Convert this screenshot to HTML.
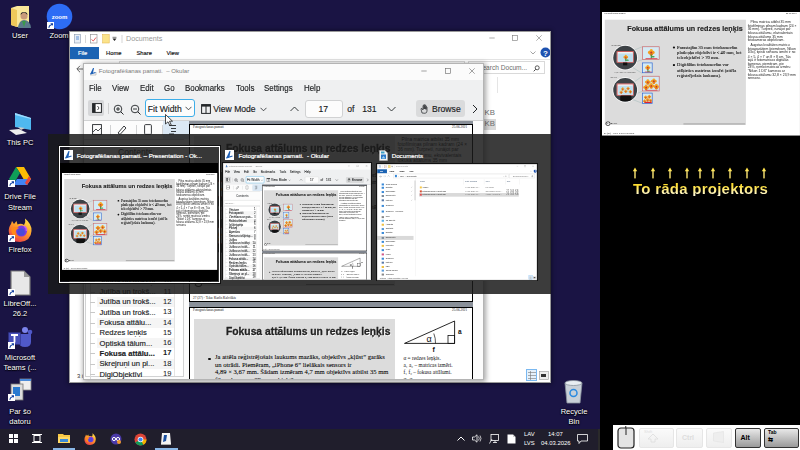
<!DOCTYPE html><html><head><meta charset="utf-8"><style>html,body{margin:0;padding:0;width:800px;height:450px;overflow:hidden;background:#000}*{box-sizing:content-box}</style></head><body><div style="position:absolute;left:0px;top:0px;width:800px;height:450px;overflow:hidden"><div style="position:absolute;left:0px;top:0px;width:600px;height:450px;background:#1a1444;"></div><svg style="position:absolute;left:9px;top:5px;" width="24" height="24" viewBox="0 0 24 24"><path d="M2 3 L8 1 L20 1 L20 20 L8 22 L2 20Z" fill="#fae79a"/><path d="M2 3 L8 5 L8 22 L2 20Z" fill="#efc85a"/><circle cx="15" cy="11" r="3.5" fill="#c99a7a"/><path d="M11.5 10 Q15 5 18.5 10 L18 8 Q15 6 12 8Z" fill="#222"/><path d="M9 23 Q10 15 15 15 Q21 15 22 23Z" fill="#5a7a8a"/><path d="M13 16 L15 22 L17 16Z" fill="#3a9a4a"/></svg><div style="position:absolute;left:-10px;top:31px;width:60px;font-family:'Liberation Sans',sans-serif;font-size:7.5px;line-height:10px;color:#fff;text-shadow:0 0 2px #000,0 1px 1px #000;text-align:center;white-space:nowrap">User</div><svg style="position:absolute;left:46px;top:3px;" width="27" height="27" viewBox="0 0 27 27"><circle cx="13.5" cy="13.5" r="12.8" fill="#2d6cf5"/><text x="13.5" y="15.5" font-size="6" font-family="Liberation Sans" font-weight="bold" fill="#fff" text-anchor="middle" letter-spacing="-0.1">zoom</text></svg><svg style="position:absolute;left:47px;top:22px;" width="7" height="7" viewBox="0 0 7 7"><rect x="0" y="0" width="7" height="7" fill="#fff"/><path d="M1.5 6 Q1.5 3 4.2 2.6 L3.4 1.3 L6 1.3 L6 3.8 L5 2.9 Q2.6 3.4 2.2 6Z" fill="#1340a0"/></svg><div style="position:absolute;left:29px;top:31px;width:60px;font-family:'Liberation Sans',sans-serif;font-size:7.5px;line-height:10px;color:#fff;text-shadow:0 0 2px #000,0 1px 1px #000;text-align:center;white-space:nowrap">Zoom</div><svg style="position:absolute;left:7px;top:112px;" width="28" height="24" viewBox="0 0 28 24"><path d="M8 1 L24 6 L24 18 L8 15Z" fill="#4fb8f0"/><path d="M8 1 L24 6 L24 7 L8 3Z" fill="#9fdcff"/><path d="M2 18 L12 17 L20 21 L9 23Z" fill="#eee"/><path d="M11 15 L18 16 L14 18Z" fill="#ccc"/></svg><div style="position:absolute;left:-10px;top:138px;width:60px;font-family:'Liberation Sans',sans-serif;font-size:7.5px;line-height:10px;color:#fff;text-shadow:0 0 2px #000,0 1px 1px #000;text-align:center;white-space:nowrap">This PC</div><svg style="position:absolute;left:8px;top:166px;" width="24" height="20" viewBox="0 0 24 20"><path d="M8 1 L16 1 L23 13 L19 19 L12 7Z" fill="#fbbc04"/><path d="M8 1 L12 7 L5 19 L1 13Z" fill="#0f9d58"/><path d="M5 19 L9 13 L23 13 L19 19Z" fill="#4285f4"/><path d="M19 19 L23 13 L21 10 L17 17Z" fill="#ea4335"/></svg><svg style="position:absolute;left:8px;top:180px;" width="7" height="7" viewBox="0 0 7 7"><rect x="0" y="0" width="7" height="7" fill="#fff"/><path d="M1.5 6 Q1.5 3 4.2 2.6 L3.4 1.3 L6 1.3 L6 3.8 L5 2.9 Q2.6 3.4 2.2 6Z" fill="#1340a0"/></svg><div style="position:absolute;left:-10px;top:192px;width:60px;font-family:'Liberation Sans',sans-serif;font-size:7.5px;line-height:10px;color:#fff;text-shadow:0 0 2px #000,0 1px 1px #000;text-align:center;white-space:nowrap">Drive File</div><div style="position:absolute;left:-10px;top:202.5px;width:60px;font-family:'Liberation Sans',sans-serif;font-size:7.5px;line-height:10px;color:#fff;text-shadow:0 0 2px #000,0 1px 1px #000;text-align:center;white-space:nowrap">Stream</div><svg style="position:absolute;left:8px;top:217.5px;" width="24" height="25" viewBox="0 0 24 25"><defs><linearGradient id="ffg" x1="0.8" y1="0" x2="0.2" y2="1"><stop offset="0" stop-color="#ffe34a"/><stop offset="0.45" stop-color="#ff9a2a"/><stop offset="1" stop-color="#e8344a"/></linearGradient></defs><path d="M17 0.5 Q24 6 23.5 13 Q23 23 12 24 Q2 24 0.8 14 Q0.5 9 3 6 L4 3 L6 6 L8.5 3 L9.5 6.5 Q13 5 16 7 Q18 4 17 0.5Z" fill="url(#ffg)"/><circle cx="13.5" cy="13" r="5.5" fill="#7a3ae0"/><circle cx="13" cy="14" r="3.8" fill="#4a4ad8"/><path d="M3.5 10 Q7 8 11 10 Q8 11 7.5 14 Q7 18 11 20 Q5 19 3.5 14Z" fill="#ff8a1a"/><path d="M16 8 Q19 10 18.5 13" stroke="#c060f0" stroke-width="1.5" fill="none"/></svg><svg style="position:absolute;left:8px;top:235px;" width="7" height="7" viewBox="0 0 7 7"><rect x="0" y="0" width="7" height="7" fill="#fff"/><path d="M1.5 6 Q1.5 3 4.2 2.6 L3.4 1.3 L6 1.3 L6 3.8 L5 2.9 Q2.6 3.4 2.2 6Z" fill="#1340a0"/></svg><div style="position:absolute;left:-10px;top:245px;width:60px;font-family:'Liberation Sans',sans-serif;font-size:7.5px;line-height:10px;color:#fff;text-shadow:0 0 2px #000,0 1px 1px #000;text-align:center;white-space:nowrap">Firefox</div><svg style="position:absolute;left:9px;top:270px;" width="22" height="26" viewBox="0 0 22 26"><path d="M2 1 L15 1 L21 7 L21 25 L2 25Z" fill="#e8e8e8" stroke="#777" stroke-width="1.2"/><path d="M15 1 L21 7 L15 7Z" fill="#999"/></svg><svg style="position:absolute;left:8px;top:289px;" width="7" height="7" viewBox="0 0 7 7"><rect x="0" y="0" width="7" height="7" fill="#fff"/><path d="M1.5 6 Q1.5 3 4.2 2.6 L3.4 1.3 L6 1.3 L6 3.8 L5 2.9 Q2.6 3.4 2.2 6Z" fill="#1340a0"/></svg><div style="position:absolute;left:-10px;top:299px;width:60px;font-family:'Liberation Sans',sans-serif;font-size:7.5px;line-height:10px;color:#fff;text-shadow:0 0 2px #000,0 1px 1px #000;text-align:center;white-space:nowrap">LibreOff...</div><div style="position:absolute;left:-10px;top:309px;width:60px;font-family:'Liberation Sans',sans-serif;font-size:7.5px;line-height:10px;color:#fff;text-shadow:0 0 2px #000,0 1px 1px #000;text-align:center;white-space:nowrap">26.2</div><svg style="position:absolute;left:7px;top:326px;" width="26" height="23" viewBox="0 0 26 23"><circle cx="18" cy="4" r="3" fill="#7b83eb"/><circle cx="23" cy="6" r="2.3" fill="#5059c9"/><path d="M12 8 L24 8 L24 16 Q24 21 18 21 Q12 21 12 16Z" fill="#5059c9"/><path d="M1.5 6.5 L13.5 6.5 L13.5 18.5 L1.5 18.5Z" fill="#464eb8" stroke="#2a2f80" stroke-width="0.5"/><path d="M4 9 H11 M7.5 9 V16.5" stroke="#fff" stroke-width="1.8"/></svg><svg style="position:absolute;left:8px;top:342px;" width="7" height="7" viewBox="0 0 7 7"><rect x="0" y="0" width="7" height="7" fill="#fff"/><path d="M1.5 6 Q1.5 3 4.2 2.6 L3.4 1.3 L6 1.3 L6 3.8 L5 2.9 Q2.6 3.4 2.2 6Z" fill="#1340a0"/></svg><div style="position:absolute;left:-10px;top:353px;width:60px;font-family:'Liberation Sans',sans-serif;font-size:7.5px;line-height:10px;color:#fff;text-shadow:0 0 2px #000,0 1px 1px #000;text-align:center;white-space:nowrap">Microsoft</div><div style="position:absolute;left:-10px;top:363px;width:60px;font-family:'Liberation Sans',sans-serif;font-size:7.5px;line-height:10px;color:#fff;text-shadow:0 0 2px #000,0 1px 1px #000;text-align:center;white-space:nowrap">Teams (...</div><svg style="position:absolute;left:8px;top:378px;" width="24" height="24" viewBox="0 0 24 24"><rect x="12" y="1" width="11" height="11" fill="#eee" stroke="#888" stroke-width="0.8"/><rect x="12" y="1" width="11" height="2" fill="#4a8ad8"/><rect x="3" y="6" width="12" height="16" fill="#ddd" stroke="#777" stroke-width="0.8"/><rect x="5" y="9" width="7" height="9" fill="#2a7ad0"/></svg><svg style="position:absolute;left:8px;top:394px;" width="7" height="7" viewBox="0 0 7 7"><rect x="0" y="0" width="7" height="7" fill="#fff"/><path d="M1.5 6 Q1.5 3 4.2 2.6 L3.4 1.3 L6 1.3 L6 3.8 L5 2.9 Q2.6 3.4 2.2 6Z" fill="#1340a0"/></svg><div style="position:absolute;left:-10px;top:406.5px;width:60px;font-family:'Liberation Sans',sans-serif;font-size:7.5px;line-height:10px;color:#fff;text-shadow:0 0 2px #000,0 1px 1px #000;text-align:center;white-space:nowrap">Par šo</div><div style="position:absolute;left:-10px;top:416.5px;width:60px;font-family:'Liberation Sans',sans-serif;font-size:7.5px;line-height:10px;color:#fff;text-shadow:0 0 2px #000,0 1px 1px #000;text-align:center;white-space:nowrap">datoru</div><svg style="position:absolute;left:562px;top:379px;" width="23" height="25" viewBox="0 0 23 25"><path d="M3 4 L20 4 L18 24 L5 24Z" fill="#c8d0d8" stroke="#8a949e" stroke-width="0.8"/><ellipse cx="11.5" cy="4" rx="8.5" ry="2.5" fill="#e8eef2" stroke="#8a949e" stroke-width="0.8"/><circle cx="11.5" cy="14" r="3.5" fill="none" stroke="#2a8ae0" stroke-width="1.5"/></svg><div style="position:absolute;left:544px;top:406.5px;width:60px;font-family:'Liberation Sans',sans-serif;font-size:7.5px;line-height:10px;color:#fff;text-shadow:0 0 2px #000,0 1px 1px #000;text-align:center;white-space:nowrap">Recycle</div><div style="position:absolute;left:544px;top:416.5px;width:60px;font-family:'Liberation Sans',sans-serif;font-size:7.5px;line-height:10px;color:#fff;text-shadow:0 0 2px #000,0 1px 1px #000;text-align:center;white-space:nowrap">Bin</div><div style="position:absolute;left:0px;top:429px;width:600px;height:21px;background:#201e2c;"></div><svg style="position:absolute;left:9px;top:434px;" width="9" height="9" viewBox="0 0 9 9"><rect x="0" y="0" width="4" height="4" fill="#fff"/><rect x="5" y="0" width="4" height="4" fill="#fff"/><rect x="0" y="5" width="4" height="4" fill="#fff"/><rect x="5" y="5" width="4" height="4" fill="#fff"/></svg><svg style="position:absolute;left:32px;top:434px;" width="10" height="9" viewBox="0 0 10 9"><rect x="2" y="1.5" width="6" height="6" fill="none" stroke="#fff" stroke-width="1"/><path d="M0 0.5 H10 M0 8.5 H10" stroke="#fff" stroke-width="1"/></svg><svg style="position:absolute;left:58px;top:433px;" width="12" height="11" viewBox="0 0 12 11"><path d="M0 1 L5 1 L6 2 L12 2 L12 10 L0 10Z" fill="#f8c846"/><rect x="0" y="4" width="12" height="6" fill="#ffd966"/><rect x="2" y="6" width="8" height="3" fill="#3a8ad8"/></svg><div style="position:absolute;left:53px;top:447.5px;width:22px;height:2px;background:#8ab8e8;"></div><svg style="position:absolute;left:84px;top:433px;" width="12" height="12.5" viewBox="0 0 24 25"><path d="M17 0.5 Q24 6 23.5 13 Q23 23 12 24 Q2 24 0.8 14 Q0.5 9 3 6 L4 3 L6 6 L8.5 3 L9.5 6.5 Q13 5 16 7 Q18 4 17 0.5Z" fill="url(#ffg)"/><circle cx="13.5" cy="13" r="5.5" fill="#7a3ae0"/><circle cx="13" cy="14" r="3.8" fill="#4a4ad8"/><path d="M3.5 10 Q7 8 11 10 Q8 11 7.5 14 Q7 18 11 20 Q5 19 3.5 14Z" fill="#ff8a1a"/></svg><svg style="position:absolute;left:110px;top:433px;" width="12" height="12" viewBox="0 0 12 12"><circle cx="6" cy="6" r="5.5" fill="#4b3aa8"/><circle cx="4" cy="6" r="1.6" fill="none" stroke="#fff" stroke-width="1"/><circle cx="8" cy="6" r="1.6" fill="none" stroke="#fff" stroke-width="1"/><circle cx="9" cy="9" r="2" fill="#f39a2a"/></svg><svg style="position:absolute;left:134px;top:433px;" width="13" height="13" viewBox="0 0 13 13"><circle cx="6.5" cy="6.5" r="6" fill="#db4437"/><path d="M6.5 6.5 L1.3 9.5 A6 6 0 0 0 9.5 11.7Z" fill="#0f9d58"/><path d="M6.5 6.5 L9.5 11.7 A6 6 0 0 0 12.5 6.5 L6.5 6.5Z" fill="#f4b400"/><circle cx="6.5" cy="6.5" r="2.8" fill="#fff"/><circle cx="6.5" cy="6.5" r="2.1" fill="#4285f4"/></svg><svg style="position:absolute;left:160px;top:432px;" width="12" height="13" viewBox="0 0 12 13"><path d="M2 1 L10 1 L11 12 L1 12Z" fill="#f4f4f4"/><path d="M4 3 L7 3 L6 9 L3 10Z" fill="#1a4fa0"/><path d="M1 12 L11 12 L11 13 L1 13Z" fill="#aaa"/></svg><div style="position:absolute;left:155px;top:447.5px;width:23px;height:2px;background:#8ab8e8;"></div><svg style="position:absolute;left:457px;top:436px;" width="8" height="5" viewBox="0 0 8 5"><path d="M0.5 4.5 L4 1 L7.5 4.5" fill="none" stroke="#fff" stroke-width="1"/></svg><svg style="position:absolute;left:472px;top:434px;" width="10" height="9" viewBox="0 0 10 9"><path d="M0.5 3 H2.5 L5 0.8 V8.2 L2.5 6 H0.5Z" fill="none" stroke="#fff" stroke-width="0.8"/><path d="M6.5 2.5 Q8 4.5 6.5 6.5 M8 1.5 Q10 4.5 8 7.5" fill="none" stroke="#fff" stroke-width="0.7"/></svg><svg style="position:absolute;left:489px;top:434px;" width="10" height="10" viewBox="0 0 10 10"><rect x="2" y="0.5" width="7.5" height="6" fill="none" stroke="#fff" stroke-width="0.8"/><path d="M4 8.5 H8 M6 6.5 V8.5 M0.5 9.5 L3 5" stroke="#fff" stroke-width="0.8"/></svg><svg style="position:absolute;left:507px;top:434px;" width="9" height="10" viewBox="0 0 9 10"><path d="M0.5 0.5 H6 L8.5 3 V9.5 H0.5Z" fill="#fff"/><path d="M6 0.5 V3 H8.5" fill="#ccc"/></svg><div style="position:absolute;left:524px;top:431.5px;font-family:'Liberation Sans',sans-serif;font-size:5.9px;line-height:1;color:#fff;white-space:nowrap;">LAV</div><div style="position:absolute;left:524px;top:440.5px;font-family:'Liberation Sans',sans-serif;font-size:5.9px;line-height:1;color:#fff;white-space:nowrap;">LVS</div><div style="position:absolute;left:548px;top:431.5px;font-family:'Liberation Sans',sans-serif;font-size:5.9px;line-height:1;color:#fff;white-space:nowrap;">14:07</div><div style="position:absolute;left:541px;top:440.5px;font-family:'Liberation Sans',sans-serif;font-size:5.9px;line-height:1;color:#fff;white-space:nowrap;">04.03.2026</div><svg style="position:absolute;left:577px;top:434px;" width="11" height="10" viewBox="0 0 11 10"><path d="M0.5 0.5 H10.5 V7 H4 L2 9.5 V7 H0.5Z" fill="none" stroke="#fff" stroke-width="0.8"/></svg><div style="position:absolute;left:598px;top:429px;width:2px;height:21px;background:#2a2a2a;"></div><div style="position:absolute;left:69px;top:31px;width:482px;height:352px;background:#ccc;box-shadow:0 0 4px 1px rgba(0,0,0,0.4)"></div><div style="position:absolute;left:69px;top:31px;"><div style="position:absolute;left:0px;top:0px;width:482px;height:352px;background:#fff;overflow:hidden"><svg style="position:absolute;left:5px;top:3px;" width="50" height="10" viewBox="0 0 50 10"><rect x="0.5" y="0.5" width="6" height="8.5" fill="#e8eef6" stroke="#8a9ab0" stroke-width="0.6"/><path d="M2 3 H5 M2 5 H5" stroke="#3a7ad0" stroke-width="0.8"/><path d="M11.5 1 V9" stroke="#bbb" stroke-width="0.6"/><rect x="16.5" y="0.5" width="6.5" height="8.5" fill="#fff" stroke="#888" stroke-width="0.6"/><path d="M17.5 5.5 L19.3 7 L22 3.5" stroke="#d33" stroke-width="0.8" fill="none"/><rect x="28.7" y="0.5" width="6.5" height="8.5" fill="#fbe38a" stroke="#e0b040" stroke-width="0.5"/><path d="M38.5 4.5 L42.5 4.5 L40.5 7Z" fill="#222"/><path d="M38.5 3.3 H42.5" stroke="#222" stroke-width="0.6"/><path d="M48 1 V9" stroke="#bbb" stroke-width="0.6"/></svg><div style="position:absolute;left:57px;top:4px;font-family:'Liberation Sans',sans-serif;font-size:7.2px;line-height:1;color:#9a9a9a;white-space:nowrap;">Documents</div><svg style="position:absolute;left:419.5px;top:4px;" width="6" height="6" viewBox="0 0 6 6"><path d="M0.3 3 H5.7" stroke="#777" stroke-width="0.6"/></svg><svg style="position:absolute;left:442.7px;top:4px;" width="6" height="6" viewBox="0 0 6 6"><rect x="0.4" y="0.4" width="5.2" height="5.2" fill="none" stroke="#777" stroke-width="0.6"/></svg><svg style="position:absolute;left:466.7px;top:4px;" width="6" height="6" viewBox="0 0 6 6"><path d="M0.3 0.3 L5.7 5.7 M5.7 0.3 L0.3 5.7" stroke="#777" stroke-width="0.6"/></svg><div style="position:absolute;left:0px;top:16.3px;width:29.5px;height:11.5px;background:#1b63b3;"></div><div style="position:absolute;left:9px;top:19.5px;font-family:'Liberation Sans',sans-serif;font-size:5.8px;line-height:1;color:#fff;white-space:nowrap;-webkit-text-stroke:0.15px #fff">File</div><div style="position:absolute;left:37px;top:19.5px;font-family:'Liberation Sans',sans-serif;font-size:5.8px;line-height:1;color:#111;white-space:nowrap;-webkit-text-stroke:0.15px #111">Home</div><div style="position:absolute;left:67.5px;top:19.5px;font-family:'Liberation Sans',sans-serif;font-size:5.8px;line-height:1;color:#111;white-space:nowrap;-webkit-text-stroke:0.15px #111">Share</div><div style="position:absolute;left:97.5px;top:19.5px;font-family:'Liberation Sans',sans-serif;font-size:5.8px;line-height:1;color:#111;white-space:nowrap;-webkit-text-stroke:0.15px #111">View</div><svg style="position:absolute;left:460.5px;top:20px;" width="6" height="4" viewBox="0 0 6 4"><path d="M0.5 0.5 L3 3 L5.5 0.5" stroke="#666" stroke-width="0.6" fill="none"/></svg><svg style="position:absolute;left:471px;top:16px;" width="11" height="11" viewBox="0 0 11 11"><circle cx="5.5" cy="5.5" r="5" fill="#1d52b0"/><text x="5.5" y="8.5" font-size="8" font-weight="bold" font-family="Liberation Sans" fill="#fff" text-anchor="middle">?</text></svg><div style="position:absolute;left:0px;top:28px;width:482px;height:1px;background:#e3e3e3;"></div><svg style="position:absolute;left:6.5px;top:33.5px;" width="9" height="8" viewBox="0 0 9 8"><path d="M8.5 4 H1 M4 0.8 L0.8 4 L4 7.2" stroke="#555" stroke-width="0.9" fill="none"/></svg><svg style="position:absolute;left:18px;top:33px;" width="30" height="8" viewBox="0 0 30 8"><path d="M0.5 4 H8 M5 1 L8 4 L5 7" stroke="#aaa" stroke-width="0.8" fill="none"/><path d="M14 5 L17 2 L20 5" stroke="#555" stroke-width="0.8" fill="none"/></svg><div style="position:absolute;left:50px;top:30px;width:346px;height:13px;border:1px solid #d9d9d9;box-sizing:border-box"></div><div style="position:absolute;left:54px;top:33px;width:6px;height:7px;background:#3a8ad8;"></div><div style="position:absolute;left:64px;top:33.5px;font-family:'Liberation Sans',sans-serif;font-size:5.8px;line-height:1;color:#222;white-space:nowrap;">› &nbsp;User &nbsp;› &nbsp;Documents</div><div style="position:absolute;left:380px;top:33.5px;font-family:'Liberation Sans',sans-serif;font-size:5.8px;line-height:1;color:#666;white-space:nowrap;">⌄ ↻</div><div style="position:absolute;left:399px;top:30px;width:77px;height:13px;border:1px solid #d9d9d9;box-sizing:border-box"></div><div style="position:absolute;left:409px;top:34px;font-family:'Liberation Sans',sans-serif;font-size:6.6px;line-height:1;color:#6d6d6d;white-space:nowrap;">Search Docum...</div><svg style="position:absolute;left:464px;top:34px;" width="7" height="7" viewBox="0 0 7 7"><circle cx="4.2" cy="2.8" r="2" fill="none" stroke="#333" stroke-width="0.8"/><path d="M2.7 4.3 L0.7 6.3" stroke="#333" stroke-width="0.9"/></svg><div style="position:absolute;left:14px;top:59px;width:7px;height:6px;background:#3a8ad8;"></div><div style="position:absolute;left:26px;top:59px;font-family:'Liberation Sans',sans-serif;font-size:5.8px;line-height:1;color:#222;white-space:nowrap;">Quick access</div><div style="position:absolute;left:14px;top:69px;width:7px;height:6px;background:#3a8ad8;"></div><div style="position:absolute;left:26px;top:69px;font-family:'Liberation Sans',sans-serif;font-size:5.8px;line-height:1;color:#222;white-space:nowrap;">Desktop</div><div style="position:absolute;left:103px;top:69px;font-family:'Liberation Sans',sans-serif;font-size:5px;line-height:1;color:#888;white-space:nowrap;">✓</div><div style="position:absolute;left:14px;top:82px;width:7px;height:6px;background:#3a8ad8;"></div><div style="position:absolute;left:26px;top:82px;font-family:'Liberation Sans',sans-serif;font-size:5.8px;line-height:1;color:#222;white-space:nowrap;">Downloads</div><div style="position:absolute;left:103px;top:82px;font-family:'Liberation Sans',sans-serif;font-size:5px;line-height:1;color:#888;white-space:nowrap;">✓</div><div style="position:absolute;left:14px;top:94px;width:7px;height:6px;background:#7a8a9a;"></div><div style="position:absolute;left:26px;top:94px;font-family:'Liberation Sans',sans-serif;font-size:5.8px;line-height:1;color:#222;white-space:nowrap;">Documents</div><div style="position:absolute;left:103px;top:94px;font-family:'Liberation Sans',sans-serif;font-size:5px;line-height:1;color:#888;white-space:nowrap;">✓</div><div style="position:absolute;left:14px;top:107px;width:7px;height:6px;background:#5a7aa8;"></div><div style="position:absolute;left:26px;top:107px;font-family:'Liberation Sans',sans-serif;font-size:5.8px;line-height:1;color:#222;white-space:nowrap;">Pictures</div><div style="position:absolute;left:103px;top:107px;font-family:'Liberation Sans',sans-serif;font-size:5px;line-height:1;color:#888;white-space:nowrap;">✓</div><div style="position:absolute;left:14px;top:124px;width:7px;height:6px;background:#3a8ad8;"></div><div style="position:absolute;left:26px;top:124px;font-family:'Liberation Sans',sans-serif;font-size:5.8px;line-height:1;color:#222;white-space:nowrap;">OneDrive</div><div style="position:absolute;left:14px;top:141px;width:7px;height:6px;background:#3a8ad8;"></div><div style="position:absolute;left:26px;top:141px;font-family:'Liberation Sans',sans-serif;font-size:5.8px;line-height:1;color:#222;white-space:nowrap;">OneDrive - Personal</div><div style="position:absolute;left:14px;top:158px;width:7px;height:6px;background:#888;"></div><div style="position:absolute;left:26px;top:158px;font-family:'Liberation Sans',sans-serif;font-size:5.8px;line-height:1;color:#222;white-space:nowrap;">User</div><div style="position:absolute;left:14px;top:169px;width:7px;height:6px;background:#5ab0e8;"></div><div style="position:absolute;left:26px;top:169px;font-family:'Liberation Sans',sans-serif;font-size:5.8px;line-height:1;color:#222;white-space:nowrap;">3D Objects</div><div style="position:absolute;left:14px;top:181px;width:7px;height:6px;background:#f0c040;"></div><div style="position:absolute;left:26px;top:181px;font-family:'Liberation Sans',sans-serif;font-size:5.8px;line-height:1;color:#222;white-space:nowrap;">AppData</div><div style="position:absolute;left:14px;top:194px;width:7px;height:6px;background:#5a9ad8;"></div><div style="position:absolute;left:26px;top:194px;font-family:'Liberation Sans',sans-serif;font-size:5.8px;line-height:1;color:#222;white-space:nowrap;">Contacts</div><div style="position:absolute;left:14px;top:206px;width:7px;height:6px;background:#3a8ad8;"></div><div style="position:absolute;left:26px;top:206px;font-family:'Liberation Sans',sans-serif;font-size:5.8px;line-height:1;color:#222;white-space:nowrap;">Desktop</div><div style="position:absolute;left:0px;top:218px;width:110px;height:12px;background:#d9d9d9;"></div><div style="position:absolute;left:14px;top:221px;width:7px;height:6px;background:#7a8a9a;"></div><div style="position:absolute;left:26px;top:221px;font-family:'Liberation Sans',sans-serif;font-size:5.8px;line-height:1;color:#222;white-space:nowrap;">Documents</div><div style="position:absolute;left:14px;top:233px;width:7px;height:6px;background:#3a8ad8;"></div><div style="position:absolute;left:26px;top:233px;font-family:'Liberation Sans',sans-serif;font-size:5.8px;line-height:1;color:#222;white-space:nowrap;">Downloads</div><div style="position:absolute;left:14px;top:245px;width:7px;height:6px;background:#f0c040;"></div><div style="position:absolute;left:26px;top:245px;font-family:'Liberation Sans',sans-serif;font-size:5.8px;line-height:1;color:#222;white-space:nowrap;">Favorites</div><div style="position:absolute;left:14px;top:258px;width:7px;height:6px;background:#3a8ad8;"></div><div style="position:absolute;left:26px;top:258px;font-family:'Liberation Sans',sans-serif;font-size:5.8px;line-height:1;color:#222;white-space:nowrap;">Links</div><div style="position:absolute;left:14px;top:271px;width:7px;height:6px;background:#d05a8a;"></div><div style="position:absolute;left:26px;top:271px;font-family:'Liberation Sans',sans-serif;font-size:5.8px;line-height:1;color:#222;white-space:nowrap;">Music</div><div style="position:absolute;left:14px;top:284px;width:7px;height:6px;background:#3a8ad8;"></div><div style="position:absolute;left:26px;top:284px;font-family:'Liberation Sans',sans-serif;font-size:5.8px;line-height:1;color:#222;white-space:nowrap;">OneDrive</div><div style="position:absolute;left:14px;top:296px;width:7px;height:6px;background:#5a7aa8;"></div><div style="position:absolute;left:26px;top:296px;font-family:'Liberation Sans',sans-serif;font-size:5.8px;line-height:1;color:#222;white-space:nowrap;">Pictures</div><div style="position:absolute;left:14px;top:309px;width:7px;height:6px;background:#f0c040;"></div><div style="position:absolute;left:26px;top:309px;font-family:'Liberation Sans',sans-serif;font-size:5.8px;line-height:1;color:#222;white-space:nowrap;">PBS</div><div style="position:absolute;left:14px;top:320px;width:7px;height:6px;background:#5a9ad8;"></div><div style="position:absolute;left:26px;top:320px;font-family:'Liberation Sans',sans-serif;font-size:5.8px;line-height:1;color:#222;white-space:nowrap;">Saved Games</div><div style="position:absolute;left:14px;top:332px;width:7px;height:6px;background:#888;"></div><div style="position:absolute;left:26px;top:332px;font-family:'Liberation Sans',sans-serif;font-size:5.8px;line-height:1;color:#222;white-space:nowrap;">Searches</div><div style="position:absolute;left:116px;top:44px;width:0.8px;height:296px;background:#e5e5e5;"></div><div style="position:absolute;left:113px;top:50px;width:2.5px;height:60px;background:#cdcdcd;"></div><div style="position:absolute;left:129.5px;top:50.5px;font-family:'Liberation Sans',sans-serif;font-size:5.8px;line-height:1;color:#4c607a;white-space:nowrap;">Name</div><div style="position:absolute;left:266px;top:50.5px;font-family:'Liberation Sans',sans-serif;font-size:5.8px;line-height:1;color:#4c607a;white-space:nowrap;">Date modified</div><div style="position:absolute;left:327px;top:50.5px;font-family:'Liberation Sans',sans-serif;font-size:5.8px;line-height:1;color:#4c607a;white-space:nowrap;">Type</div><div style="position:absolute;left:390.6px;top:50.5px;font-family:'Liberation Sans',sans-serif;font-size:5.8px;line-height:1;color:#4c607a;white-space:nowrap;">Size</div><div style="position:absolute;left:261px;top:46px;width:0.7px;height:16px;background:#e5e5e5;"></div><div style="position:absolute;left:322px;top:46px;width:0.7px;height:16px;background:#e5e5e5;"></div><div style="position:absolute;left:385.6px;top:46px;width:0.7px;height:16px;background:#e5e5e5;"></div><div style="position:absolute;left:427.5px;top:46px;width:0.7px;height:16px;background:#e5e5e5;"></div><div style="position:absolute;left:129px;top:68px;width:6px;height:6px;background:#f8c846;"></div><div style="position:absolute;left:136px;top:68px;font-family:'Liberation Sans',sans-serif;font-size:5.8px;line-height:1;color:#222;white-space:nowrap;">Arch90</div><div style="position:absolute;left:266px;top:68px;font-family:'Liberation Sans',sans-serif;font-size:5.8px;line-height:1;color:#6d6d6d;white-space:nowrap;">04.03.2026 11:...</div><div style="position:absolute;left:327px;top:68px;font-family:'Liberation Sans',sans-serif;font-size:5.8px;line-height:1;color:#6d6d6d;white-space:nowrap;">File folder</div><div style="position:absolute;left:129px;top:79.7px;width:6px;height:6px;background:#d35030;"></div><div style="position:absolute;left:136px;top:79.7px;font-family:'Liberation Sans',sans-serif;font-size:5.8px;line-height:1;color:#222;white-space:nowrap;">Fotografēšanas_pamati.odp</div><div style="position:absolute;left:266px;top:79.7px;font-family:'Liberation Sans',sans-serif;font-size:5.8px;line-height:1;color:#6d6d6d;white-space:nowrap;">04.03.2026 11:...</div><div style="position:absolute;left:327px;top:79.7px;font-family:'Liberation Sans',sans-serif;font-size:5.8px;line-height:1;color:#6d6d6d;white-space:nowrap;">OpenOffice prese...</div><div style="position:absolute;left:380px;top:77.2px;width:46px;font-family:'Liberation Sans',sans-serif;font-size:7.8px;line-height:10px;color:#6d6d6d;text-align:right;white-space:nowrap">22 504 KB</div><div style="position:absolute;left:126.5px;top:88px;width:300px;height:10.5px;background:#d9d9d9;"></div><div style="position:absolute;left:129px;top:90px;width:6px;height:6px;background:#e05050;"></div><div style="position:absolute;left:136px;top:90px;font-family:'Liberation Sans',sans-serif;font-size:5.8px;line-height:1;color:#222;white-space:nowrap;">Fotografēšanas_pamati.pdf</div><div style="position:absolute;left:266px;top:90px;font-family:'Liberation Sans',sans-serif;font-size:5.8px;line-height:1;color:#6d6d6d;white-space:nowrap;">04.03.2026 11:...</div><div style="position:absolute;left:327px;top:90px;font-family:'Liberation Sans',sans-serif;font-size:5.8px;line-height:1;color:#6d6d6d;white-space:nowrap;">Adobe Acrobat D...</div><div style="position:absolute;left:380px;top:87.5px;width:46px;font-family:'Liberation Sans',sans-serif;font-size:7.8px;line-height:10px;color:#6d6d6d;text-align:right;white-space:nowrap">26 503 KB</div><div style="position:absolute;left:8px;top:342.5px;font-family:'Liberation Sans',sans-serif;font-size:5.8px;line-height:1;color:#333;white-space:nowrap;">3 items &nbsp; 1 item selected &nbsp;741 KB</div><div style="position:absolute;left:457px;top:338px;width:11px;height:12px;border:1px solid #7ab8f0;background:#e5f1fb;box-sizing:border-box"></div><svg style="position:absolute;left:458px;top:340px;" width="10" height="9" viewBox="0 0 10 9"><path d="M1 1.5H9M1 4.5H9M1 7.5H9M3.5 0V9" stroke="#777" stroke-width="0.6"/></svg><svg style="position:absolute;left:470px;top:340px;" width="10" height="9" viewBox="0 0 10 9"><rect x="0.5" y="0.5" width="9" height="8" fill="#eee" stroke="#999" stroke-width="0.6"/><rect x="2" y="3" width="5" height="3" fill="#333"/></svg><div style="position:absolute;left:0px;top:0px;width:482px;height:352px;border:1px solid #9a9a9a;box-sizing:border-box"></div></div></div><div style="position:absolute;left:83px;top:62.7px;width:401px;height:317px;background:#ccc;box-shadow:1px 1px 5px 1px rgba(0,0,0,0.35)"></div><div style="position:absolute;left:83px;top:62.7px;"><div style="position:absolute;left:0px;top:0px;width:401px;height:317px;background:#eff0f1;overflow:hidden"><div style="position:absolute;left:0px;top:0px;width:401px;height:17.8px;background:#fbfbfb;"></div><svg style="position:absolute;left:6px;top:4px;" width="8" height="9" viewBox="0 0 8 9"><path d="M1 8 L7 8 L7 5" fill="none" stroke="#aaa" stroke-width="0.6"/><path d="M4 1 L5 1 L4 6 L1 7.5Z" fill="#1d5fb5"/><path d="M1.5 7 L6.5 5.5" stroke="#1d5fb5" stroke-width="1.2"/></svg><div style="position:absolute;left:15.8px;top:5px;font-family:'Liberation Sans',sans-serif;font-size:6.1px;line-height:1;color:#7a7a7a;white-space:nowrap;">Fotografēšanas pamati. &nbsp;– Okular</div><svg style="position:absolute;left:338px;top:5px;" width="6" height="6" viewBox="0 0 6 6"><path d="M0.3 3 H5.7" stroke="#666" stroke-width="0.6"/></svg><svg style="position:absolute;left:361.7px;top:5px;" width="6" height="6" viewBox="0 0 6 6"><rect x="0.4" y="0.4" width="5.2" height="5.2" fill="none" stroke="#666" stroke-width="0.6"/></svg><svg style="position:absolute;left:385.7px;top:5px;" width="6" height="6" viewBox="0 0 6 6"><path d="M0.3 0.3 L5.7 5.7 M5.7 0.3 L0.3 5.7" stroke="#666" stroke-width="0.6"/></svg><div style="position:absolute;left:6.3px;top:21.4px;font-family:'Liberation Sans',sans-serif;font-size:8.8px;line-height:1;color:#1a1c1e;white-space:nowrap;-webkit-text-stroke:0.15px #1a1c1e;transform-origin:0 0;transform:scaleX(0.9)">File</div><div style="position:absolute;left:28.7px;top:21.4px;font-family:'Liberation Sans',sans-serif;font-size:8.8px;line-height:1;color:#1a1c1e;white-space:nowrap;-webkit-text-stroke:0.15px #1a1c1e;transform-origin:0 0;transform:scaleX(0.9)">View</div><div style="position:absolute;left:57px;top:21.4px;font-family:'Liberation Sans',sans-serif;font-size:8.8px;line-height:1;color:#1a1c1e;white-space:nowrap;-webkit-text-stroke:0.15px #1a1c1e;transform-origin:0 0;transform:scaleX(0.9)">Edit</div><div style="position:absolute;left:81px;top:21.4px;font-family:'Liberation Sans',sans-serif;font-size:8.8px;line-height:1;color:#1a1c1e;white-space:nowrap;-webkit-text-stroke:0.15px #1a1c1e;transform-origin:0 0;transform:scaleX(0.9)">Go</div><div style="position:absolute;left:102px;top:21.4px;font-family:'Liberation Sans',sans-serif;font-size:8.8px;line-height:1;color:#1a1c1e;white-space:nowrap;-webkit-text-stroke:0.15px #1a1c1e;transform-origin:0 0;transform:scaleX(0.9)">Bookmarks</div><div style="position:absolute;left:153px;top:21.4px;font-family:'Liberation Sans',sans-serif;font-size:8.8px;line-height:1;color:#1a1c1e;white-space:nowrap;-webkit-text-stroke:0.15px #1a1c1e;transform-origin:0 0;transform:scaleX(0.9)">Tools</div><div style="position:absolute;left:181.3px;top:21.4px;font-family:'Liberation Sans',sans-serif;font-size:8.8px;line-height:1;color:#1a1c1e;white-space:nowrap;-webkit-text-stroke:0.15px #1a1c1e;transform-origin:0 0;transform:scaleX(0.9)">Settings</div><div style="position:absolute;left:221px;top:21.4px;font-family:'Liberation Sans',sans-serif;font-size:8.8px;line-height:1;color:#1a1c1e;white-space:nowrap;-webkit-text-stroke:0.15px #1a1c1e;transform-origin:0 0;transform:scaleX(0.9)">Help</div><div style="position:absolute;left:4.5px;top:37.3px;width:16.5px;height:16.5px;background:#d6d7d9;border-radius:2px"></div><svg style="position:absolute;left:9px;top:40px;" width="10" height="10" viewBox="0 0 10 10"><rect x="0.6" y="0.6" width="8.8" height="8.8" fill="#fff" stroke="#232629" stroke-width="1"/><rect x="0.6" y="0.6" width="3" height="8.8" fill="#232629"/><path d="M5.5 3 L7 5 L5.5 7" stroke="#232629" stroke-width="0.8" fill="none"/></svg><svg style="position:absolute;left:29.5px;top:41px;" width="11" height="11" viewBox="0 0 11 11"><circle cx="5" cy="5" r="3.8" fill="none" stroke="#232629" stroke-width="0.9"/><path d="M3 5 H7 M5 3 V7" stroke="#232629" stroke-width="0.9"/><path d="M7.8 7.8 L10.5 10.5" stroke="#232629" stroke-width="1"/></svg><svg style="position:absolute;left:47px;top:41px;" width="11" height="11" viewBox="0 0 11 11"><circle cx="5" cy="5" r="3.8" fill="none" stroke="#232629" stroke-width="0.9"/><path d="M3 5 H7" stroke="#232629" stroke-width="0.9"/><path d="M7.8 7.8 L10.5 10.5" stroke="#232629" stroke-width="1"/></svg><div style="position:absolute;left:25px;top:40px;width:0.7px;height:11px;background:#cfd0d1;"></div><div style="position:absolute;left:61.5px;top:36.3px;width:50.5px;height:18.5px;background:#fcfcfc;border:1px solid #3daee9;border-radius:3px;box-sizing:border-box"></div><div style="position:absolute;left:64.8px;top:42.5px;font-family:'Liberation Sans',sans-serif;font-size:8.6px;line-height:1;color:#1a1c1e;white-space:nowrap;-webkit-text-stroke:0.15px #1a1c1e">Fit Width</div><svg style="position:absolute;left:102px;top:43.5px;" width="7" height="5" viewBox="0 0 7 5"><path d="M0.5 0.8 L3.5 3.8 L6.5 0.8" stroke="#232629" stroke-width="0.8" fill="none"/></svg><svg style="position:absolute;left:118px;top:41px;" width="10" height="10" viewBox="0 0 10 10"><rect x="0.6" y="0.6" width="8.8" height="8.8" fill="none" stroke="#232629" stroke-width="1"/><path d="M5 0.6 V9.4" stroke="#232629" stroke-width="1"/><rect x="0.6" y="0.6" width="8.8" height="2" fill="#232629"/></svg><div style="position:absolute;left:130.3px;top:42.8px;font-family:'Liberation Sans',sans-serif;font-size:8.6px;line-height:1;color:#1a1c1e;white-space:nowrap;-webkit-text-stroke:0.15px #1a1c1e">View Mode</div><svg style="position:absolute;left:177px;top:44px;" width="7" height="5" viewBox="0 0 7 5"><path d="M0.5 0.8 L3.5 3.8 L6.5 0.8" stroke="#232629" stroke-width="0.8" fill="none"/></svg><svg style="position:absolute;left:207px;top:43px;" width="9" height="6" viewBox="0 0 9 6"><path d="M0.5 5 L4.5 1 L8.5 5" stroke="#232629" stroke-width="0.9" fill="none"/></svg><div style="position:absolute;left:222px;top:36.9px;width:38px;height:18px;background:#fcfcfc;border:1px solid #d1d2d3;border-radius:3px;box-sizing:border-box"></div><div style="position:absolute;left:235.5px;top:42.8px;font-family:'Liberation Sans',sans-serif;font-size:8.6px;line-height:1;color:#1a1c1e;white-space:nowrap;-webkit-text-stroke:0.15px #1a1c1e">17</div><div style="position:absolute;left:264.3px;top:42.8px;font-family:'Liberation Sans',sans-serif;font-size:8.6px;line-height:1;color:#1a1c1e;white-space:nowrap;-webkit-text-stroke:0.15px #1a1c1e">of</div><div style="position:absolute;left:279.3px;top:42.8px;font-family:'Liberation Sans',sans-serif;font-size:8.6px;line-height:1;color:#1a1c1e;white-space:nowrap;-webkit-text-stroke:0.15px #1a1c1e">131</div><svg style="position:absolute;left:304px;top:43px;" width="9" height="6" viewBox="0 0 9 6"><path d="M0.5 1 L4.5 5 L8.5 1" stroke="#232629" stroke-width="0.9" fill="none"/></svg><div style="position:absolute;left:333.3px;top:37.8px;width:49px;height:16.2px;background:#dadbdc;border-radius:3px"></div><svg style="position:absolute;left:337px;top:41px;" width="10" height="10" viewBox="0 0 10 10"><path d="M2 9 L1 5 Q1 4 2 4.5 L3 6 V1.5 Q3.5 0.8 4 1.5 V5 V1 Q4.5 0.3 5 1 V5 V1.5 Q5.5 0.8 6 1.5 V5.5 V3 Q6.5 2.3 7 3 V7 Q7 9 5 9.3Z" fill="none" stroke="#232629" stroke-width="0.7"/></svg><div style="position:absolute;left:349px;top:42.8px;font-family:'Liberation Sans',sans-serif;font-size:8.6px;line-height:1;color:#1a1c1e;white-space:nowrap;-webkit-text-stroke:0.15px #1a1c1e">Browse</div><svg style="position:absolute;left:389px;top:41px;" width="6" height="10" viewBox="0 0 6 10"><path d="M1 1 L5 5 L1 9" stroke="#232629" stroke-width="1" fill="none"/></svg><div style="position:absolute;left:0px;top:57px;width:401px;height:0.8px;background:#d1d2d3;"></div><div style="position:absolute;left:0px;top:58px;width:106px;height:259px;background:#fcfcfc;"></div><svg style="position:absolute;left:8.5px;top:61px;" width="10" height="11" viewBox="0 0 10 11"><rect x="0.6" y="0.6" width="8.8" height="9.8" fill="none" stroke="#232629" stroke-width="0.9"/><path d="M1 8 L4 5 L6 7 L9 4" stroke="#232629" stroke-width="0.8" fill="none"/></svg><div style="position:absolute;left:27px;top:62px;width:0.8px;height:10px;background:#d1d2d3;"></div><svg style="position:absolute;left:34px;top:61px;" width="10" height="11" viewBox="0 0 10 11"><path d="M1 9 L7 2 L9 4 L3 10.5Z" fill="none" stroke="#232629" stroke-width="0.9"/></svg><div style="position:absolute;left:53px;top:62px;width:0.8px;height:10px;background:#d1d2d3;"></div><svg style="position:absolute;left:61px;top:61px;" width="8" height="11" viewBox="0 0 8 11"><rect x="0.6" y="0.6" width="6.8" height="9.8" rx="1" fill="none" stroke="#232629" stroke-width="0.9"/></svg><div style="position:absolute;left:79px;top:62px;width:0.8px;height:10px;background:#d1d2d3;"></div><svg style="position:absolute;left:85px;top:61px;" width="9" height="11" viewBox="0 0 9 11"><path d="M1 1.5H8 M3 4.5H8 M3 7.5H8 M1 10H6" stroke="#232629" stroke-width="0.9"/></svg><div style="position:absolute;left:0px;top:76px;width:106px;height:0.8px;background:#d1d2d3;"></div><div style="position:absolute;left:35px;top:85px;font-family:'Liberation Sans',sans-serif;font-size:8.6px;line-height:1;color:#232629;white-space:nowrap;">Contents</div><div style="position:absolute;left:2px;top:101px;width:100px;height:15px;background:#fff;border:1px solid #d1d2d3;border-radius:2px;box-sizing:border-box"></div><div style="position:absolute;left:6px;top:105.5px;font-family:'Liberation Sans',sans-serif;font-size:6.5px;line-height:1;color:#888;white-space:nowrap;">Search...</div><div style="position:absolute;left:1.5px;top:118px;width:99.5px;height:196px;background:#fff;border:1px solid #d1d2d3;box-sizing:border-box"></div><div style="position:absolute;left:7px;top:122.0px;width:0.6px;height:10.3px;background:#d8d8d8;"></div><div style="position:absolute;left:7px;top:126.0px;width:5px;height:0.6px;background:#c8c8c8;"></div><div style="position:absolute;left:16.5px;top:122.5px;font-family:'Liberation Sans',sans-serif;font-size:7.6px;line-height:1;color:#1a1c1e;white-space:nowrap;-webkit-text-stroke:0.15px #1a1c1e">Vēsture</div><div style="position:absolute;left:67px;top:122.0px;width:21.5px;font-family:'Liberation Sans',sans-serif;font-size:7.6px;line-height:1;color:#1a1c1e;-webkit-text-stroke:0.05px #1a1c1e;text-align:right;">1</div><div style="position:absolute;left:14px;top:131.3px;width:77px;height:10.3px;background:#f5f5f5;"></div><div style="position:absolute;left:7px;top:132.3px;width:0.6px;height:10.3px;background:#d8d8d8;"></div><div style="position:absolute;left:7px;top:136.3px;width:5px;height:0.6px;background:#c8c8c8;"></div><div style="position:absolute;left:16.5px;top:132.8px;font-family:'Liberation Sans',sans-serif;font-size:7.6px;line-height:1;color:#1a1c1e;white-space:nowrap;-webkit-text-stroke:0.15px #1a1c1e">Fotoaparāti</div><div style="position:absolute;left:67px;top:132.3px;width:21.5px;font-family:'Liberation Sans',sans-serif;font-size:7.6px;line-height:1;color:#1a1c1e;-webkit-text-stroke:0.05px #1a1c1e;text-align:right;">2</div><div style="position:absolute;left:7px;top:142.6px;width:0.6px;height:10.3px;background:#d8d8d8;"></div><div style="position:absolute;left:7px;top:146.6px;width:5px;height:0.6px;background:#c8c8c8;"></div><div style="position:absolute;left:16.5px;top:143.1px;font-family:'Liberation Sans',sans-serif;font-size:7.6px;line-height:1;color:#1a1c1e;white-space:nowrap;-webkit-text-stroke:0.15px #1a1c1e">Zīmēšana ar gais...</div><div style="position:absolute;left:67px;top:142.6px;width:21.5px;font-family:'Liberation Sans',sans-serif;font-size:7.6px;line-height:1;color:#1a1c1e;-webkit-text-stroke:0.05px #1a1c1e;text-align:right;">3</div><div style="position:absolute;left:14px;top:151.9px;width:77px;height:10.3px;background:#f5f5f5;"></div><div style="position:absolute;left:7px;top:152.9px;width:0.6px;height:10.3px;background:#d8d8d8;"></div><div style="position:absolute;left:7px;top:156.9px;width:5px;height:0.6px;background:#c8c8c8;"></div><div style="position:absolute;left:16.5px;top:153.4px;font-family:'Liberation Sans',sans-serif;font-size:7.6px;line-height:1;color:#1a1c1e;white-space:nowrap;-webkit-text-stroke:0.15px #1a1c1e">Raksturlielumi</div><div style="position:absolute;left:67px;top:152.9px;width:21.5px;font-family:'Liberation Sans',sans-serif;font-size:7.6px;line-height:1;color:#1a1c1e;-webkit-text-stroke:0.05px #1a1c1e;text-align:right;">4</div><div style="position:absolute;left:7px;top:163.2px;width:0.6px;height:10.3px;background:#d8d8d8;"></div><div style="position:absolute;left:7px;top:167.2px;width:5px;height:0.6px;background:#c8c8c8;"></div><div style="position:absolute;left:16.5px;top:163.7px;font-family:'Liberation Sans',sans-serif;font-size:7.6px;line-height:1;color:#1a1c1e;white-space:nowrap;-webkit-text-stroke:0.15px #1a1c1e">Izšķirtspēja</div><div style="position:absolute;left:67px;top:163.2px;width:21.5px;font-family:'Liberation Sans',sans-serif;font-size:7.6px;line-height:1;color:#1a1c1e;-webkit-text-stroke:0.05px #1a1c1e;text-align:right;">5</div><div style="position:absolute;left:14px;top:172.5px;width:77px;height:10.3px;background:#f5f5f5;"></div><div style="position:absolute;left:7px;top:173.5px;width:0.6px;height:10.3px;background:#d8d8d8;"></div><div style="position:absolute;left:7px;top:177.5px;width:5px;height:0.6px;background:#c8c8c8;"></div><div style="position:absolute;left:16.5px;top:174.0px;font-family:'Liberation Sans',sans-serif;font-size:7.6px;line-height:1;color:#1a1c1e;white-space:nowrap;-webkit-text-stroke:0.15px #1a1c1e">Pikseļi</div><div style="position:absolute;left:67px;top:173.5px;width:21.5px;font-family:'Liberation Sans',sans-serif;font-size:7.6px;line-height:1;color:#1a1c1e;-webkit-text-stroke:0.05px #1a1c1e;text-align:right;">6</div><div style="position:absolute;left:7px;top:183.8px;width:0.6px;height:10.3px;background:#d8d8d8;"></div><div style="position:absolute;left:7px;top:187.8px;width:5px;height:0.6px;background:#c8c8c8;"></div><div style="position:absolute;left:16.5px;top:184.3px;font-family:'Liberation Sans',sans-serif;font-size:7.6px;line-height:1;color:#1a1c1e;white-space:nowrap;-webkit-text-stroke:0.15px #1a1c1e">Apertūra</div><div style="position:absolute;left:67px;top:183.8px;width:21.5px;font-family:'Liberation Sans',sans-serif;font-size:7.6px;line-height:1;color:#1a1c1e;-webkit-text-stroke:0.05px #1a1c1e;text-align:right;">7</div><div style="position:absolute;left:14px;top:193.10000000000002px;width:77px;height:10.3px;background:#f5f5f5;"></div><div style="position:absolute;left:7px;top:194.10000000000002px;width:0.6px;height:10.3px;background:#d8d8d8;"></div><div style="position:absolute;left:7px;top:198.10000000000002px;width:5px;height:0.6px;background:#c8c8c8;"></div><div style="position:absolute;left:16.5px;top:194.60000000000002px;font-family:'Liberation Sans',sans-serif;font-size:7.6px;line-height:1;color:#1a1c1e;white-space:nowrap;-webkit-text-stroke:0.15px #1a1c1e">Sensoru izšķirtsp...</div><div style="position:absolute;left:67px;top:194.10000000000002px;width:21.5px;font-family:'Liberation Sans',sans-serif;font-size:7.6px;line-height:1;color:#1a1c1e;-webkit-text-stroke:0.05px #1a1c1e;text-align:right;">8</div><div style="position:absolute;left:7px;top:204.4px;width:0.6px;height:10.3px;background:#d8d8d8;"></div><div style="position:absolute;left:7px;top:208.4px;width:5px;height:0.6px;background:#c8c8c8;"></div><div style="position:absolute;left:16.5px;top:204.9px;font-family:'Liberation Sans',sans-serif;font-size:7.6px;line-height:1;color:#1a1c1e;white-space:nowrap;-webkit-text-stroke:0.15px #1a1c1e">Jutība</div><div style="position:absolute;left:67px;top:204.4px;width:21.5px;font-family:'Liberation Sans',sans-serif;font-size:7.6px;line-height:1;color:#1a1c1e;-webkit-text-stroke:0.05px #1a1c1e;text-align:right;">9</div><div style="position:absolute;left:14px;top:213.7px;width:77px;height:10.3px;background:#f5f5f5;"></div><div style="position:absolute;left:7px;top:214.7px;width:0.6px;height:10.3px;background:#d8d8d8;"></div><div style="position:absolute;left:7px;top:218.7px;width:5px;height:0.6px;background:#c8c8c8;"></div><div style="position:absolute;left:16.5px;top:215.2px;font-family:'Liberation Sans',sans-serif;font-size:7.6px;line-height:1;color:#1a1c1e;white-space:nowrap;-webkit-text-stroke:0.15px #1a1c1e">Jutība un trokšņi</div><div style="position:absolute;left:67px;top:214.7px;width:21.5px;font-family:'Liberation Sans',sans-serif;font-size:7.6px;line-height:1;color:#1a1c1e;-webkit-text-stroke:0.05px #1a1c1e;text-align:right;">10</div><div style="position:absolute;left:7px;top:225.0px;width:0.6px;height:10.3px;background:#d8d8d8;"></div><div style="position:absolute;left:7px;top:229.0px;width:5px;height:0.6px;background:#c8c8c8;"></div><div style="position:absolute;left:16.5px;top:225.5px;font-family:'Liberation Sans',sans-serif;font-size:7.6px;line-height:1;color:#1a1c1e;white-space:nowrap;-webkit-text-stroke:0.15px #1a1c1e">Jutība un trokš...</div><div style="position:absolute;left:67px;top:225.0px;width:21.5px;font-family:'Liberation Sans',sans-serif;font-size:7.6px;line-height:1;color:#1a1c1e;-webkit-text-stroke:0.05px #1a1c1e;text-align:right;">11</div><div style="position:absolute;left:14px;top:234.3px;width:77px;height:10.3px;background:#f5f5f5;"></div><div style="position:absolute;left:7px;top:235.3px;width:0.6px;height:10.3px;background:#d8d8d8;"></div><div style="position:absolute;left:7px;top:239.3px;width:5px;height:0.6px;background:#c8c8c8;"></div><div style="position:absolute;left:16.5px;top:235.8px;font-family:'Liberation Sans',sans-serif;font-size:7.6px;line-height:1;color:#1a1c1e;white-space:nowrap;-webkit-text-stroke:0.15px #1a1c1e">Jutība un trokš...</div><div style="position:absolute;left:67px;top:235.3px;width:21.5px;font-family:'Liberation Sans',sans-serif;font-size:7.6px;line-height:1;color:#1a1c1e;-webkit-text-stroke:0.05px #1a1c1e;text-align:right;">12</div><div style="position:absolute;left:7px;top:245.60000000000002px;width:0.6px;height:10.3px;background:#d8d8d8;"></div><div style="position:absolute;left:7px;top:249.60000000000002px;width:5px;height:0.6px;background:#c8c8c8;"></div><div style="position:absolute;left:16.5px;top:246.10000000000002px;font-family:'Liberation Sans',sans-serif;font-size:7.6px;line-height:1;color:#1a1c1e;white-space:nowrap;-webkit-text-stroke:0.15px #1a1c1e">Jutība un trokš...</div><div style="position:absolute;left:67px;top:245.60000000000002px;width:21.5px;font-family:'Liberation Sans',sans-serif;font-size:7.6px;line-height:1;color:#1a1c1e;-webkit-text-stroke:0.05px #1a1c1e;text-align:right;">13</div><div style="position:absolute;left:14px;top:254.89999999999998px;width:77px;height:10.3px;background:#f5f5f5;"></div><div style="position:absolute;left:7px;top:255.89999999999998px;width:0.6px;height:10.3px;background:#d8d8d8;"></div><div style="position:absolute;left:7px;top:259.9px;width:5px;height:0.6px;background:#c8c8c8;"></div><div style="position:absolute;left:16.5px;top:256.4px;font-family:'Liberation Sans',sans-serif;font-size:7.6px;line-height:1;color:#1a1c1e;white-space:nowrap;-webkit-text-stroke:0.15px #1a1c1e">Fokusa attālu...</div><div style="position:absolute;left:67px;top:255.89999999999998px;width:21.5px;font-family:'Liberation Sans',sans-serif;font-size:7.6px;line-height:1;color:#1a1c1e;-webkit-text-stroke:0.05px #1a1c1e;text-align:right;">14</div><div style="position:absolute;left:7px;top:266.20000000000005px;width:0.6px;height:10.3px;background:#d8d8d8;"></div><div style="position:absolute;left:7px;top:270.20000000000005px;width:5px;height:0.6px;background:#c8c8c8;"></div><div style="position:absolute;left:16.5px;top:266.70000000000005px;font-family:'Liberation Sans',sans-serif;font-size:7.6px;line-height:1;color:#1a1c1e;white-space:nowrap;-webkit-text-stroke:0.15px #1a1c1e">Redzes leņķis</div><div style="position:absolute;left:67px;top:266.20000000000005px;width:21.5px;font-family:'Liberation Sans',sans-serif;font-size:7.6px;line-height:1;color:#1a1c1e;-webkit-text-stroke:0.05px #1a1c1e;text-align:right;">15</div><div style="position:absolute;left:14px;top:275.5px;width:77px;height:10.3px;background:#f5f5f5;"></div><div style="position:absolute;left:7px;top:276.5px;width:0.6px;height:10.3px;background:#d8d8d8;"></div><div style="position:absolute;left:7px;top:280.5px;width:5px;height:0.6px;background:#c8c8c8;"></div><div style="position:absolute;left:16.5px;top:277.0px;font-family:'Liberation Sans',sans-serif;font-size:7.6px;line-height:1;color:#1a1c1e;white-space:nowrap;-webkit-text-stroke:0.15px #1a1c1e">Optiskā tālum...</div><div style="position:absolute;left:67px;top:276.5px;width:21.5px;font-family:'Liberation Sans',sans-serif;font-size:7.6px;line-height:1;color:#1a1c1e;-webkit-text-stroke:0.05px #1a1c1e;text-align:right;">16</div><div style="position:absolute;left:7px;top:286.8px;width:0.6px;height:10.3px;background:#d8d8d8;"></div><div style="position:absolute;left:7px;top:290.8px;width:5px;height:0.6px;background:#c8c8c8;"></div><div style="position:absolute;left:16.5px;top:287.3px;font-family:'Liberation Sans',sans-serif;font-size:7.6px;line-height:1;color:#1a1c1e;white-space:nowrap;font-weight:bold;-webkit-text-stroke:0.15px #1a1c1e">Fokusa attālu...</div><div style="position:absolute;left:67px;top:286.8px;width:21.5px;font-family:'Liberation Sans',sans-serif;font-size:7.6px;line-height:1;color:#1a1c1e;-webkit-text-stroke:0.05px #1a1c1e;text-align:right;font-weight:bold;">17</div><div style="position:absolute;left:14px;top:296.1px;width:77px;height:10.3px;background:#f5f5f5;"></div><div style="position:absolute;left:7px;top:297.1px;width:0.6px;height:10.3px;background:#d8d8d8;"></div><div style="position:absolute;left:7px;top:301.1px;width:5px;height:0.6px;background:#c8c8c8;"></div><div style="position:absolute;left:16.5px;top:297.6px;font-family:'Liberation Sans',sans-serif;font-size:7.6px;line-height:1;color:#1a1c1e;white-space:nowrap;-webkit-text-stroke:0.15px #1a1c1e">Skrejruņi un pl...</div><div style="position:absolute;left:67px;top:297.1px;width:21.5px;font-family:'Liberation Sans',sans-serif;font-size:7.6px;line-height:1;color:#1a1c1e;-webkit-text-stroke:0.05px #1a1c1e;text-align:right;">18</div><div style="position:absolute;left:7px;top:307.4px;width:0.6px;height:10.3px;background:#d8d8d8;"></div><div style="position:absolute;left:7px;top:311.4px;width:5px;height:0.6px;background:#c8c8c8;"></div><div style="position:absolute;left:16.5px;top:307.9px;font-family:'Liberation Sans',sans-serif;font-size:7.6px;line-height:1;color:#1a1c1e;white-space:nowrap;-webkit-text-stroke:0.15px #1a1c1e">DigiObjektīvi</div><div style="position:absolute;left:67px;top:307.4px;width:21.5px;font-family:'Liberation Sans',sans-serif;font-size:7.6px;line-height:1;color:#1a1c1e;-webkit-text-stroke:0.05px #1a1c1e;text-align:right;">19</div><div style="position:absolute;left:101px;top:76px;width:5px;height:241px;background:#fcfcfc;"></div><div style="position:absolute;left:90.5px;top:119px;width:0.6px;height:194px;background:#e4e4e4;"></div><div style="position:absolute;left:80px;top:58px;width:26px;height:18px;background:#dbe8f4;"></div><svg style="position:absolute;left:85px;top:61px;" width="9" height="11" viewBox="0 0 9 11"><path d="M1 1.5H8 M3 4.5H8 M3 7.5H8 M1 10H6" stroke="#232629" stroke-width="0.9"/></svg><div style="position:absolute;left:106px;top:58px;width:295px;height:259px;background:#8a9099;"></div><div style="position:absolute;left:389.6px;top:58px;width:11.399999999999977px;height:259px;background:#fcfcfc;"></div><div style="position:absolute;left:106px;top:61.3px;width:284px;height:178px;background:#000"></div><div style="position:absolute;left:107px;top:62.3px;"><div style="position:absolute;left:0px;top:0px;width:282px;height:176px;background:#fff;overflow:hidden"><div style="position:absolute;left:3px;top:0.8px;font-family:'Liberation Serif',serif;font-size:3.4px;line-height:1;color:#111;white-space:nowrap;">Fotografēšanas pamati</div><div style="position:absolute;left:262px;top:0.8px;font-family:'Liberation Serif',serif;font-size:3.4px;line-height:1;color:#111;white-space:nowrap;">25.06.2021</div><div style="position:absolute;left:4px;top:11.4px;width:201px;height:150px;background:#dcdcdc;"></div><div style="position:absolute;left:35.5px;top:18px;font-family:'Liberation Sans',sans-serif;font-size:10.8px;line-height:1;color:#222;white-space:nowrap;font-weight:bold;transform-origin:0 0;transform:scaleX(0.955);text-shadow:0.6px 0.6px 0 #fff;-webkit-text-stroke:0.3px #222">Fokusa attālums un redzes leņķis</div><svg style="position:absolute;left:0;top:0" width="100" height="176" viewBox="0 0 100 176"><path d="M44 55 L57.4 49.5 M45 72 L57.4 68 M42 78 L57.4 87.5 M44 101 L57.4 91.5 M45 118 L57.4 113 M42 124 L57.4 130" stroke="#8aa" stroke-width="0.5" fill="none"/></svg><div style="position:absolute;left:13px;top:45.5px;font-family:'Liberation Sans',sans-serif;font-size:3px;line-height:1;color:#333;white-space:nowrap;">(1) 35 mm</div><div style="position:absolute;left:14.8px;top:46.5px;width:36.4px;height:36.4px;border-radius:50%;background:#fff;"></div><div style="position:absolute;left:15.8px;top:47.5px;width:34.4px;height:34.4px;border-radius:50%;background:#3d4246;overflow:hidden"><div style="position:absolute;left:4.816px;top:8.6px;width:24.767999999999997px;height:16.34px;background:#f4f4f4;border:1px solid #c33;box-sizing:border-box;overflow:hidden"><div style="position:absolute;left:1.5px;top:1.5px;width:21.767999999999997px;height:13.34px;background:#bfe0f0;overflow:hidden"><svg width="21.767999999999997" height="13.34" viewBox="0 0 21.767999999999997 13.34" style="position:absolute;left:0;top:0"><circle cx="9.123119999999998" cy="5.336" r="1.6141400000000001" fill="#f39a1e"/><circle cx="12.644879999999999" cy="5.336" r="1.6141400000000001" fill="#f39a1e"/><circle cx="10.883999999999999" cy="3.57512" r="1.6141400000000001" fill="#f5a623"/><circle cx="10.883999999999999" cy="7.0968800000000005" r="1.6141400000000001" fill="#e8801a"/><circle cx="10.883999999999999" cy="5.336" r="1.02718" fill="#c0392b"/><rect x="10.230959999999998" y="7.337000000000001" width="1.3060799999999997" height="4.002" fill="#2e8b3e"/><ellipse cx="13.060799999999999" cy="9.6048" rx="2.1767999999999996" ry="0.8004" fill="#3aa04a"/></svg></div></div><div style="position:absolute;left:14.62px;top:24.939999999999998px;width:5.159999999999999px;height:3.44px;background:#111"></div></div><div style="position:absolute;left:17.5px;top:86px;font-family:'Liberation Sans',sans-serif;font-size:2.6px;line-height:1;color:#333;white-space:nowrap;">(-1,6 × 100 × 0 × 100 mm)</div><div style="position:absolute;left:14.8px;top:92.6px;width:36.4px;height:36.4px;border-radius:50%;background:#fff;"></div><div style="position:absolute;left:15.8px;top:93.6px;width:34.4px;height:34.4px;border-radius:50%;background:#3d4246;overflow:hidden"><div style="position:absolute;left:4.816px;top:8.6px;width:24.767999999999997px;height:16.34px;background:#f4f4f4;border:1px solid #c33;box-sizing:border-box;overflow:hidden"><div style="position:absolute;left:1.5px;top:1.5px;width:21.767999999999997px;height:13.34px;background:#bfe0f0;overflow:hidden"><svg width="21.767999999999997" height="13.34" viewBox="0 0 21.767999999999997 13.34" style="position:absolute;left:0;top:0"><circle cx="5.249759999999999" cy="4.669" r="1.17392" fill="#f39a1e"/><circle cx="7.811039999999999" cy="4.669" r="1.17392" fill="#f39a1e"/><circle cx="6.530399999999999" cy="3.3883599999999996" r="1.17392" fill="#f5a623"/><circle cx="6.530399999999999" cy="5.94964" r="1.17392" fill="#e8801a"/><circle cx="6.530399999999999" cy="4.669" r="0.7470399999999999" fill="#c0392b"/><circle cx="12.868559999999999" cy="4.002" r="1.17392" fill="#f39a1e"/><circle cx="15.429839999999999" cy="4.002" r="1.17392" fill="#f39a1e"/><circle cx="14.149199999999999" cy="2.72136" r="1.17392" fill="#f5a623"/><circle cx="14.149199999999999" cy="5.28264" r="1.17392" fill="#e8801a"/><circle cx="14.149199999999999" cy="4.002" r="0.7470399999999999" fill="#c0392b"/><circle cx="9.603359999999999" cy="8.004" r="1.17392" fill="#f39a1e"/><circle cx="12.164639999999999" cy="8.004" r="1.17392" fill="#f39a1e"/><circle cx="10.883999999999999" cy="6.72336" r="1.17392" fill="#f5a623"/><circle cx="10.883999999999999" cy="9.28464" r="1.17392" fill="#e8801a"/><circle cx="10.883999999999999" cy="8.004" r="0.7470399999999999" fill="#c0392b"/><circle cx="3.0729599999999992" cy="9.338" r="1.17392" fill="#f39a1e"/><circle cx="5.634239999999999" cy="9.338" r="1.17392" fill="#f39a1e"/><circle cx="4.353599999999999" cy="8.05736" r="1.17392" fill="#f5a623"/><circle cx="4.353599999999999" cy="10.61864" r="1.17392" fill="#e8801a"/><circle cx="4.353599999999999" cy="9.338" r="0.7470399999999999" fill="#c0392b"/><circle cx="16.13376" cy="8.671" r="1.17392" fill="#f39a1e"/><circle cx="18.695039999999995" cy="8.671" r="1.17392" fill="#f39a1e"/><circle cx="17.414399999999997" cy="7.390359999999999" r="1.17392" fill="#f5a623"/><circle cx="17.414399999999997" cy="9.95164" r="1.17392" fill="#e8801a"/><circle cx="17.414399999999997" cy="8.671" r="0.7470399999999999" fill="#c0392b"/></svg></div></div><div style="position:absolute;left:10.319999999999999px;top:24.939999999999998px;width:15.48px;height:8.6px;background:#111;border-radius:2px"></div></div><div style="position:absolute;left:12px;top:91.5px;font-family:'Liberation Sans',sans-serif;font-size:3px;line-height:1;color:#333;white-space:nowrap;">(2) 7 %</div><div style="position:absolute;left:57.4px;top:49.1px;width:24.4px;height:19.1px;background:#d4eaf4;border:0.8px solid #c66;box-sizing:border-box;overflow:hidden"><svg width="24.4" height="19.1" viewBox="0 0 24.4 19.1" style="position:absolute;left:0;top:0"><circle cx="9.678799999999999" cy="7.640000000000001" r="2.3111" fill="#f39a1e"/><circle cx="14.7212" cy="7.640000000000001" r="2.3111" fill="#f39a1e"/><circle cx="12.2" cy="5.1188" r="2.3111" fill="#f5a623"/><circle cx="12.2" cy="10.161200000000001" r="2.3111" fill="#e8801a"/><circle cx="12.2" cy="7.640000000000001" r="1.4707" fill="#c0392b"/><rect x="11.467999999999998" y="10.505" width="1.464" height="5.73" fill="#2e8b3e"/><ellipse cx="14.639999999999999" cy="13.752" rx="2.44" ry="1.1460000000000001" fill="#3aa04a"/></svg><div style="position:absolute;left:3.6599999999999997px;top:15.900000000000002px;width:17.08px;height:1.8px;background:#d23;"></div></div><div style="position:absolute;left:57.4px;top:71.9px;width:14.4px;height:15.6px;background:#d4eaf4;border:0.8px solid #36c;box-sizing:border-box;overflow:hidden"><svg width="14.4" height="15.6" viewBox="0 0 14.4 15.6" style="position:absolute;left:0;top:0"><circle cx="5.2992" cy="6.24" r="1.7424000000000002" fill="#f39a1e"/><circle cx="9.1008" cy="6.24" r="1.7424000000000002" fill="#f39a1e"/><circle cx="7.2" cy="4.3392" r="1.7424000000000002" fill="#f5a623"/><circle cx="7.2" cy="8.1408" r="1.7424000000000002" fill="#e8801a"/><circle cx="7.2" cy="6.24" r="1.1088" fill="#c0392b"/><rect x="6.768" y="8.58" width="0.864" height="4.68" fill="#2e8b3e"/><ellipse cx="8.64" cy="11.232" rx="1.4400000000000002" ry="0.9359999999999999" fill="#3aa04a"/></svg><div style="position:absolute;left:2.16px;top:12.399999999999999px;width:10.08px;height:1.8px;background:#d23;"></div></div><div style="position:absolute;left:57.4px;top:90.9px;width:24.4px;height:22.1px;background:#d4eaf4;border:0.8px solid #c66;box-sizing:border-box;overflow:hidden"><svg width="24.4" height="22.1" viewBox="0 0 24.4 22.1" style="position:absolute;left:0;top:0"><circle cx="5.1983999999999995" cy="7.735" r="1.9448000000000005" fill="#f39a1e"/><circle cx="9.4416" cy="7.735" r="1.9448000000000005" fill="#f39a1e"/><circle cx="7.319999999999999" cy="5.6134" r="1.9448000000000005" fill="#f5a623"/><circle cx="7.319999999999999" cy="9.8566" r="1.9448000000000005" fill="#e8801a"/><circle cx="7.319999999999999" cy="7.735" r="1.2376" fill="#c0392b"/><circle cx="13.738399999999999" cy="6.63" r="1.9448000000000005" fill="#f39a1e"/><circle cx="17.9816" cy="6.63" r="1.9448000000000005" fill="#f39a1e"/><circle cx="15.86" cy="4.5084" r="1.9448000000000005" fill="#f5a623"/><circle cx="15.86" cy="8.7516" r="1.9448000000000005" fill="#e8801a"/><circle cx="15.86" cy="6.63" r="1.2376" fill="#c0392b"/><circle cx="10.078399999999998" cy="13.26" r="1.9448000000000005" fill="#f39a1e"/><circle cx="14.3216" cy="13.26" r="1.9448000000000005" fill="#f39a1e"/><circle cx="12.2" cy="11.138399999999999" r="1.9448000000000005" fill="#f5a623"/><circle cx="12.2" cy="15.3816" r="1.9448000000000005" fill="#e8801a"/><circle cx="12.2" cy="13.26" r="1.2376" fill="#c0392b"/><circle cx="2.7583999999999995" cy="15.47" r="1.9448000000000005" fill="#f39a1e"/><circle cx="7.0016" cy="15.47" r="1.9448000000000005" fill="#f39a1e"/><circle cx="4.88" cy="13.3484" r="1.9448000000000005" fill="#f5a623"/><circle cx="4.88" cy="17.5916" r="1.9448000000000005" fill="#e8801a"/><circle cx="4.88" cy="15.47" r="1.2376" fill="#c0392b"/><circle cx="17.3984" cy="14.365000000000002" r="1.9448000000000005" fill="#f39a1e"/><circle cx="21.6416" cy="14.365000000000002" r="1.9448000000000005" fill="#f39a1e"/><circle cx="19.52" cy="12.243400000000001" r="1.9448000000000005" fill="#f5a623"/><circle cx="19.52" cy="16.486600000000003" r="1.9448000000000005" fill="#e8801a"/><circle cx="19.52" cy="14.365000000000002" r="1.2376" fill="#c0392b"/></svg><div style="position:absolute;left:3.6599999999999997px;top:18.900000000000002px;width:17.08px;height:1.8px;background:#d23;"></div></div><div style="position:absolute;left:57.4px;top:115.2px;width:14.4px;height:15.5px;background:#d4eaf4;border:0.8px solid #36c;box-sizing:border-box;overflow:hidden"><svg width="14.4" height="15.5" viewBox="0 0 14.4 15.5" style="position:absolute;left:0;top:0"><circle cx="2.9376" cy="5.425" r="1.2672000000000003" fill="#f39a1e"/><circle cx="5.702400000000001" cy="5.425" r="1.2672000000000003" fill="#f39a1e"/><circle cx="4.32" cy="4.0426" r="1.2672000000000003" fill="#f5a623"/><circle cx="4.32" cy="6.8073999999999995" r="1.2672000000000003" fill="#e8801a"/><circle cx="4.32" cy="5.425" r="0.8064" fill="#c0392b"/><circle cx="7.977600000000001" cy="4.6499999999999995" r="1.2672000000000003" fill="#f39a1e"/><circle cx="10.742400000000002" cy="4.6499999999999995" r="1.2672000000000003" fill="#f39a1e"/><circle cx="9.360000000000001" cy="3.2675999999999994" r="1.2672000000000003" fill="#f5a623"/><circle cx="9.360000000000001" cy="6.032399999999999" r="1.2672000000000003" fill="#e8801a"/><circle cx="9.360000000000001" cy="4.6499999999999995" r="0.8064" fill="#c0392b"/><circle cx="5.8176000000000005" cy="9.299999999999999" r="1.2672000000000003" fill="#f39a1e"/><circle cx="8.5824" cy="9.299999999999999" r="1.2672000000000003" fill="#f39a1e"/><circle cx="7.2" cy="7.917599999999998" r="1.2672000000000003" fill="#f5a623"/><circle cx="7.2" cy="10.6824" r="1.2672000000000003" fill="#e8801a"/><circle cx="7.2" cy="9.299999999999999" r="0.8064" fill="#c0392b"/><circle cx="1.4976000000000003" cy="10.85" r="1.2672000000000003" fill="#f39a1e"/><circle cx="4.2624" cy="10.85" r="1.2672000000000003" fill="#f39a1e"/><circle cx="2.8800000000000003" cy="9.4676" r="1.2672000000000003" fill="#f5a623"/><circle cx="2.8800000000000003" cy="12.2324" r="1.2672000000000003" fill="#e8801a"/><circle cx="2.8800000000000003" cy="10.85" r="0.8064" fill="#c0392b"/><circle cx="10.1376" cy="10.075000000000001" r="1.2672000000000003" fill="#f39a1e"/><circle cx="12.902400000000002" cy="10.075000000000001" r="1.2672000000000003" fill="#f39a1e"/><circle cx="11.520000000000001" cy="8.6926" r="1.2672000000000003" fill="#f5a623"/><circle cx="11.520000000000001" cy="11.457400000000002" r="1.2672000000000003" fill="#e8801a"/><circle cx="11.520000000000001" cy="10.075000000000001" r="0.8064" fill="#c0392b"/></svg><div style="position:absolute;left:2.16px;top:12.3px;width:10.08px;height:1.8px;background:#d23;"></div></div><div style="position:absolute;left:107px;top:47.0px;font-family:'Liberation Serif',serif;font-size:6.6px;line-height:1;color:#000;white-space:nowrap;-webkit-text-stroke:0.1px #000">Parastajām 35 mm fotokamerām</div><div style="position:absolute;left:107px;top:54.5px;font-family:'Liberation Serif',serif;font-size:6.6px;line-height:1;color:#000;white-space:nowrap;-webkit-text-stroke:0.1px #000">platleņķa objektīvi ir &lt; 40 mm, bet</div><div style="position:absolute;left:107px;top:62.0px;font-family:'Liberation Serif',serif;font-size:6.6px;line-height:1;color:#000;white-space:nowrap;-webkit-text-stroke:0.1px #000">teleobjektīvi &gt; 70 mm.</div><div style="position:absolute;left:107px;top:72.0px;font-family:'Liberation Serif',serif;font-size:6.6px;line-height:1;color:#000;white-space:nowrap;-webkit-text-stroke:0.1px #000">Digitālām fotokamerām var</div><div style="position:absolute;left:107px;top:79.5px;font-family:'Liberation Serif',serif;font-size:6.6px;line-height:1;color:#000;white-space:nowrap;-webkit-text-stroke:0.1px #000">atšķirties matricas izmēri (attēla</div><div style="position:absolute;left:107px;top:87.0px;font-family:'Liberation Serif',serif;font-size:6.6px;line-height:1;color:#000;white-space:nowrap;-webkit-text-stroke:0.1px #000">reģistrējošais laukums).</div><div style="position:absolute;left:101.2px;top:49.3px;width:2.6px;height:2.6px;background:#111;border-radius:50%"></div><div style="position:absolute;left:101.2px;top:74.2px;width:2.6px;height:2.6px;background:#111;border-radius:50%"></div><div style="position:absolute;left:207.5px;top:13.0px;font-family:'Liberation Sans',sans-serif;font-size:4.8px;line-height:1;color:#222;white-space:nowrap;">&nbsp;&nbsp;&nbsp;Pilna matrica atbilst 35 mm</div><div style="position:absolute;left:207.5px;top:18.2px;font-family:'Liberation Sans',sans-serif;font-size:4.8px;line-height:1;color:#222;white-space:nowrap;">fotofilmiņas pilnam kadram (24 ×</div><div style="position:absolute;left:207.5px;top:23.4px;font-family:'Liberation Sans',sans-serif;font-size:4.8px;line-height:1;color:#222;white-space:nowrap;">36 mm). Turpretī, runājot par</div><div style="position:absolute;left:207.5px;top:28.6px;font-family:'Liberation Sans',sans-serif;font-size:4.8px;line-height:1;color:#222;white-space:nowrap;">fokusa attālumu, ekvivalentais</div><div style="position:absolute;left:207.5px;top:33.8px;font-family:'Liberation Sans',sans-serif;font-size:4.8px;line-height:1;color:#222;white-space:nowrap;">fokusa attālums 35 mm</div><div style="position:absolute;left:207.5px;top:39.0px;font-family:'Liberation Sans',sans-serif;font-size:4.8px;line-height:1;color:#222;white-space:nowrap;">fotokameras objektīvam.</div><div style="position:absolute;left:207.5px;top:46.0px;font-family:'Liberation Sans',sans-serif;font-size:4.8px;line-height:1;color:#222;white-space:nowrap;">&nbsp;&nbsp;&nbsp;Augstas kvalitātes matricu</div><div style="position:absolute;left:207.5px;top:51.2px;font-family:'Liberation Sans',sans-serif;font-size:4.8px;line-height:1;color:#222;white-space:nowrap;">fotoaparātiem (piemēram, Nikon</div><div style="position:absolute;left:207.5px;top:56.4px;font-family:'Liberation Sans',sans-serif;font-size:4.8px;line-height:1;color:#222;white-space:nowrap;">D3x), tipiski sensora izmēri ir no</div><div style="position:absolute;left:207.5px;top:61.6px;font-family:'Liberation Sans',sans-serif;font-size:4.8px;line-height:1;color:#222;white-space:nowrap;">4 × 5, 4 × 7 un 8 × 8 cm. Tās</div><div style="position:absolute;left:207.5px;top:66.8px;font-family:'Liberation Sans',sans-serif;font-size:4.8px;line-height:1;color:#222;white-space:nowrap;">tajā ir fotomatricas digitālās</div><div style="position:absolute;left:207.5px;top:72.0px;font-family:'Liberation Sans',sans-serif;font-size:4.8px;line-height:1;color:#222;white-space:nowrap;">kameras, piemēram, pie</div><div style="position:absolute;left:207.5px;top:77.2px;font-family:'Liberation Sans',sans-serif;font-size:4.8px;line-height:1;color:#222;white-space:nowrap;">23%, ņemot matricas izmēru</div><div style="position:absolute;left:207.5px;top:82.4px;font-family:'Liberation Sans',sans-serif;font-size:4.8px;line-height:1;color:#222;white-space:nowrap;">"Nikon 1 DX" kameras ar</div><div style="position:absolute;left:207.5px;top:87.6px;font-family:'Liberation Sans',sans-serif;font-size:4.8px;line-height:1;color:#222;white-space:nowrap;">fokusa attālumu 32,8 × 23,9 mm</div><div style="position:absolute;left:207.5px;top:92.80000000000001px;font-family:'Liberation Sans',sans-serif;font-size:4.8px;line-height:1;color:#222;white-space:nowrap;">sensoru.</div><div style="position:absolute;left:5px;top:156.3px;width:6.5px;height:5.5px;border:0.9px solid #222;border-radius:50%;box-sizing:border-box;background:#fff"></div><div style="position:absolute;left:6.3px;top:157.6px;font-family:'Liberation Sans',sans-serif;font-size:2.6px;line-height:1;color:#222;white-space:nowrap;font-weight:bold">cc</div><div style="position:absolute;left:12.5px;top:157.2px;font-family:'Liberation Sans',sans-serif;font-size:3px;line-height:1;color:#333;white-space:nowrap;font-weight:bold">BY SA</div><div style="position:absolute;left:116px;top:158.6px;width:88px;height:1.6px;background:#888;"></div><div style="position:absolute;left:3px;top:172.3px;font-family:'Liberation Serif',serif;font-size:3.4px;line-height:1;color:#111;white-space:nowrap;">27 (27) · Tekā: Kārlis Kalviškis</div></div></div><div style="position:absolute;left:106px;top:244.3px;width:284px;height:178px;background:#000"></div><div style="position:absolute;left:107px;top:245.3px;"><div style="position:absolute;left:0px;top:0px;width:282px;height:176px;background:#fff;overflow:hidden"><div style="position:absolute;left:3px;top:0.8px;font-family:'Liberation Serif',serif;font-size:3.4px;line-height:1;color:#111;white-space:nowrap;">Fotografēšanas pamati</div><div style="position:absolute;left:262px;top:0.8px;font-family:'Liberation Serif',serif;font-size:3.4px;line-height:1;color:#111;white-space:nowrap;">25.06.2021</div><div style="position:absolute;left:4px;top:11.2px;width:201px;height:150px;background:#dcdcdc;"></div><div style="position:absolute;left:35.5px;top:18px;font-family:'Liberation Sans',sans-serif;font-size:10.8px;line-height:1;color:#222;white-space:nowrap;font-weight:bold;transform-origin:0 0;transform:scaleX(0.955);text-shadow:0.6px 0.6px 0 #fff;-webkit-text-stroke:0.3px #222">Fokusa attālums un redzes leņķis</div><div style="position:absolute;left:18.2px;top:49.7px;width:2.6px;height:2.6px;background:#111;border-radius:50%"></div><div style="position:absolute;left:25px;top:46.5px;font-family:'Liberation Serif',serif;font-size:6.6px;line-height:1;color:#000;white-space:nowrap;-webkit-text-stroke:0.05px #000">Ja attēla reģistrējošais laukums mazāks, objektīvs „kļūst” garāks</div><div style="position:absolute;left:25px;top:54.0px;font-family:'Liberation Serif',serif;font-size:6.6px;line-height:1;color:#000;white-space:nowrap;-webkit-text-stroke:0.05px #000">un otrādi. Piemēram, „iPhone 6” lielākais sensors ir</div><div style="position:absolute;left:25px;top:61.5px;font-family:'Liberation Serif',serif;font-size:6.6px;line-height:1;color:#000;white-space:nowrap;-webkit-text-stroke:0.05px #000">4,89 × 3,67 mm. Šādam izmēram 4,7 mm objektīvs atbilst 35 mm</div><div style="position:absolute;left:25px;top:69.0px;font-family:'Liberation Serif',serif;font-size:6.6px;line-height:1;color:#000;white-space:nowrap;-webkit-text-stroke:0.05px #000">filmu kameras 29 mm objektīvam.</div><svg style="position:absolute;left:212px;top:10px;width:72px;height:40px;" width="72" height="40" viewBox="0 0 72 40"><path d="M2.5 25.4 L52.6 25.4 L52.6 3 Z" fill="none" stroke="#111" stroke-width="0.9"/><rect x="46" y="17.5" width="6.6" height="7.9" fill="none" stroke="#111" stroke-width="0.8"/><path d="M33.5 25.4 A24 24 0 0 0 31.8 15.5" fill="none" stroke="#111" stroke-width="0.7"/><text x="24.5" y="24.3" font-size="9" font-family="Liberation Sans" fill="#111">α</text><text x="56" y="15.5" font-size="6.5" font-family="Liberation Sans" font-weight="bold" fill="#111">a</text><text x="30.5" y="34" font-size="7" font-family="Liberation Sans" font-weight="bold" fill="#111">f</text></svg><div style="position:absolute;left:213.5px;top:48.0px;font-family:'Liberation Serif',serif;font-size:5.3px;line-height:1;color:#111;white-space:nowrap;">α = redzes leņķis.</div><div style="position:absolute;left:213.5px;top:55.1px;font-family:'Liberation Serif',serif;font-size:5.3px;line-height:1;color:#111;white-space:nowrap;">a₁ a₂ – matricas izmēri.</div><div style="position:absolute;left:213.5px;top:62.2px;font-family:'Liberation Serif',serif;font-size:5.3px;line-height:1;color:#111;white-space:nowrap;">f₁ f₂ – fokusa attālumi.</div><div style="position:absolute;left:213.5px;top:69.3px;font-family:'Liberation Serif',serif;font-size:5.3px;line-height:1;color:#111;white-space:nowrap;">α₁ α₂ – ...</div></div></div><div style="position:absolute;left:0px;top:0px;width:401px;height:317px;border:1px solid #b4b4b4;box-sizing:border-box;box-shadow:1px 1px 4px rgba(0,0,0,0.3)"></div></div></div><svg style="position:absolute;left:164.6px;top:114.3px;" width="8" height="12" viewBox="0 0 8 12"><path d="M0.5 0.5 L0.5 10 L3 7.8 L4.8 11.5 L6.2 10.8 L4.5 7.2 L7.5 7.2Z" fill="#fff" stroke="#000" stroke-width="0.7"/></svg><div style="position:absolute;left:48px;top:134px;width:503px;height:159.5px;background:rgba(26,26,26,0.85);"></div><div style="position:absolute;left:57.6px;top:145px;width:163.9px;height:138.8px;border:1px solid #111;box-sizing:border-box"></div><div style="position:absolute;left:58.6px;top:146px;width:161.9px;height:136.8px;border:1.6px solid #fff;box-sizing:border-box"></div><div style="position:absolute;left:60.2px;top:163.2px;width:158.1px;height:117.7px;background:#000;"></div><div style="position:absolute;left:61.7px;top:173px;transform-origin:0 0;transform:scale(0.5504)"><div style="position:absolute;left:0px;top:0px;width:282px;height:176px;background:#fff;overflow:hidden"><div style="position:absolute;left:3px;top:0.8px;font-family:'Liberation Serif',serif;font-size:3.4px;line-height:1;color:#111;white-space:nowrap;">Fotografēšanas pamati</div><div style="position:absolute;left:262px;top:0.8px;font-family:'Liberation Serif',serif;font-size:3.4px;line-height:1;color:#111;white-space:nowrap;">25.06.2021</div><div style="position:absolute;left:4px;top:11.4px;width:201px;height:150px;background:#dcdcdc;"></div><div style="position:absolute;left:35.5px;top:18px;font-family:'Liberation Sans',sans-serif;font-size:10.8px;line-height:1;color:#222;white-space:nowrap;font-weight:bold;transform-origin:0 0;transform:scaleX(0.955);text-shadow:0.6px 0.6px 0 #fff;-webkit-text-stroke:0.3px #222">Fokusa attālums un redzes leņķis</div><svg style="position:absolute;left:0;top:0" width="100" height="176" viewBox="0 0 100 176"><path d="M44 55 L57.4 49.5 M45 72 L57.4 68 M42 78 L57.4 87.5 M44 101 L57.4 91.5 M45 118 L57.4 113 M42 124 L57.4 130" stroke="#8aa" stroke-width="0.5" fill="none"/></svg><div style="position:absolute;left:13px;top:45.5px;font-family:'Liberation Sans',sans-serif;font-size:3px;line-height:1;color:#333;white-space:nowrap;">(1) 35 mm</div><div style="position:absolute;left:14.8px;top:46.5px;width:36.4px;height:36.4px;border-radius:50%;background:#fff;"></div><div style="position:absolute;left:15.8px;top:47.5px;width:34.4px;height:34.4px;border-radius:50%;background:#3d4246;overflow:hidden"><div style="position:absolute;left:4.816px;top:8.6px;width:24.767999999999997px;height:16.34px;background:#f4f4f4;border:1px solid #c33;box-sizing:border-box;overflow:hidden"><div style="position:absolute;left:1.5px;top:1.5px;width:21.767999999999997px;height:13.34px;background:#bfe0f0;overflow:hidden"><svg width="21.767999999999997" height="13.34" viewBox="0 0 21.767999999999997 13.34" style="position:absolute;left:0;top:0"><circle cx="9.123119999999998" cy="5.336" r="1.6141400000000001" fill="#f39a1e"/><circle cx="12.644879999999999" cy="5.336" r="1.6141400000000001" fill="#f39a1e"/><circle cx="10.883999999999999" cy="3.57512" r="1.6141400000000001" fill="#f5a623"/><circle cx="10.883999999999999" cy="7.0968800000000005" r="1.6141400000000001" fill="#e8801a"/><circle cx="10.883999999999999" cy="5.336" r="1.02718" fill="#c0392b"/><rect x="10.230959999999998" y="7.337000000000001" width="1.3060799999999997" height="4.002" fill="#2e8b3e"/><ellipse cx="13.060799999999999" cy="9.6048" rx="2.1767999999999996" ry="0.8004" fill="#3aa04a"/></svg></div></div><div style="position:absolute;left:14.62px;top:24.939999999999998px;width:5.159999999999999px;height:3.44px;background:#111"></div></div><div style="position:absolute;left:17.5px;top:86px;font-family:'Liberation Sans',sans-serif;font-size:2.6px;line-height:1;color:#333;white-space:nowrap;">(-1,6 × 100 × 0 × 100 mm)</div><div style="position:absolute;left:14.8px;top:92.6px;width:36.4px;height:36.4px;border-radius:50%;background:#fff;"></div><div style="position:absolute;left:15.8px;top:93.6px;width:34.4px;height:34.4px;border-radius:50%;background:#3d4246;overflow:hidden"><div style="position:absolute;left:4.816px;top:8.6px;width:24.767999999999997px;height:16.34px;background:#f4f4f4;border:1px solid #c33;box-sizing:border-box;overflow:hidden"><div style="position:absolute;left:1.5px;top:1.5px;width:21.767999999999997px;height:13.34px;background:#bfe0f0;overflow:hidden"><svg width="21.767999999999997" height="13.34" viewBox="0 0 21.767999999999997 13.34" style="position:absolute;left:0;top:0"><circle cx="5.249759999999999" cy="4.669" r="1.17392" fill="#f39a1e"/><circle cx="7.811039999999999" cy="4.669" r="1.17392" fill="#f39a1e"/><circle cx="6.530399999999999" cy="3.3883599999999996" r="1.17392" fill="#f5a623"/><circle cx="6.530399999999999" cy="5.94964" r="1.17392" fill="#e8801a"/><circle cx="6.530399999999999" cy="4.669" r="0.7470399999999999" fill="#c0392b"/><circle cx="12.868559999999999" cy="4.002" r="1.17392" fill="#f39a1e"/><circle cx="15.429839999999999" cy="4.002" r="1.17392" fill="#f39a1e"/><circle cx="14.149199999999999" cy="2.72136" r="1.17392" fill="#f5a623"/><circle cx="14.149199999999999" cy="5.28264" r="1.17392" fill="#e8801a"/><circle cx="14.149199999999999" cy="4.002" r="0.7470399999999999" fill="#c0392b"/><circle cx="9.603359999999999" cy="8.004" r="1.17392" fill="#f39a1e"/><circle cx="12.164639999999999" cy="8.004" r="1.17392" fill="#f39a1e"/><circle cx="10.883999999999999" cy="6.72336" r="1.17392" fill="#f5a623"/><circle cx="10.883999999999999" cy="9.28464" r="1.17392" fill="#e8801a"/><circle cx="10.883999999999999" cy="8.004" r="0.7470399999999999" fill="#c0392b"/><circle cx="3.0729599999999992" cy="9.338" r="1.17392" fill="#f39a1e"/><circle cx="5.634239999999999" cy="9.338" r="1.17392" fill="#f39a1e"/><circle cx="4.353599999999999" cy="8.05736" r="1.17392" fill="#f5a623"/><circle cx="4.353599999999999" cy="10.61864" r="1.17392" fill="#e8801a"/><circle cx="4.353599999999999" cy="9.338" r="0.7470399999999999" fill="#c0392b"/><circle cx="16.13376" cy="8.671" r="1.17392" fill="#f39a1e"/><circle cx="18.695039999999995" cy="8.671" r="1.17392" fill="#f39a1e"/><circle cx="17.414399999999997" cy="7.390359999999999" r="1.17392" fill="#f5a623"/><circle cx="17.414399999999997" cy="9.95164" r="1.17392" fill="#e8801a"/><circle cx="17.414399999999997" cy="8.671" r="0.7470399999999999" fill="#c0392b"/></svg></div></div><div style="position:absolute;left:10.319999999999999px;top:24.939999999999998px;width:15.48px;height:8.6px;background:#111;border-radius:2px"></div></div><div style="position:absolute;left:12px;top:91.5px;font-family:'Liberation Sans',sans-serif;font-size:3px;line-height:1;color:#333;white-space:nowrap;">(2) 7 %</div><div style="position:absolute;left:57.4px;top:49.1px;width:24.4px;height:19.1px;background:#d4eaf4;border:0.8px solid #c66;box-sizing:border-box;overflow:hidden"><svg width="24.4" height="19.1" viewBox="0 0 24.4 19.1" style="position:absolute;left:0;top:0"><circle cx="9.678799999999999" cy="7.640000000000001" r="2.3111" fill="#f39a1e"/><circle cx="14.7212" cy="7.640000000000001" r="2.3111" fill="#f39a1e"/><circle cx="12.2" cy="5.1188" r="2.3111" fill="#f5a623"/><circle cx="12.2" cy="10.161200000000001" r="2.3111" fill="#e8801a"/><circle cx="12.2" cy="7.640000000000001" r="1.4707" fill="#c0392b"/><rect x="11.467999999999998" y="10.505" width="1.464" height="5.73" fill="#2e8b3e"/><ellipse cx="14.639999999999999" cy="13.752" rx="2.44" ry="1.1460000000000001" fill="#3aa04a"/></svg><div style="position:absolute;left:3.6599999999999997px;top:15.900000000000002px;width:17.08px;height:1.8px;background:#d23;"></div></div><div style="position:absolute;left:57.4px;top:71.9px;width:14.4px;height:15.6px;background:#d4eaf4;border:0.8px solid #36c;box-sizing:border-box;overflow:hidden"><svg width="14.4" height="15.6" viewBox="0 0 14.4 15.6" style="position:absolute;left:0;top:0"><circle cx="5.2992" cy="6.24" r="1.7424000000000002" fill="#f39a1e"/><circle cx="9.1008" cy="6.24" r="1.7424000000000002" fill="#f39a1e"/><circle cx="7.2" cy="4.3392" r="1.7424000000000002" fill="#f5a623"/><circle cx="7.2" cy="8.1408" r="1.7424000000000002" fill="#e8801a"/><circle cx="7.2" cy="6.24" r="1.1088" fill="#c0392b"/><rect x="6.768" y="8.58" width="0.864" height="4.68" fill="#2e8b3e"/><ellipse cx="8.64" cy="11.232" rx="1.4400000000000002" ry="0.9359999999999999" fill="#3aa04a"/></svg><div style="position:absolute;left:2.16px;top:12.399999999999999px;width:10.08px;height:1.8px;background:#d23;"></div></div><div style="position:absolute;left:57.4px;top:90.9px;width:24.4px;height:22.1px;background:#d4eaf4;border:0.8px solid #c66;box-sizing:border-box;overflow:hidden"><svg width="24.4" height="22.1" viewBox="0 0 24.4 22.1" style="position:absolute;left:0;top:0"><circle cx="5.1983999999999995" cy="7.735" r="1.9448000000000005" fill="#f39a1e"/><circle cx="9.4416" cy="7.735" r="1.9448000000000005" fill="#f39a1e"/><circle cx="7.319999999999999" cy="5.6134" r="1.9448000000000005" fill="#f5a623"/><circle cx="7.319999999999999" cy="9.8566" r="1.9448000000000005" fill="#e8801a"/><circle cx="7.319999999999999" cy="7.735" r="1.2376" fill="#c0392b"/><circle cx="13.738399999999999" cy="6.63" r="1.9448000000000005" fill="#f39a1e"/><circle cx="17.9816" cy="6.63" r="1.9448000000000005" fill="#f39a1e"/><circle cx="15.86" cy="4.5084" r="1.9448000000000005" fill="#f5a623"/><circle cx="15.86" cy="8.7516" r="1.9448000000000005" fill="#e8801a"/><circle cx="15.86" cy="6.63" r="1.2376" fill="#c0392b"/><circle cx="10.078399999999998" cy="13.26" r="1.9448000000000005" fill="#f39a1e"/><circle cx="14.3216" cy="13.26" r="1.9448000000000005" fill="#f39a1e"/><circle cx="12.2" cy="11.138399999999999" r="1.9448000000000005" fill="#f5a623"/><circle cx="12.2" cy="15.3816" r="1.9448000000000005" fill="#e8801a"/><circle cx="12.2" cy="13.26" r="1.2376" fill="#c0392b"/><circle cx="2.7583999999999995" cy="15.47" r="1.9448000000000005" fill="#f39a1e"/><circle cx="7.0016" cy="15.47" r="1.9448000000000005" fill="#f39a1e"/><circle cx="4.88" cy="13.3484" r="1.9448000000000005" fill="#f5a623"/><circle cx="4.88" cy="17.5916" r="1.9448000000000005" fill="#e8801a"/><circle cx="4.88" cy="15.47" r="1.2376" fill="#c0392b"/><circle cx="17.3984" cy="14.365000000000002" r="1.9448000000000005" fill="#f39a1e"/><circle cx="21.6416" cy="14.365000000000002" r="1.9448000000000005" fill="#f39a1e"/><circle cx="19.52" cy="12.243400000000001" r="1.9448000000000005" fill="#f5a623"/><circle cx="19.52" cy="16.486600000000003" r="1.9448000000000005" fill="#e8801a"/><circle cx="19.52" cy="14.365000000000002" r="1.2376" fill="#c0392b"/></svg><div style="position:absolute;left:3.6599999999999997px;top:18.900000000000002px;width:17.08px;height:1.8px;background:#d23;"></div></div><div style="position:absolute;left:57.4px;top:115.2px;width:14.4px;height:15.5px;background:#d4eaf4;border:0.8px solid #36c;box-sizing:border-box;overflow:hidden"><svg width="14.4" height="15.5" viewBox="0 0 14.4 15.5" style="position:absolute;left:0;top:0"><circle cx="2.9376" cy="5.425" r="1.2672000000000003" fill="#f39a1e"/><circle cx="5.702400000000001" cy="5.425" r="1.2672000000000003" fill="#f39a1e"/><circle cx="4.32" cy="4.0426" r="1.2672000000000003" fill="#f5a623"/><circle cx="4.32" cy="6.8073999999999995" r="1.2672000000000003" fill="#e8801a"/><circle cx="4.32" cy="5.425" r="0.8064" fill="#c0392b"/><circle cx="7.977600000000001" cy="4.6499999999999995" r="1.2672000000000003" fill="#f39a1e"/><circle cx="10.742400000000002" cy="4.6499999999999995" r="1.2672000000000003" fill="#f39a1e"/><circle cx="9.360000000000001" cy="3.2675999999999994" r="1.2672000000000003" fill="#f5a623"/><circle cx="9.360000000000001" cy="6.032399999999999" r="1.2672000000000003" fill="#e8801a"/><circle cx="9.360000000000001" cy="4.6499999999999995" r="0.8064" fill="#c0392b"/><circle cx="5.8176000000000005" cy="9.299999999999999" r="1.2672000000000003" fill="#f39a1e"/><circle cx="8.5824" cy="9.299999999999999" r="1.2672000000000003" fill="#f39a1e"/><circle cx="7.2" cy="7.917599999999998" r="1.2672000000000003" fill="#f5a623"/><circle cx="7.2" cy="10.6824" r="1.2672000000000003" fill="#e8801a"/><circle cx="7.2" cy="9.299999999999999" r="0.8064" fill="#c0392b"/><circle cx="1.4976000000000003" cy="10.85" r="1.2672000000000003" fill="#f39a1e"/><circle cx="4.2624" cy="10.85" r="1.2672000000000003" fill="#f39a1e"/><circle cx="2.8800000000000003" cy="9.4676" r="1.2672000000000003" fill="#f5a623"/><circle cx="2.8800000000000003" cy="12.2324" r="1.2672000000000003" fill="#e8801a"/><circle cx="2.8800000000000003" cy="10.85" r="0.8064" fill="#c0392b"/><circle cx="10.1376" cy="10.075000000000001" r="1.2672000000000003" fill="#f39a1e"/><circle cx="12.902400000000002" cy="10.075000000000001" r="1.2672000000000003" fill="#f39a1e"/><circle cx="11.520000000000001" cy="8.6926" r="1.2672000000000003" fill="#f5a623"/><circle cx="11.520000000000001" cy="11.457400000000002" r="1.2672000000000003" fill="#e8801a"/><circle cx="11.520000000000001" cy="10.075000000000001" r="0.8064" fill="#c0392b"/></svg><div style="position:absolute;left:2.16px;top:12.3px;width:10.08px;height:1.8px;background:#d23;"></div></div><div style="position:absolute;left:107px;top:47.0px;font-family:'Liberation Serif',serif;font-size:6.6px;line-height:1;color:#000;white-space:nowrap;-webkit-text-stroke:0.1px #000">Parastajām 35 mm fotokamerām</div><div style="position:absolute;left:107px;top:54.5px;font-family:'Liberation Serif',serif;font-size:6.6px;line-height:1;color:#000;white-space:nowrap;-webkit-text-stroke:0.1px #000">platleņķa objektīvi ir &lt; 40 mm, bet</div><div style="position:absolute;left:107px;top:62.0px;font-family:'Liberation Serif',serif;font-size:6.6px;line-height:1;color:#000;white-space:nowrap;-webkit-text-stroke:0.1px #000">teleobjektīvi &gt; 70 mm.</div><div style="position:absolute;left:107px;top:72.0px;font-family:'Liberation Serif',serif;font-size:6.6px;line-height:1;color:#000;white-space:nowrap;-webkit-text-stroke:0.1px #000">Digitālām fotokamerām var</div><div style="position:absolute;left:107px;top:79.5px;font-family:'Liberation Serif',serif;font-size:6.6px;line-height:1;color:#000;white-space:nowrap;-webkit-text-stroke:0.1px #000">atšķirties matricas izmēri (attēla</div><div style="position:absolute;left:107px;top:87.0px;font-family:'Liberation Serif',serif;font-size:6.6px;line-height:1;color:#000;white-space:nowrap;-webkit-text-stroke:0.1px #000">reģistrējošais laukums).</div><div style="position:absolute;left:101.2px;top:49.3px;width:2.6px;height:2.6px;background:#111;border-radius:50%"></div><div style="position:absolute;left:101.2px;top:74.2px;width:2.6px;height:2.6px;background:#111;border-radius:50%"></div><div style="position:absolute;left:207.5px;top:13.0px;font-family:'Liberation Sans',sans-serif;font-size:4.8px;line-height:1;color:#222;white-space:nowrap;">&nbsp;&nbsp;&nbsp;Pilna matrica atbilst 35 mm</div><div style="position:absolute;left:207.5px;top:18.2px;font-family:'Liberation Sans',sans-serif;font-size:4.8px;line-height:1;color:#222;white-space:nowrap;">fotofilmiņas pilnam kadram (24 ×</div><div style="position:absolute;left:207.5px;top:23.4px;font-family:'Liberation Sans',sans-serif;font-size:4.8px;line-height:1;color:#222;white-space:nowrap;">36 mm). Turpretī, runājot par</div><div style="position:absolute;left:207.5px;top:28.6px;font-family:'Liberation Sans',sans-serif;font-size:4.8px;line-height:1;color:#222;white-space:nowrap;">fokusa attālumu, ekvivalentais</div><div style="position:absolute;left:207.5px;top:33.8px;font-family:'Liberation Sans',sans-serif;font-size:4.8px;line-height:1;color:#222;white-space:nowrap;">fokusa attālums 35 mm</div><div style="position:absolute;left:207.5px;top:39.0px;font-family:'Liberation Sans',sans-serif;font-size:4.8px;line-height:1;color:#222;white-space:nowrap;">fotokameras objektīvam.</div><div style="position:absolute;left:207.5px;top:46.0px;font-family:'Liberation Sans',sans-serif;font-size:4.8px;line-height:1;color:#222;white-space:nowrap;">&nbsp;&nbsp;&nbsp;Augstas kvalitātes matricu</div><div style="position:absolute;left:207.5px;top:51.2px;font-family:'Liberation Sans',sans-serif;font-size:4.8px;line-height:1;color:#222;white-space:nowrap;">fotoaparātiem (piemēram, Nikon</div><div style="position:absolute;left:207.5px;top:56.4px;font-family:'Liberation Sans',sans-serif;font-size:4.8px;line-height:1;color:#222;white-space:nowrap;">D3x), tipiski sensora izmēri ir no</div><div style="position:absolute;left:207.5px;top:61.6px;font-family:'Liberation Sans',sans-serif;font-size:4.8px;line-height:1;color:#222;white-space:nowrap;">4 × 5, 4 × 7 un 8 × 8 cm. Tās</div><div style="position:absolute;left:207.5px;top:66.8px;font-family:'Liberation Sans',sans-serif;font-size:4.8px;line-height:1;color:#222;white-space:nowrap;">tajā ir fotomatricas digitālās</div><div style="position:absolute;left:207.5px;top:72.0px;font-family:'Liberation Sans',sans-serif;font-size:4.8px;line-height:1;color:#222;white-space:nowrap;">kameras, piemēram, pie</div><div style="position:absolute;left:207.5px;top:77.2px;font-family:'Liberation Sans',sans-serif;font-size:4.8px;line-height:1;color:#222;white-space:nowrap;">23%, ņemot matricas izmēru</div><div style="position:absolute;left:207.5px;top:82.4px;font-family:'Liberation Sans',sans-serif;font-size:4.8px;line-height:1;color:#222;white-space:nowrap;">"Nikon 1 DX" kameras ar</div><div style="position:absolute;left:207.5px;top:87.6px;font-family:'Liberation Sans',sans-serif;font-size:4.8px;line-height:1;color:#222;white-space:nowrap;">fokusa attālumu 32,8 × 23,9 mm</div><div style="position:absolute;left:207.5px;top:92.80000000000001px;font-family:'Liberation Sans',sans-serif;font-size:4.8px;line-height:1;color:#222;white-space:nowrap;">sensoru.</div><div style="position:absolute;left:5px;top:156.3px;width:6.5px;height:5.5px;border:0.9px solid #222;border-radius:50%;box-sizing:border-box;background:#fff"></div><div style="position:absolute;left:6.3px;top:157.6px;font-family:'Liberation Sans',sans-serif;font-size:2.6px;line-height:1;color:#222;white-space:nowrap;font-weight:bold">cc</div><div style="position:absolute;left:12.5px;top:157.2px;font-family:'Liberation Sans',sans-serif;font-size:3px;line-height:1;color:#333;white-space:nowrap;font-weight:bold">BY SA</div><div style="position:absolute;left:116px;top:158.6px;width:88px;height:1.6px;background:#888;"></div><div style="position:absolute;left:3px;top:172.3px;font-family:'Liberation Serif',serif;font-size:3.4px;line-height:1;color:#111;white-space:nowrap;">27 (27) · Tekā: Kārlis Kalviškis</div></div></div><svg style="position:absolute;left:63.5px;top:150px;" width="9" height="10" viewBox="0 0 9 10"><rect x="0" y="0" width="9" height="10" fill="#fff"/><path d="M4.5 1 L5.5 1 L4.5 7 L1 8.5Z" fill="#1d5fb5"/><path d="M1.5 8 L7.5 6" stroke="#1d5fb5" stroke-width="1.3"/></svg><div style="position:absolute;left:76.8px;top:152.5px;font-family:'Liberation Sans',sans-serif;font-size:6.2px;line-height:1;color:#fff;white-space:nowrap;-webkit-text-stroke:0.2px #fff">Fotografēšanas pamati. – Presentation - Ok...</div><svg style="position:absolute;left:224.5px;top:150px;" width="9" height="10" viewBox="0 0 9 10"><rect x="0" y="0" width="9" height="10" fill="#fff"/><path d="M4.5 1 L5.5 1 L4.5 7 L1 8.5Z" fill="#1d5fb5"/><path d="M1.5 8 L7.5 6" stroke="#1d5fb5" stroke-width="1.3"/></svg><div style="position:absolute;left:238.5px;top:152.5px;font-family:'Liberation Sans',sans-serif;font-size:6.2px;line-height:1;color:#fff;white-space:nowrap;-webkit-text-stroke:0.2px #fff">Fotografēšanas pamati. &nbsp;- Okular</div><div style="position:absolute;left:222.3px;top:162.3px;width:149.4px;height:118px;background:#111;"></div><div style="position:absolute;left:223px;top:163px;transform-origin:0 0;transform:scale(0.369,0.3685)"><div style="position:absolute;left:0px;top:0px;width:401px;height:317px;background:#eff0f1;overflow:hidden"><div style="position:absolute;left:0px;top:0px;width:401px;height:17.8px;background:#fbfbfb;"></div><svg style="position:absolute;left:6px;top:4px;" width="8" height="9" viewBox="0 0 8 9"><path d="M1 8 L7 8 L7 5" fill="none" stroke="#aaa" stroke-width="0.6"/><path d="M4 1 L5 1 L4 6 L1 7.5Z" fill="#1d5fb5"/><path d="M1.5 7 L6.5 5.5" stroke="#1d5fb5" stroke-width="1.2"/></svg><div style="position:absolute;left:15.8px;top:5px;font-family:'Liberation Sans',sans-serif;font-size:6.1px;line-height:1;color:#7a7a7a;white-space:nowrap;">Fotografēšanas pamati. &nbsp;– Okular</div><svg style="position:absolute;left:338px;top:5px;" width="6" height="6" viewBox="0 0 6 6"><path d="M0.3 3 H5.7" stroke="#666" stroke-width="0.6"/></svg><svg style="position:absolute;left:361.7px;top:5px;" width="6" height="6" viewBox="0 0 6 6"><rect x="0.4" y="0.4" width="5.2" height="5.2" fill="none" stroke="#666" stroke-width="0.6"/></svg><svg style="position:absolute;left:385.7px;top:5px;" width="6" height="6" viewBox="0 0 6 6"><path d="M0.3 0.3 L5.7 5.7 M5.7 0.3 L0.3 5.7" stroke="#666" stroke-width="0.6"/></svg><div style="position:absolute;left:6.3px;top:21.4px;font-family:'Liberation Sans',sans-serif;font-size:8.8px;line-height:1;color:#1a1c1e;white-space:nowrap;-webkit-text-stroke:0.15px #1a1c1e;transform-origin:0 0;transform:scaleX(0.9)">File</div><div style="position:absolute;left:28.7px;top:21.4px;font-family:'Liberation Sans',sans-serif;font-size:8.8px;line-height:1;color:#1a1c1e;white-space:nowrap;-webkit-text-stroke:0.15px #1a1c1e;transform-origin:0 0;transform:scaleX(0.9)">View</div><div style="position:absolute;left:57px;top:21.4px;font-family:'Liberation Sans',sans-serif;font-size:8.8px;line-height:1;color:#1a1c1e;white-space:nowrap;-webkit-text-stroke:0.15px #1a1c1e;transform-origin:0 0;transform:scaleX(0.9)">Edit</div><div style="position:absolute;left:81px;top:21.4px;font-family:'Liberation Sans',sans-serif;font-size:8.8px;line-height:1;color:#1a1c1e;white-space:nowrap;-webkit-text-stroke:0.15px #1a1c1e;transform-origin:0 0;transform:scaleX(0.9)">Go</div><div style="position:absolute;left:102px;top:21.4px;font-family:'Liberation Sans',sans-serif;font-size:8.8px;line-height:1;color:#1a1c1e;white-space:nowrap;-webkit-text-stroke:0.15px #1a1c1e;transform-origin:0 0;transform:scaleX(0.9)">Bookmarks</div><div style="position:absolute;left:153px;top:21.4px;font-family:'Liberation Sans',sans-serif;font-size:8.8px;line-height:1;color:#1a1c1e;white-space:nowrap;-webkit-text-stroke:0.15px #1a1c1e;transform-origin:0 0;transform:scaleX(0.9)">Tools</div><div style="position:absolute;left:181.3px;top:21.4px;font-family:'Liberation Sans',sans-serif;font-size:8.8px;line-height:1;color:#1a1c1e;white-space:nowrap;-webkit-text-stroke:0.15px #1a1c1e;transform-origin:0 0;transform:scaleX(0.9)">Settings</div><div style="position:absolute;left:221px;top:21.4px;font-family:'Liberation Sans',sans-serif;font-size:8.8px;line-height:1;color:#1a1c1e;white-space:nowrap;-webkit-text-stroke:0.15px #1a1c1e;transform-origin:0 0;transform:scaleX(0.9)">Help</div><div style="position:absolute;left:4.5px;top:37.3px;width:16.5px;height:16.5px;background:#d6d7d9;border-radius:2px"></div><svg style="position:absolute;left:9px;top:40px;" width="10" height="10" viewBox="0 0 10 10"><rect x="0.6" y="0.6" width="8.8" height="8.8" fill="#fff" stroke="#232629" stroke-width="1"/><rect x="0.6" y="0.6" width="3" height="8.8" fill="#232629"/><path d="M5.5 3 L7 5 L5.5 7" stroke="#232629" stroke-width="0.8" fill="none"/></svg><svg style="position:absolute;left:29.5px;top:41px;" width="11" height="11" viewBox="0 0 11 11"><circle cx="5" cy="5" r="3.8" fill="none" stroke="#232629" stroke-width="0.9"/><path d="M3 5 H7 M5 3 V7" stroke="#232629" stroke-width="0.9"/><path d="M7.8 7.8 L10.5 10.5" stroke="#232629" stroke-width="1"/></svg><svg style="position:absolute;left:47px;top:41px;" width="11" height="11" viewBox="0 0 11 11"><circle cx="5" cy="5" r="3.8" fill="none" stroke="#232629" stroke-width="0.9"/><path d="M3 5 H7" stroke="#232629" stroke-width="0.9"/><path d="M7.8 7.8 L10.5 10.5" stroke="#232629" stroke-width="1"/></svg><div style="position:absolute;left:25px;top:40px;width:0.7px;height:11px;background:#cfd0d1;"></div><div style="position:absolute;left:61.5px;top:36.3px;width:50.5px;height:18.5px;background:#fcfcfc;border:1px solid #3daee9;border-radius:3px;box-sizing:border-box"></div><div style="position:absolute;left:64.8px;top:42.5px;font-family:'Liberation Sans',sans-serif;font-size:8.6px;line-height:1;color:#1a1c1e;white-space:nowrap;-webkit-text-stroke:0.15px #1a1c1e">Fit Width</div><svg style="position:absolute;left:102px;top:43.5px;" width="7" height="5" viewBox="0 0 7 5"><path d="M0.5 0.8 L3.5 3.8 L6.5 0.8" stroke="#232629" stroke-width="0.8" fill="none"/></svg><svg style="position:absolute;left:118px;top:41px;" width="10" height="10" viewBox="0 0 10 10"><rect x="0.6" y="0.6" width="8.8" height="8.8" fill="none" stroke="#232629" stroke-width="1"/><path d="M5 0.6 V9.4" stroke="#232629" stroke-width="1"/><rect x="0.6" y="0.6" width="8.8" height="2" fill="#232629"/></svg><div style="position:absolute;left:130.3px;top:42.8px;font-family:'Liberation Sans',sans-serif;font-size:8.6px;line-height:1;color:#1a1c1e;white-space:nowrap;-webkit-text-stroke:0.15px #1a1c1e">View Mode</div><svg style="position:absolute;left:177px;top:44px;" width="7" height="5" viewBox="0 0 7 5"><path d="M0.5 0.8 L3.5 3.8 L6.5 0.8" stroke="#232629" stroke-width="0.8" fill="none"/></svg><svg style="position:absolute;left:207px;top:43px;" width="9" height="6" viewBox="0 0 9 6"><path d="M0.5 5 L4.5 1 L8.5 5" stroke="#232629" stroke-width="0.9" fill="none"/></svg><div style="position:absolute;left:222px;top:36.9px;width:38px;height:18px;background:#fcfcfc;border:1px solid #d1d2d3;border-radius:3px;box-sizing:border-box"></div><div style="position:absolute;left:235.5px;top:42.8px;font-family:'Liberation Sans',sans-serif;font-size:8.6px;line-height:1;color:#1a1c1e;white-space:nowrap;-webkit-text-stroke:0.15px #1a1c1e">17</div><div style="position:absolute;left:264.3px;top:42.8px;font-family:'Liberation Sans',sans-serif;font-size:8.6px;line-height:1;color:#1a1c1e;white-space:nowrap;-webkit-text-stroke:0.15px #1a1c1e">of</div><div style="position:absolute;left:279.3px;top:42.8px;font-family:'Liberation Sans',sans-serif;font-size:8.6px;line-height:1;color:#1a1c1e;white-space:nowrap;-webkit-text-stroke:0.15px #1a1c1e">131</div><svg style="position:absolute;left:304px;top:43px;" width="9" height="6" viewBox="0 0 9 6"><path d="M0.5 1 L4.5 5 L8.5 1" stroke="#232629" stroke-width="0.9" fill="none"/></svg><div style="position:absolute;left:333.3px;top:37.8px;width:49px;height:16.2px;background:#dadbdc;border-radius:3px"></div><svg style="position:absolute;left:337px;top:41px;" width="10" height="10" viewBox="0 0 10 10"><path d="M2 9 L1 5 Q1 4 2 4.5 L3 6 V1.5 Q3.5 0.8 4 1.5 V5 V1 Q4.5 0.3 5 1 V5 V1.5 Q5.5 0.8 6 1.5 V5.5 V3 Q6.5 2.3 7 3 V7 Q7 9 5 9.3Z" fill="none" stroke="#232629" stroke-width="0.7"/></svg><div style="position:absolute;left:349px;top:42.8px;font-family:'Liberation Sans',sans-serif;font-size:8.6px;line-height:1;color:#1a1c1e;white-space:nowrap;-webkit-text-stroke:0.15px #1a1c1e">Browse</div><svg style="position:absolute;left:389px;top:41px;" width="6" height="10" viewBox="0 0 6 10"><path d="M1 1 L5 5 L1 9" stroke="#232629" stroke-width="1" fill="none"/></svg><div style="position:absolute;left:0px;top:57px;width:401px;height:0.8px;background:#d1d2d3;"></div><div style="position:absolute;left:0px;top:58px;width:106px;height:259px;background:#fcfcfc;"></div><svg style="position:absolute;left:8.5px;top:61px;" width="10" height="11" viewBox="0 0 10 11"><rect x="0.6" y="0.6" width="8.8" height="9.8" fill="none" stroke="#232629" stroke-width="0.9"/><path d="M1 8 L4 5 L6 7 L9 4" stroke="#232629" stroke-width="0.8" fill="none"/></svg><div style="position:absolute;left:27px;top:62px;width:0.8px;height:10px;background:#d1d2d3;"></div><svg style="position:absolute;left:34px;top:61px;" width="10" height="11" viewBox="0 0 10 11"><path d="M1 9 L7 2 L9 4 L3 10.5Z" fill="none" stroke="#232629" stroke-width="0.9"/></svg><div style="position:absolute;left:53px;top:62px;width:0.8px;height:10px;background:#d1d2d3;"></div><svg style="position:absolute;left:61px;top:61px;" width="8" height="11" viewBox="0 0 8 11"><rect x="0.6" y="0.6" width="6.8" height="9.8" rx="1" fill="none" stroke="#232629" stroke-width="0.9"/></svg><div style="position:absolute;left:79px;top:62px;width:0.8px;height:10px;background:#d1d2d3;"></div><svg style="position:absolute;left:85px;top:61px;" width="9" height="11" viewBox="0 0 9 11"><path d="M1 1.5H8 M3 4.5H8 M3 7.5H8 M1 10H6" stroke="#232629" stroke-width="0.9"/></svg><div style="position:absolute;left:0px;top:76px;width:106px;height:0.8px;background:#d1d2d3;"></div><div style="position:absolute;left:35px;top:85px;font-family:'Liberation Sans',sans-serif;font-size:8.6px;line-height:1;color:#232629;white-space:nowrap;">Contents</div><div style="position:absolute;left:2px;top:101px;width:100px;height:15px;background:#fff;border:1px solid #d1d2d3;border-radius:2px;box-sizing:border-box"></div><div style="position:absolute;left:6px;top:105.5px;font-family:'Liberation Sans',sans-serif;font-size:6.5px;line-height:1;color:#888;white-space:nowrap;">Search...</div><div style="position:absolute;left:1.5px;top:118px;width:99.5px;height:196px;background:#fff;border:1px solid #d1d2d3;box-sizing:border-box"></div><div style="position:absolute;left:7px;top:122.0px;width:0.6px;height:10.3px;background:#d8d8d8;"></div><div style="position:absolute;left:7px;top:126.0px;width:5px;height:0.6px;background:#c8c8c8;"></div><div style="position:absolute;left:16.5px;top:122.5px;font-family:'Liberation Sans',sans-serif;font-size:7.6px;line-height:1;color:#1a1c1e;white-space:nowrap;-webkit-text-stroke:0.15px #1a1c1e">Vēsture</div><div style="position:absolute;left:67px;top:122.0px;width:21.5px;font-family:'Liberation Sans',sans-serif;font-size:7.6px;line-height:1;color:#1a1c1e;-webkit-text-stroke:0.05px #1a1c1e;text-align:right;">1</div><div style="position:absolute;left:14px;top:131.3px;width:77px;height:10.3px;background:#f5f5f5;"></div><div style="position:absolute;left:7px;top:132.3px;width:0.6px;height:10.3px;background:#d8d8d8;"></div><div style="position:absolute;left:7px;top:136.3px;width:5px;height:0.6px;background:#c8c8c8;"></div><div style="position:absolute;left:16.5px;top:132.8px;font-family:'Liberation Sans',sans-serif;font-size:7.6px;line-height:1;color:#1a1c1e;white-space:nowrap;-webkit-text-stroke:0.15px #1a1c1e">Fotoaparāti</div><div style="position:absolute;left:67px;top:132.3px;width:21.5px;font-family:'Liberation Sans',sans-serif;font-size:7.6px;line-height:1;color:#1a1c1e;-webkit-text-stroke:0.05px #1a1c1e;text-align:right;">2</div><div style="position:absolute;left:7px;top:142.6px;width:0.6px;height:10.3px;background:#d8d8d8;"></div><div style="position:absolute;left:7px;top:146.6px;width:5px;height:0.6px;background:#c8c8c8;"></div><div style="position:absolute;left:16.5px;top:143.1px;font-family:'Liberation Sans',sans-serif;font-size:7.6px;line-height:1;color:#1a1c1e;white-space:nowrap;-webkit-text-stroke:0.15px #1a1c1e">Zīmēšana ar gais...</div><div style="position:absolute;left:67px;top:142.6px;width:21.5px;font-family:'Liberation Sans',sans-serif;font-size:7.6px;line-height:1;color:#1a1c1e;-webkit-text-stroke:0.05px #1a1c1e;text-align:right;">3</div><div style="position:absolute;left:14px;top:151.9px;width:77px;height:10.3px;background:#f5f5f5;"></div><div style="position:absolute;left:7px;top:152.9px;width:0.6px;height:10.3px;background:#d8d8d8;"></div><div style="position:absolute;left:7px;top:156.9px;width:5px;height:0.6px;background:#c8c8c8;"></div><div style="position:absolute;left:16.5px;top:153.4px;font-family:'Liberation Sans',sans-serif;font-size:7.6px;line-height:1;color:#1a1c1e;white-space:nowrap;-webkit-text-stroke:0.15px #1a1c1e">Raksturlielumi</div><div style="position:absolute;left:67px;top:152.9px;width:21.5px;font-family:'Liberation Sans',sans-serif;font-size:7.6px;line-height:1;color:#1a1c1e;-webkit-text-stroke:0.05px #1a1c1e;text-align:right;">4</div><div style="position:absolute;left:7px;top:163.2px;width:0.6px;height:10.3px;background:#d8d8d8;"></div><div style="position:absolute;left:7px;top:167.2px;width:5px;height:0.6px;background:#c8c8c8;"></div><div style="position:absolute;left:16.5px;top:163.7px;font-family:'Liberation Sans',sans-serif;font-size:7.6px;line-height:1;color:#1a1c1e;white-space:nowrap;-webkit-text-stroke:0.15px #1a1c1e">Izšķirtspēja</div><div style="position:absolute;left:67px;top:163.2px;width:21.5px;font-family:'Liberation Sans',sans-serif;font-size:7.6px;line-height:1;color:#1a1c1e;-webkit-text-stroke:0.05px #1a1c1e;text-align:right;">5</div><div style="position:absolute;left:14px;top:172.5px;width:77px;height:10.3px;background:#f5f5f5;"></div><div style="position:absolute;left:7px;top:173.5px;width:0.6px;height:10.3px;background:#d8d8d8;"></div><div style="position:absolute;left:7px;top:177.5px;width:5px;height:0.6px;background:#c8c8c8;"></div><div style="position:absolute;left:16.5px;top:174.0px;font-family:'Liberation Sans',sans-serif;font-size:7.6px;line-height:1;color:#1a1c1e;white-space:nowrap;-webkit-text-stroke:0.15px #1a1c1e">Pikseļi</div><div style="position:absolute;left:67px;top:173.5px;width:21.5px;font-family:'Liberation Sans',sans-serif;font-size:7.6px;line-height:1;color:#1a1c1e;-webkit-text-stroke:0.05px #1a1c1e;text-align:right;">6</div><div style="position:absolute;left:7px;top:183.8px;width:0.6px;height:10.3px;background:#d8d8d8;"></div><div style="position:absolute;left:7px;top:187.8px;width:5px;height:0.6px;background:#c8c8c8;"></div><div style="position:absolute;left:16.5px;top:184.3px;font-family:'Liberation Sans',sans-serif;font-size:7.6px;line-height:1;color:#1a1c1e;white-space:nowrap;-webkit-text-stroke:0.15px #1a1c1e">Apertūra</div><div style="position:absolute;left:67px;top:183.8px;width:21.5px;font-family:'Liberation Sans',sans-serif;font-size:7.6px;line-height:1;color:#1a1c1e;-webkit-text-stroke:0.05px #1a1c1e;text-align:right;">7</div><div style="position:absolute;left:14px;top:193.10000000000002px;width:77px;height:10.3px;background:#f5f5f5;"></div><div style="position:absolute;left:7px;top:194.10000000000002px;width:0.6px;height:10.3px;background:#d8d8d8;"></div><div style="position:absolute;left:7px;top:198.10000000000002px;width:5px;height:0.6px;background:#c8c8c8;"></div><div style="position:absolute;left:16.5px;top:194.60000000000002px;font-family:'Liberation Sans',sans-serif;font-size:7.6px;line-height:1;color:#1a1c1e;white-space:nowrap;-webkit-text-stroke:0.15px #1a1c1e">Sensoru izšķirtsp...</div><div style="position:absolute;left:67px;top:194.10000000000002px;width:21.5px;font-family:'Liberation Sans',sans-serif;font-size:7.6px;line-height:1;color:#1a1c1e;-webkit-text-stroke:0.05px #1a1c1e;text-align:right;">8</div><div style="position:absolute;left:7px;top:204.4px;width:0.6px;height:10.3px;background:#d8d8d8;"></div><div style="position:absolute;left:7px;top:208.4px;width:5px;height:0.6px;background:#c8c8c8;"></div><div style="position:absolute;left:16.5px;top:204.9px;font-family:'Liberation Sans',sans-serif;font-size:7.6px;line-height:1;color:#1a1c1e;white-space:nowrap;-webkit-text-stroke:0.15px #1a1c1e">Jutība</div><div style="position:absolute;left:67px;top:204.4px;width:21.5px;font-family:'Liberation Sans',sans-serif;font-size:7.6px;line-height:1;color:#1a1c1e;-webkit-text-stroke:0.05px #1a1c1e;text-align:right;">9</div><div style="position:absolute;left:14px;top:213.7px;width:77px;height:10.3px;background:#f5f5f5;"></div><div style="position:absolute;left:7px;top:214.7px;width:0.6px;height:10.3px;background:#d8d8d8;"></div><div style="position:absolute;left:7px;top:218.7px;width:5px;height:0.6px;background:#c8c8c8;"></div><div style="position:absolute;left:16.5px;top:215.2px;font-family:'Liberation Sans',sans-serif;font-size:7.6px;line-height:1;color:#1a1c1e;white-space:nowrap;-webkit-text-stroke:0.15px #1a1c1e">Jutība un trokšņi</div><div style="position:absolute;left:67px;top:214.7px;width:21.5px;font-family:'Liberation Sans',sans-serif;font-size:7.6px;line-height:1;color:#1a1c1e;-webkit-text-stroke:0.05px #1a1c1e;text-align:right;">10</div><div style="position:absolute;left:7px;top:225.0px;width:0.6px;height:10.3px;background:#d8d8d8;"></div><div style="position:absolute;left:7px;top:229.0px;width:5px;height:0.6px;background:#c8c8c8;"></div><div style="position:absolute;left:16.5px;top:225.5px;font-family:'Liberation Sans',sans-serif;font-size:7.6px;line-height:1;color:#1a1c1e;white-space:nowrap;-webkit-text-stroke:0.15px #1a1c1e">Jutība un trokš...</div><div style="position:absolute;left:67px;top:225.0px;width:21.5px;font-family:'Liberation Sans',sans-serif;font-size:7.6px;line-height:1;color:#1a1c1e;-webkit-text-stroke:0.05px #1a1c1e;text-align:right;">11</div><div style="position:absolute;left:14px;top:234.3px;width:77px;height:10.3px;background:#f5f5f5;"></div><div style="position:absolute;left:7px;top:235.3px;width:0.6px;height:10.3px;background:#d8d8d8;"></div><div style="position:absolute;left:7px;top:239.3px;width:5px;height:0.6px;background:#c8c8c8;"></div><div style="position:absolute;left:16.5px;top:235.8px;font-family:'Liberation Sans',sans-serif;font-size:7.6px;line-height:1;color:#1a1c1e;white-space:nowrap;-webkit-text-stroke:0.15px #1a1c1e">Jutība un trokš...</div><div style="position:absolute;left:67px;top:235.3px;width:21.5px;font-family:'Liberation Sans',sans-serif;font-size:7.6px;line-height:1;color:#1a1c1e;-webkit-text-stroke:0.05px #1a1c1e;text-align:right;">12</div><div style="position:absolute;left:7px;top:245.60000000000002px;width:0.6px;height:10.3px;background:#d8d8d8;"></div><div style="position:absolute;left:7px;top:249.60000000000002px;width:5px;height:0.6px;background:#c8c8c8;"></div><div style="position:absolute;left:16.5px;top:246.10000000000002px;font-family:'Liberation Sans',sans-serif;font-size:7.6px;line-height:1;color:#1a1c1e;white-space:nowrap;-webkit-text-stroke:0.15px #1a1c1e">Jutība un trokš...</div><div style="position:absolute;left:67px;top:245.60000000000002px;width:21.5px;font-family:'Liberation Sans',sans-serif;font-size:7.6px;line-height:1;color:#1a1c1e;-webkit-text-stroke:0.05px #1a1c1e;text-align:right;">13</div><div style="position:absolute;left:14px;top:254.89999999999998px;width:77px;height:10.3px;background:#f5f5f5;"></div><div style="position:absolute;left:7px;top:255.89999999999998px;width:0.6px;height:10.3px;background:#d8d8d8;"></div><div style="position:absolute;left:7px;top:259.9px;width:5px;height:0.6px;background:#c8c8c8;"></div><div style="position:absolute;left:16.5px;top:256.4px;font-family:'Liberation Sans',sans-serif;font-size:7.6px;line-height:1;color:#1a1c1e;white-space:nowrap;-webkit-text-stroke:0.15px #1a1c1e">Fokusa attālu...</div><div style="position:absolute;left:67px;top:255.89999999999998px;width:21.5px;font-family:'Liberation Sans',sans-serif;font-size:7.6px;line-height:1;color:#1a1c1e;-webkit-text-stroke:0.05px #1a1c1e;text-align:right;">14</div><div style="position:absolute;left:7px;top:266.20000000000005px;width:0.6px;height:10.3px;background:#d8d8d8;"></div><div style="position:absolute;left:7px;top:270.20000000000005px;width:5px;height:0.6px;background:#c8c8c8;"></div><div style="position:absolute;left:16.5px;top:266.70000000000005px;font-family:'Liberation Sans',sans-serif;font-size:7.6px;line-height:1;color:#1a1c1e;white-space:nowrap;-webkit-text-stroke:0.15px #1a1c1e">Redzes leņķis</div><div style="position:absolute;left:67px;top:266.20000000000005px;width:21.5px;font-family:'Liberation Sans',sans-serif;font-size:7.6px;line-height:1;color:#1a1c1e;-webkit-text-stroke:0.05px #1a1c1e;text-align:right;">15</div><div style="position:absolute;left:14px;top:275.5px;width:77px;height:10.3px;background:#f5f5f5;"></div><div style="position:absolute;left:7px;top:276.5px;width:0.6px;height:10.3px;background:#d8d8d8;"></div><div style="position:absolute;left:7px;top:280.5px;width:5px;height:0.6px;background:#c8c8c8;"></div><div style="position:absolute;left:16.5px;top:277.0px;font-family:'Liberation Sans',sans-serif;font-size:7.6px;line-height:1;color:#1a1c1e;white-space:nowrap;-webkit-text-stroke:0.15px #1a1c1e">Optiskā tālum...</div><div style="position:absolute;left:67px;top:276.5px;width:21.5px;font-family:'Liberation Sans',sans-serif;font-size:7.6px;line-height:1;color:#1a1c1e;-webkit-text-stroke:0.05px #1a1c1e;text-align:right;">16</div><div style="position:absolute;left:7px;top:286.8px;width:0.6px;height:10.3px;background:#d8d8d8;"></div><div style="position:absolute;left:7px;top:290.8px;width:5px;height:0.6px;background:#c8c8c8;"></div><div style="position:absolute;left:16.5px;top:287.3px;font-family:'Liberation Sans',sans-serif;font-size:7.6px;line-height:1;color:#1a1c1e;white-space:nowrap;font-weight:bold;-webkit-text-stroke:0.15px #1a1c1e">Fokusa attālu...</div><div style="position:absolute;left:67px;top:286.8px;width:21.5px;font-family:'Liberation Sans',sans-serif;font-size:7.6px;line-height:1;color:#1a1c1e;-webkit-text-stroke:0.05px #1a1c1e;text-align:right;font-weight:bold;">17</div><div style="position:absolute;left:14px;top:296.1px;width:77px;height:10.3px;background:#f5f5f5;"></div><div style="position:absolute;left:7px;top:297.1px;width:0.6px;height:10.3px;background:#d8d8d8;"></div><div style="position:absolute;left:7px;top:301.1px;width:5px;height:0.6px;background:#c8c8c8;"></div><div style="position:absolute;left:16.5px;top:297.6px;font-family:'Liberation Sans',sans-serif;font-size:7.6px;line-height:1;color:#1a1c1e;white-space:nowrap;-webkit-text-stroke:0.15px #1a1c1e">Skrejruņi un pl...</div><div style="position:absolute;left:67px;top:297.1px;width:21.5px;font-family:'Liberation Sans',sans-serif;font-size:7.6px;line-height:1;color:#1a1c1e;-webkit-text-stroke:0.05px #1a1c1e;text-align:right;">18</div><div style="position:absolute;left:7px;top:307.4px;width:0.6px;height:10.3px;background:#d8d8d8;"></div><div style="position:absolute;left:7px;top:311.4px;width:5px;height:0.6px;background:#c8c8c8;"></div><div style="position:absolute;left:16.5px;top:307.9px;font-family:'Liberation Sans',sans-serif;font-size:7.6px;line-height:1;color:#1a1c1e;white-space:nowrap;-webkit-text-stroke:0.15px #1a1c1e">DigiObjektīvi</div><div style="position:absolute;left:67px;top:307.4px;width:21.5px;font-family:'Liberation Sans',sans-serif;font-size:7.6px;line-height:1;color:#1a1c1e;-webkit-text-stroke:0.05px #1a1c1e;text-align:right;">19</div><div style="position:absolute;left:101px;top:76px;width:5px;height:241px;background:#fcfcfc;"></div><div style="position:absolute;left:90.5px;top:119px;width:0.6px;height:194px;background:#e4e4e4;"></div><div style="position:absolute;left:80px;top:58px;width:26px;height:18px;background:#dbe8f4;"></div><svg style="position:absolute;left:85px;top:61px;" width="9" height="11" viewBox="0 0 9 11"><path d="M1 1.5H8 M3 4.5H8 M3 7.5H8 M1 10H6" stroke="#232629" stroke-width="0.9"/></svg><div style="position:absolute;left:106px;top:58px;width:295px;height:259px;background:#8a9099;"></div><div style="position:absolute;left:389.6px;top:58px;width:11.399999999999977px;height:259px;background:#fcfcfc;"></div><div style="position:absolute;left:106px;top:61.3px;width:284px;height:178px;background:#000"></div><div style="position:absolute;left:107px;top:62.3px;"><div style="position:absolute;left:0px;top:0px;width:282px;height:176px;background:#fff;overflow:hidden"><div style="position:absolute;left:3px;top:0.8px;font-family:'Liberation Serif',serif;font-size:3.4px;line-height:1;color:#111;white-space:nowrap;">Fotografēšanas pamati</div><div style="position:absolute;left:262px;top:0.8px;font-family:'Liberation Serif',serif;font-size:3.4px;line-height:1;color:#111;white-space:nowrap;">25.06.2021</div><div style="position:absolute;left:4px;top:11.4px;width:201px;height:150px;background:#dcdcdc;"></div><div style="position:absolute;left:35.5px;top:18px;font-family:'Liberation Sans',sans-serif;font-size:10.8px;line-height:1;color:#222;white-space:nowrap;font-weight:bold;transform-origin:0 0;transform:scaleX(0.955);text-shadow:0.6px 0.6px 0 #fff;-webkit-text-stroke:0.3px #222">Fokusa attālums un redzes leņķis</div><svg style="position:absolute;left:0;top:0" width="100" height="176" viewBox="0 0 100 176"><path d="M44 55 L57.4 49.5 M45 72 L57.4 68 M42 78 L57.4 87.5 M44 101 L57.4 91.5 M45 118 L57.4 113 M42 124 L57.4 130" stroke="#8aa" stroke-width="0.5" fill="none"/></svg><div style="position:absolute;left:13px;top:45.5px;font-family:'Liberation Sans',sans-serif;font-size:3px;line-height:1;color:#333;white-space:nowrap;">(1) 35 mm</div><div style="position:absolute;left:14.8px;top:46.5px;width:36.4px;height:36.4px;border-radius:50%;background:#fff;"></div><div style="position:absolute;left:15.8px;top:47.5px;width:34.4px;height:34.4px;border-radius:50%;background:#3d4246;overflow:hidden"><div style="position:absolute;left:4.816px;top:8.6px;width:24.767999999999997px;height:16.34px;background:#f4f4f4;border:1px solid #c33;box-sizing:border-box;overflow:hidden"><div style="position:absolute;left:1.5px;top:1.5px;width:21.767999999999997px;height:13.34px;background:#bfe0f0;overflow:hidden"><svg width="21.767999999999997" height="13.34" viewBox="0 0 21.767999999999997 13.34" style="position:absolute;left:0;top:0"><circle cx="9.123119999999998" cy="5.336" r="1.6141400000000001" fill="#f39a1e"/><circle cx="12.644879999999999" cy="5.336" r="1.6141400000000001" fill="#f39a1e"/><circle cx="10.883999999999999" cy="3.57512" r="1.6141400000000001" fill="#f5a623"/><circle cx="10.883999999999999" cy="7.0968800000000005" r="1.6141400000000001" fill="#e8801a"/><circle cx="10.883999999999999" cy="5.336" r="1.02718" fill="#c0392b"/><rect x="10.230959999999998" y="7.337000000000001" width="1.3060799999999997" height="4.002" fill="#2e8b3e"/><ellipse cx="13.060799999999999" cy="9.6048" rx="2.1767999999999996" ry="0.8004" fill="#3aa04a"/></svg></div></div><div style="position:absolute;left:14.62px;top:24.939999999999998px;width:5.159999999999999px;height:3.44px;background:#111"></div></div><div style="position:absolute;left:17.5px;top:86px;font-family:'Liberation Sans',sans-serif;font-size:2.6px;line-height:1;color:#333;white-space:nowrap;">(-1,6 × 100 × 0 × 100 mm)</div><div style="position:absolute;left:14.8px;top:92.6px;width:36.4px;height:36.4px;border-radius:50%;background:#fff;"></div><div style="position:absolute;left:15.8px;top:93.6px;width:34.4px;height:34.4px;border-radius:50%;background:#3d4246;overflow:hidden"><div style="position:absolute;left:4.816px;top:8.6px;width:24.767999999999997px;height:16.34px;background:#f4f4f4;border:1px solid #c33;box-sizing:border-box;overflow:hidden"><div style="position:absolute;left:1.5px;top:1.5px;width:21.767999999999997px;height:13.34px;background:#bfe0f0;overflow:hidden"><svg width="21.767999999999997" height="13.34" viewBox="0 0 21.767999999999997 13.34" style="position:absolute;left:0;top:0"><circle cx="5.249759999999999" cy="4.669" r="1.17392" fill="#f39a1e"/><circle cx="7.811039999999999" cy="4.669" r="1.17392" fill="#f39a1e"/><circle cx="6.530399999999999" cy="3.3883599999999996" r="1.17392" fill="#f5a623"/><circle cx="6.530399999999999" cy="5.94964" r="1.17392" fill="#e8801a"/><circle cx="6.530399999999999" cy="4.669" r="0.7470399999999999" fill="#c0392b"/><circle cx="12.868559999999999" cy="4.002" r="1.17392" fill="#f39a1e"/><circle cx="15.429839999999999" cy="4.002" r="1.17392" fill="#f39a1e"/><circle cx="14.149199999999999" cy="2.72136" r="1.17392" fill="#f5a623"/><circle cx="14.149199999999999" cy="5.28264" r="1.17392" fill="#e8801a"/><circle cx="14.149199999999999" cy="4.002" r="0.7470399999999999" fill="#c0392b"/><circle cx="9.603359999999999" cy="8.004" r="1.17392" fill="#f39a1e"/><circle cx="12.164639999999999" cy="8.004" r="1.17392" fill="#f39a1e"/><circle cx="10.883999999999999" cy="6.72336" r="1.17392" fill="#f5a623"/><circle cx="10.883999999999999" cy="9.28464" r="1.17392" fill="#e8801a"/><circle cx="10.883999999999999" cy="8.004" r="0.7470399999999999" fill="#c0392b"/><circle cx="3.0729599999999992" cy="9.338" r="1.17392" fill="#f39a1e"/><circle cx="5.634239999999999" cy="9.338" r="1.17392" fill="#f39a1e"/><circle cx="4.353599999999999" cy="8.05736" r="1.17392" fill="#f5a623"/><circle cx="4.353599999999999" cy="10.61864" r="1.17392" fill="#e8801a"/><circle cx="4.353599999999999" cy="9.338" r="0.7470399999999999" fill="#c0392b"/><circle cx="16.13376" cy="8.671" r="1.17392" fill="#f39a1e"/><circle cx="18.695039999999995" cy="8.671" r="1.17392" fill="#f39a1e"/><circle cx="17.414399999999997" cy="7.390359999999999" r="1.17392" fill="#f5a623"/><circle cx="17.414399999999997" cy="9.95164" r="1.17392" fill="#e8801a"/><circle cx="17.414399999999997" cy="8.671" r="0.7470399999999999" fill="#c0392b"/></svg></div></div><div style="position:absolute;left:10.319999999999999px;top:24.939999999999998px;width:15.48px;height:8.6px;background:#111;border-radius:2px"></div></div><div style="position:absolute;left:12px;top:91.5px;font-family:'Liberation Sans',sans-serif;font-size:3px;line-height:1;color:#333;white-space:nowrap;">(2) 7 %</div><div style="position:absolute;left:57.4px;top:49.1px;width:24.4px;height:19.1px;background:#d4eaf4;border:0.8px solid #c66;box-sizing:border-box;overflow:hidden"><svg width="24.4" height="19.1" viewBox="0 0 24.4 19.1" style="position:absolute;left:0;top:0"><circle cx="9.678799999999999" cy="7.640000000000001" r="2.3111" fill="#f39a1e"/><circle cx="14.7212" cy="7.640000000000001" r="2.3111" fill="#f39a1e"/><circle cx="12.2" cy="5.1188" r="2.3111" fill="#f5a623"/><circle cx="12.2" cy="10.161200000000001" r="2.3111" fill="#e8801a"/><circle cx="12.2" cy="7.640000000000001" r="1.4707" fill="#c0392b"/><rect x="11.467999999999998" y="10.505" width="1.464" height="5.73" fill="#2e8b3e"/><ellipse cx="14.639999999999999" cy="13.752" rx="2.44" ry="1.1460000000000001" fill="#3aa04a"/></svg><div style="position:absolute;left:3.6599999999999997px;top:15.900000000000002px;width:17.08px;height:1.8px;background:#d23;"></div></div><div style="position:absolute;left:57.4px;top:71.9px;width:14.4px;height:15.6px;background:#d4eaf4;border:0.8px solid #36c;box-sizing:border-box;overflow:hidden"><svg width="14.4" height="15.6" viewBox="0 0 14.4 15.6" style="position:absolute;left:0;top:0"><circle cx="5.2992" cy="6.24" r="1.7424000000000002" fill="#f39a1e"/><circle cx="9.1008" cy="6.24" r="1.7424000000000002" fill="#f39a1e"/><circle cx="7.2" cy="4.3392" r="1.7424000000000002" fill="#f5a623"/><circle cx="7.2" cy="8.1408" r="1.7424000000000002" fill="#e8801a"/><circle cx="7.2" cy="6.24" r="1.1088" fill="#c0392b"/><rect x="6.768" y="8.58" width="0.864" height="4.68" fill="#2e8b3e"/><ellipse cx="8.64" cy="11.232" rx="1.4400000000000002" ry="0.9359999999999999" fill="#3aa04a"/></svg><div style="position:absolute;left:2.16px;top:12.399999999999999px;width:10.08px;height:1.8px;background:#d23;"></div></div><div style="position:absolute;left:57.4px;top:90.9px;width:24.4px;height:22.1px;background:#d4eaf4;border:0.8px solid #c66;box-sizing:border-box;overflow:hidden"><svg width="24.4" height="22.1" viewBox="0 0 24.4 22.1" style="position:absolute;left:0;top:0"><circle cx="5.1983999999999995" cy="7.735" r="1.9448000000000005" fill="#f39a1e"/><circle cx="9.4416" cy="7.735" r="1.9448000000000005" fill="#f39a1e"/><circle cx="7.319999999999999" cy="5.6134" r="1.9448000000000005" fill="#f5a623"/><circle cx="7.319999999999999" cy="9.8566" r="1.9448000000000005" fill="#e8801a"/><circle cx="7.319999999999999" cy="7.735" r="1.2376" fill="#c0392b"/><circle cx="13.738399999999999" cy="6.63" r="1.9448000000000005" fill="#f39a1e"/><circle cx="17.9816" cy="6.63" r="1.9448000000000005" fill="#f39a1e"/><circle cx="15.86" cy="4.5084" r="1.9448000000000005" fill="#f5a623"/><circle cx="15.86" cy="8.7516" r="1.9448000000000005" fill="#e8801a"/><circle cx="15.86" cy="6.63" r="1.2376" fill="#c0392b"/><circle cx="10.078399999999998" cy="13.26" r="1.9448000000000005" fill="#f39a1e"/><circle cx="14.3216" cy="13.26" r="1.9448000000000005" fill="#f39a1e"/><circle cx="12.2" cy="11.138399999999999" r="1.9448000000000005" fill="#f5a623"/><circle cx="12.2" cy="15.3816" r="1.9448000000000005" fill="#e8801a"/><circle cx="12.2" cy="13.26" r="1.2376" fill="#c0392b"/><circle cx="2.7583999999999995" cy="15.47" r="1.9448000000000005" fill="#f39a1e"/><circle cx="7.0016" cy="15.47" r="1.9448000000000005" fill="#f39a1e"/><circle cx="4.88" cy="13.3484" r="1.9448000000000005" fill="#f5a623"/><circle cx="4.88" cy="17.5916" r="1.9448000000000005" fill="#e8801a"/><circle cx="4.88" cy="15.47" r="1.2376" fill="#c0392b"/><circle cx="17.3984" cy="14.365000000000002" r="1.9448000000000005" fill="#f39a1e"/><circle cx="21.6416" cy="14.365000000000002" r="1.9448000000000005" fill="#f39a1e"/><circle cx="19.52" cy="12.243400000000001" r="1.9448000000000005" fill="#f5a623"/><circle cx="19.52" cy="16.486600000000003" r="1.9448000000000005" fill="#e8801a"/><circle cx="19.52" cy="14.365000000000002" r="1.2376" fill="#c0392b"/></svg><div style="position:absolute;left:3.6599999999999997px;top:18.900000000000002px;width:17.08px;height:1.8px;background:#d23;"></div></div><div style="position:absolute;left:57.4px;top:115.2px;width:14.4px;height:15.5px;background:#d4eaf4;border:0.8px solid #36c;box-sizing:border-box;overflow:hidden"><svg width="14.4" height="15.5" viewBox="0 0 14.4 15.5" style="position:absolute;left:0;top:0"><circle cx="2.9376" cy="5.425" r="1.2672000000000003" fill="#f39a1e"/><circle cx="5.702400000000001" cy="5.425" r="1.2672000000000003" fill="#f39a1e"/><circle cx="4.32" cy="4.0426" r="1.2672000000000003" fill="#f5a623"/><circle cx="4.32" cy="6.8073999999999995" r="1.2672000000000003" fill="#e8801a"/><circle cx="4.32" cy="5.425" r="0.8064" fill="#c0392b"/><circle cx="7.977600000000001" cy="4.6499999999999995" r="1.2672000000000003" fill="#f39a1e"/><circle cx="10.742400000000002" cy="4.6499999999999995" r="1.2672000000000003" fill="#f39a1e"/><circle cx="9.360000000000001" cy="3.2675999999999994" r="1.2672000000000003" fill="#f5a623"/><circle cx="9.360000000000001" cy="6.032399999999999" r="1.2672000000000003" fill="#e8801a"/><circle cx="9.360000000000001" cy="4.6499999999999995" r="0.8064" fill="#c0392b"/><circle cx="5.8176000000000005" cy="9.299999999999999" r="1.2672000000000003" fill="#f39a1e"/><circle cx="8.5824" cy="9.299999999999999" r="1.2672000000000003" fill="#f39a1e"/><circle cx="7.2" cy="7.917599999999998" r="1.2672000000000003" fill="#f5a623"/><circle cx="7.2" cy="10.6824" r="1.2672000000000003" fill="#e8801a"/><circle cx="7.2" cy="9.299999999999999" r="0.8064" fill="#c0392b"/><circle cx="1.4976000000000003" cy="10.85" r="1.2672000000000003" fill="#f39a1e"/><circle cx="4.2624" cy="10.85" r="1.2672000000000003" fill="#f39a1e"/><circle cx="2.8800000000000003" cy="9.4676" r="1.2672000000000003" fill="#f5a623"/><circle cx="2.8800000000000003" cy="12.2324" r="1.2672000000000003" fill="#e8801a"/><circle cx="2.8800000000000003" cy="10.85" r="0.8064" fill="#c0392b"/><circle cx="10.1376" cy="10.075000000000001" r="1.2672000000000003" fill="#f39a1e"/><circle cx="12.902400000000002" cy="10.075000000000001" r="1.2672000000000003" fill="#f39a1e"/><circle cx="11.520000000000001" cy="8.6926" r="1.2672000000000003" fill="#f5a623"/><circle cx="11.520000000000001" cy="11.457400000000002" r="1.2672000000000003" fill="#e8801a"/><circle cx="11.520000000000001" cy="10.075000000000001" r="0.8064" fill="#c0392b"/></svg><div style="position:absolute;left:2.16px;top:12.3px;width:10.08px;height:1.8px;background:#d23;"></div></div><div style="position:absolute;left:107px;top:47.0px;font-family:'Liberation Serif',serif;font-size:6.6px;line-height:1;color:#000;white-space:nowrap;-webkit-text-stroke:0.1px #000">Parastajām 35 mm fotokamerām</div><div style="position:absolute;left:107px;top:54.5px;font-family:'Liberation Serif',serif;font-size:6.6px;line-height:1;color:#000;white-space:nowrap;-webkit-text-stroke:0.1px #000">platleņķa objektīvi ir &lt; 40 mm, bet</div><div style="position:absolute;left:107px;top:62.0px;font-family:'Liberation Serif',serif;font-size:6.6px;line-height:1;color:#000;white-space:nowrap;-webkit-text-stroke:0.1px #000">teleobjektīvi &gt; 70 mm.</div><div style="position:absolute;left:107px;top:72.0px;font-family:'Liberation Serif',serif;font-size:6.6px;line-height:1;color:#000;white-space:nowrap;-webkit-text-stroke:0.1px #000">Digitālām fotokamerām var</div><div style="position:absolute;left:107px;top:79.5px;font-family:'Liberation Serif',serif;font-size:6.6px;line-height:1;color:#000;white-space:nowrap;-webkit-text-stroke:0.1px #000">atšķirties matricas izmēri (attēla</div><div style="position:absolute;left:107px;top:87.0px;font-family:'Liberation Serif',serif;font-size:6.6px;line-height:1;color:#000;white-space:nowrap;-webkit-text-stroke:0.1px #000">reģistrējošais laukums).</div><div style="position:absolute;left:101.2px;top:49.3px;width:2.6px;height:2.6px;background:#111;border-radius:50%"></div><div style="position:absolute;left:101.2px;top:74.2px;width:2.6px;height:2.6px;background:#111;border-radius:50%"></div><div style="position:absolute;left:207.5px;top:13.0px;font-family:'Liberation Sans',sans-serif;font-size:4.8px;line-height:1;color:#222;white-space:nowrap;">&nbsp;&nbsp;&nbsp;Pilna matrica atbilst 35 mm</div><div style="position:absolute;left:207.5px;top:18.2px;font-family:'Liberation Sans',sans-serif;font-size:4.8px;line-height:1;color:#222;white-space:nowrap;">fotofilmiņas pilnam kadram (24 ×</div><div style="position:absolute;left:207.5px;top:23.4px;font-family:'Liberation Sans',sans-serif;font-size:4.8px;line-height:1;color:#222;white-space:nowrap;">36 mm). Turpretī, runājot par</div><div style="position:absolute;left:207.5px;top:28.6px;font-family:'Liberation Sans',sans-serif;font-size:4.8px;line-height:1;color:#222;white-space:nowrap;">fokusa attālumu, ekvivalentais</div><div style="position:absolute;left:207.5px;top:33.8px;font-family:'Liberation Sans',sans-serif;font-size:4.8px;line-height:1;color:#222;white-space:nowrap;">fokusa attālums 35 mm</div><div style="position:absolute;left:207.5px;top:39.0px;font-family:'Liberation Sans',sans-serif;font-size:4.8px;line-height:1;color:#222;white-space:nowrap;">fotokameras objektīvam.</div><div style="position:absolute;left:207.5px;top:46.0px;font-family:'Liberation Sans',sans-serif;font-size:4.8px;line-height:1;color:#222;white-space:nowrap;">&nbsp;&nbsp;&nbsp;Augstas kvalitātes matricu</div><div style="position:absolute;left:207.5px;top:51.2px;font-family:'Liberation Sans',sans-serif;font-size:4.8px;line-height:1;color:#222;white-space:nowrap;">fotoaparātiem (piemēram, Nikon</div><div style="position:absolute;left:207.5px;top:56.4px;font-family:'Liberation Sans',sans-serif;font-size:4.8px;line-height:1;color:#222;white-space:nowrap;">D3x), tipiski sensora izmēri ir no</div><div style="position:absolute;left:207.5px;top:61.6px;font-family:'Liberation Sans',sans-serif;font-size:4.8px;line-height:1;color:#222;white-space:nowrap;">4 × 5, 4 × 7 un 8 × 8 cm. Tās</div><div style="position:absolute;left:207.5px;top:66.8px;font-family:'Liberation Sans',sans-serif;font-size:4.8px;line-height:1;color:#222;white-space:nowrap;">tajā ir fotomatricas digitālās</div><div style="position:absolute;left:207.5px;top:72.0px;font-family:'Liberation Sans',sans-serif;font-size:4.8px;line-height:1;color:#222;white-space:nowrap;">kameras, piemēram, pie</div><div style="position:absolute;left:207.5px;top:77.2px;font-family:'Liberation Sans',sans-serif;font-size:4.8px;line-height:1;color:#222;white-space:nowrap;">23%, ņemot matricas izmēru</div><div style="position:absolute;left:207.5px;top:82.4px;font-family:'Liberation Sans',sans-serif;font-size:4.8px;line-height:1;color:#222;white-space:nowrap;">"Nikon 1 DX" kameras ar</div><div style="position:absolute;left:207.5px;top:87.6px;font-family:'Liberation Sans',sans-serif;font-size:4.8px;line-height:1;color:#222;white-space:nowrap;">fokusa attālumu 32,8 × 23,9 mm</div><div style="position:absolute;left:207.5px;top:92.80000000000001px;font-family:'Liberation Sans',sans-serif;font-size:4.8px;line-height:1;color:#222;white-space:nowrap;">sensoru.</div><div style="position:absolute;left:5px;top:156.3px;width:6.5px;height:5.5px;border:0.9px solid #222;border-radius:50%;box-sizing:border-box;background:#fff"></div><div style="position:absolute;left:6.3px;top:157.6px;font-family:'Liberation Sans',sans-serif;font-size:2.6px;line-height:1;color:#222;white-space:nowrap;font-weight:bold">cc</div><div style="position:absolute;left:12.5px;top:157.2px;font-family:'Liberation Sans',sans-serif;font-size:3px;line-height:1;color:#333;white-space:nowrap;font-weight:bold">BY SA</div><div style="position:absolute;left:116px;top:158.6px;width:88px;height:1.6px;background:#888;"></div><div style="position:absolute;left:3px;top:172.3px;font-family:'Liberation Serif',serif;font-size:3.4px;line-height:1;color:#111;white-space:nowrap;">27 (27) · Tekā: Kārlis Kalviškis</div></div></div><div style="position:absolute;left:106px;top:244.3px;width:284px;height:178px;background:#000"></div><div style="position:absolute;left:107px;top:245.3px;"><div style="position:absolute;left:0px;top:0px;width:282px;height:176px;background:#fff;overflow:hidden"><div style="position:absolute;left:3px;top:0.8px;font-family:'Liberation Serif',serif;font-size:3.4px;line-height:1;color:#111;white-space:nowrap;">Fotografēšanas pamati</div><div style="position:absolute;left:262px;top:0.8px;font-family:'Liberation Serif',serif;font-size:3.4px;line-height:1;color:#111;white-space:nowrap;">25.06.2021</div><div style="position:absolute;left:4px;top:11.2px;width:201px;height:150px;background:#dcdcdc;"></div><div style="position:absolute;left:35.5px;top:18px;font-family:'Liberation Sans',sans-serif;font-size:10.8px;line-height:1;color:#222;white-space:nowrap;font-weight:bold;transform-origin:0 0;transform:scaleX(0.955);text-shadow:0.6px 0.6px 0 #fff;-webkit-text-stroke:0.3px #222">Fokusa attālums un redzes leņķis</div><div style="position:absolute;left:18.2px;top:49.7px;width:2.6px;height:2.6px;background:#111;border-radius:50%"></div><div style="position:absolute;left:25px;top:46.5px;font-family:'Liberation Serif',serif;font-size:6.6px;line-height:1;color:#000;white-space:nowrap;-webkit-text-stroke:0.05px #000">Ja attēla reģistrējošais laukums mazāks, objektīvs „kļūst” garāks</div><div style="position:absolute;left:25px;top:54.0px;font-family:'Liberation Serif',serif;font-size:6.6px;line-height:1;color:#000;white-space:nowrap;-webkit-text-stroke:0.05px #000">un otrādi. Piemēram, „iPhone 6” lielākais sensors ir</div><div style="position:absolute;left:25px;top:61.5px;font-family:'Liberation Serif',serif;font-size:6.6px;line-height:1;color:#000;white-space:nowrap;-webkit-text-stroke:0.05px #000">4,89 × 3,67 mm. Šādam izmēram 4,7 mm objektīvs atbilst 35 mm</div><div style="position:absolute;left:25px;top:69.0px;font-family:'Liberation Serif',serif;font-size:6.6px;line-height:1;color:#000;white-space:nowrap;-webkit-text-stroke:0.05px #000">filmu kameras 29 mm objektīvam.</div><svg style="position:absolute;left:212px;top:10px;width:72px;height:40px;" width="72" height="40" viewBox="0 0 72 40"><path d="M2.5 25.4 L52.6 25.4 L52.6 3 Z" fill="none" stroke="#111" stroke-width="0.9"/><rect x="46" y="17.5" width="6.6" height="7.9" fill="none" stroke="#111" stroke-width="0.8"/><path d="M33.5 25.4 A24 24 0 0 0 31.8 15.5" fill="none" stroke="#111" stroke-width="0.7"/><text x="24.5" y="24.3" font-size="9" font-family="Liberation Sans" fill="#111">α</text><text x="56" y="15.5" font-size="6.5" font-family="Liberation Sans" font-weight="bold" fill="#111">a</text><text x="30.5" y="34" font-size="7" font-family="Liberation Sans" font-weight="bold" fill="#111">f</text></svg><div style="position:absolute;left:213.5px;top:48.0px;font-family:'Liberation Serif',serif;font-size:5.3px;line-height:1;color:#111;white-space:nowrap;">α = redzes leņķis.</div><div style="position:absolute;left:213.5px;top:55.1px;font-family:'Liberation Serif',serif;font-size:5.3px;line-height:1;color:#111;white-space:nowrap;">a₁ a₂ – matricas izmēri.</div><div style="position:absolute;left:213.5px;top:62.2px;font-family:'Liberation Serif',serif;font-size:5.3px;line-height:1;color:#111;white-space:nowrap;">f₁ f₂ – fokusa attālumi.</div><div style="position:absolute;left:213.5px;top:69.3px;font-family:'Liberation Serif',serif;font-size:5.3px;line-height:1;color:#111;white-space:nowrap;">α₁ α₂ – ...</div></div></div><div style="position:absolute;left:0px;top:0px;width:401px;height:317px;border:1px solid #b4b4b4;box-sizing:border-box;box-shadow:1px 1px 4px rgba(0,0,0,0.3)"></div></div></div><svg style="position:absolute;left:379px;top:150px;" width="9" height="11" viewBox="0 0 9 11"><path d="M0.5 0.5 H6 L8.5 3 V10.5 H0.5Z" fill="#f4f4f4" stroke="#bbb" stroke-width="0.5"/><rect x="2" y="1.5" width="3.5" height="2" fill="#3aa0c8"/><rect x="2" y="4.5" width="5" height="4.5" fill="#2a78c8"/><path d="M2.5 8.5 L4.5 6 L6.5 8.5Z" fill="#9ad0f0"/></svg><div style="position:absolute;left:391.7px;top:152.5px;font-family:'Liberation Sans',sans-serif;font-size:6.2px;line-height:1;color:#fff;white-space:nowrap;-webkit-text-stroke:0.2px #fff">Documents</div><div style="position:absolute;left:376px;top:163px;width:162px;height:118px;background:#111;"></div><div style="position:absolute;left:377px;top:164px;transform-origin:0 0;transform:scale(0.332,0.33)"><div style="position:absolute;left:0px;top:0px;width:482px;height:352px;background:#fff;overflow:hidden"><svg style="position:absolute;left:5px;top:3px;" width="50" height="10" viewBox="0 0 50 10"><rect x="0.5" y="0.5" width="6" height="8.5" fill="#e8eef6" stroke="#8a9ab0" stroke-width="0.6"/><path d="M2 3 H5 M2 5 H5" stroke="#3a7ad0" stroke-width="0.8"/><path d="M11.5 1 V9" stroke="#bbb" stroke-width="0.6"/><rect x="16.5" y="0.5" width="6.5" height="8.5" fill="#fff" stroke="#888" stroke-width="0.6"/><path d="M17.5 5.5 L19.3 7 L22 3.5" stroke="#d33" stroke-width="0.8" fill="none"/><rect x="28.7" y="0.5" width="6.5" height="8.5" fill="#fbe38a" stroke="#e0b040" stroke-width="0.5"/><path d="M38.5 4.5 L42.5 4.5 L40.5 7Z" fill="#222"/><path d="M38.5 3.3 H42.5" stroke="#222" stroke-width="0.6"/><path d="M48 1 V9" stroke="#bbb" stroke-width="0.6"/></svg><div style="position:absolute;left:57px;top:4px;font-family:'Liberation Sans',sans-serif;font-size:7.2px;line-height:1;color:#9a9a9a;white-space:nowrap;">Documents</div><svg style="position:absolute;left:419.5px;top:4px;" width="6" height="6" viewBox="0 0 6 6"><path d="M0.3 3 H5.7" stroke="#777" stroke-width="0.6"/></svg><svg style="position:absolute;left:442.7px;top:4px;" width="6" height="6" viewBox="0 0 6 6"><rect x="0.4" y="0.4" width="5.2" height="5.2" fill="none" stroke="#777" stroke-width="0.6"/></svg><svg style="position:absolute;left:466.7px;top:4px;" width="6" height="6" viewBox="0 0 6 6"><path d="M0.3 0.3 L5.7 5.7 M5.7 0.3 L0.3 5.7" stroke="#777" stroke-width="0.6"/></svg><div style="position:absolute;left:0px;top:16.3px;width:29.5px;height:11.5px;background:#1b63b3;"></div><div style="position:absolute;left:9px;top:19.5px;font-family:'Liberation Sans',sans-serif;font-size:5.8px;line-height:1;color:#fff;white-space:nowrap;-webkit-text-stroke:0.15px #fff">File</div><div style="position:absolute;left:37px;top:19.5px;font-family:'Liberation Sans',sans-serif;font-size:5.8px;line-height:1;color:#111;white-space:nowrap;-webkit-text-stroke:0.15px #111">Home</div><div style="position:absolute;left:67.5px;top:19.5px;font-family:'Liberation Sans',sans-serif;font-size:5.8px;line-height:1;color:#111;white-space:nowrap;-webkit-text-stroke:0.15px #111">Share</div><div style="position:absolute;left:97.5px;top:19.5px;font-family:'Liberation Sans',sans-serif;font-size:5.8px;line-height:1;color:#111;white-space:nowrap;-webkit-text-stroke:0.15px #111">View</div><svg style="position:absolute;left:460.5px;top:20px;" width="6" height="4" viewBox="0 0 6 4"><path d="M0.5 0.5 L3 3 L5.5 0.5" stroke="#666" stroke-width="0.6" fill="none"/></svg><svg style="position:absolute;left:471px;top:16px;" width="11" height="11" viewBox="0 0 11 11"><circle cx="5.5" cy="5.5" r="5" fill="#1d52b0"/><text x="5.5" y="8.5" font-size="8" font-weight="bold" font-family="Liberation Sans" fill="#fff" text-anchor="middle">?</text></svg><div style="position:absolute;left:0px;top:28px;width:482px;height:1px;background:#e3e3e3;"></div><svg style="position:absolute;left:6.5px;top:33.5px;" width="9" height="8" viewBox="0 0 9 8"><path d="M8.5 4 H1 M4 0.8 L0.8 4 L4 7.2" stroke="#555" stroke-width="0.9" fill="none"/></svg><svg style="position:absolute;left:18px;top:33px;" width="30" height="8" viewBox="0 0 30 8"><path d="M0.5 4 H8 M5 1 L8 4 L5 7" stroke="#aaa" stroke-width="0.8" fill="none"/><path d="M14 5 L17 2 L20 5" stroke="#555" stroke-width="0.8" fill="none"/></svg><div style="position:absolute;left:50px;top:30px;width:346px;height:13px;border:1px solid #d9d9d9;box-sizing:border-box"></div><div style="position:absolute;left:54px;top:33px;width:6px;height:7px;background:#3a8ad8;"></div><div style="position:absolute;left:64px;top:33.5px;font-family:'Liberation Sans',sans-serif;font-size:5.8px;line-height:1;color:#222;white-space:nowrap;">› &nbsp;User &nbsp;› &nbsp;Documents</div><div style="position:absolute;left:380px;top:33.5px;font-family:'Liberation Sans',sans-serif;font-size:5.8px;line-height:1;color:#666;white-space:nowrap;">⌄ ↻</div><div style="position:absolute;left:399px;top:30px;width:77px;height:13px;border:1px solid #d9d9d9;box-sizing:border-box"></div><div style="position:absolute;left:409px;top:34px;font-family:'Liberation Sans',sans-serif;font-size:6.6px;line-height:1;color:#6d6d6d;white-space:nowrap;">Search Docum...</div><svg style="position:absolute;left:464px;top:34px;" width="7" height="7" viewBox="0 0 7 7"><circle cx="4.2" cy="2.8" r="2" fill="none" stroke="#333" stroke-width="0.8"/><path d="M2.7 4.3 L0.7 6.3" stroke="#333" stroke-width="0.9"/></svg><div style="position:absolute;left:14px;top:59px;width:7px;height:6px;background:#3a8ad8;"></div><div style="position:absolute;left:26px;top:59px;font-family:'Liberation Sans',sans-serif;font-size:5.8px;line-height:1;color:#222;white-space:nowrap;">Quick access</div><div style="position:absolute;left:14px;top:69px;width:7px;height:6px;background:#3a8ad8;"></div><div style="position:absolute;left:26px;top:69px;font-family:'Liberation Sans',sans-serif;font-size:5.8px;line-height:1;color:#222;white-space:nowrap;">Desktop</div><div style="position:absolute;left:103px;top:69px;font-family:'Liberation Sans',sans-serif;font-size:5px;line-height:1;color:#888;white-space:nowrap;">✓</div><div style="position:absolute;left:14px;top:82px;width:7px;height:6px;background:#3a8ad8;"></div><div style="position:absolute;left:26px;top:82px;font-family:'Liberation Sans',sans-serif;font-size:5.8px;line-height:1;color:#222;white-space:nowrap;">Downloads</div><div style="position:absolute;left:103px;top:82px;font-family:'Liberation Sans',sans-serif;font-size:5px;line-height:1;color:#888;white-space:nowrap;">✓</div><div style="position:absolute;left:14px;top:94px;width:7px;height:6px;background:#7a8a9a;"></div><div style="position:absolute;left:26px;top:94px;font-family:'Liberation Sans',sans-serif;font-size:5.8px;line-height:1;color:#222;white-space:nowrap;">Documents</div><div style="position:absolute;left:103px;top:94px;font-family:'Liberation Sans',sans-serif;font-size:5px;line-height:1;color:#888;white-space:nowrap;">✓</div><div style="position:absolute;left:14px;top:107px;width:7px;height:6px;background:#5a7aa8;"></div><div style="position:absolute;left:26px;top:107px;font-family:'Liberation Sans',sans-serif;font-size:5.8px;line-height:1;color:#222;white-space:nowrap;">Pictures</div><div style="position:absolute;left:103px;top:107px;font-family:'Liberation Sans',sans-serif;font-size:5px;line-height:1;color:#888;white-space:nowrap;">✓</div><div style="position:absolute;left:14px;top:124px;width:7px;height:6px;background:#3a8ad8;"></div><div style="position:absolute;left:26px;top:124px;font-family:'Liberation Sans',sans-serif;font-size:5.8px;line-height:1;color:#222;white-space:nowrap;">OneDrive</div><div style="position:absolute;left:14px;top:141px;width:7px;height:6px;background:#3a8ad8;"></div><div style="position:absolute;left:26px;top:141px;font-family:'Liberation Sans',sans-serif;font-size:5.8px;line-height:1;color:#222;white-space:nowrap;">OneDrive - Personal</div><div style="position:absolute;left:14px;top:158px;width:7px;height:6px;background:#888;"></div><div style="position:absolute;left:26px;top:158px;font-family:'Liberation Sans',sans-serif;font-size:5.8px;line-height:1;color:#222;white-space:nowrap;">User</div><div style="position:absolute;left:14px;top:169px;width:7px;height:6px;background:#5ab0e8;"></div><div style="position:absolute;left:26px;top:169px;font-family:'Liberation Sans',sans-serif;font-size:5.8px;line-height:1;color:#222;white-space:nowrap;">3D Objects</div><div style="position:absolute;left:14px;top:181px;width:7px;height:6px;background:#f0c040;"></div><div style="position:absolute;left:26px;top:181px;font-family:'Liberation Sans',sans-serif;font-size:5.8px;line-height:1;color:#222;white-space:nowrap;">AppData</div><div style="position:absolute;left:14px;top:194px;width:7px;height:6px;background:#5a9ad8;"></div><div style="position:absolute;left:26px;top:194px;font-family:'Liberation Sans',sans-serif;font-size:5.8px;line-height:1;color:#222;white-space:nowrap;">Contacts</div><div style="position:absolute;left:14px;top:206px;width:7px;height:6px;background:#3a8ad8;"></div><div style="position:absolute;left:26px;top:206px;font-family:'Liberation Sans',sans-serif;font-size:5.8px;line-height:1;color:#222;white-space:nowrap;">Desktop</div><div style="position:absolute;left:0px;top:218px;width:110px;height:12px;background:#d9d9d9;"></div><div style="position:absolute;left:14px;top:221px;width:7px;height:6px;background:#7a8a9a;"></div><div style="position:absolute;left:26px;top:221px;font-family:'Liberation Sans',sans-serif;font-size:5.8px;line-height:1;color:#222;white-space:nowrap;">Documents</div><div style="position:absolute;left:14px;top:233px;width:7px;height:6px;background:#3a8ad8;"></div><div style="position:absolute;left:26px;top:233px;font-family:'Liberation Sans',sans-serif;font-size:5.8px;line-height:1;color:#222;white-space:nowrap;">Downloads</div><div style="position:absolute;left:14px;top:245px;width:7px;height:6px;background:#f0c040;"></div><div style="position:absolute;left:26px;top:245px;font-family:'Liberation Sans',sans-serif;font-size:5.8px;line-height:1;color:#222;white-space:nowrap;">Favorites</div><div style="position:absolute;left:14px;top:258px;width:7px;height:6px;background:#3a8ad8;"></div><div style="position:absolute;left:26px;top:258px;font-family:'Liberation Sans',sans-serif;font-size:5.8px;line-height:1;color:#222;white-space:nowrap;">Links</div><div style="position:absolute;left:14px;top:271px;width:7px;height:6px;background:#d05a8a;"></div><div style="position:absolute;left:26px;top:271px;font-family:'Liberation Sans',sans-serif;font-size:5.8px;line-height:1;color:#222;white-space:nowrap;">Music</div><div style="position:absolute;left:14px;top:284px;width:7px;height:6px;background:#3a8ad8;"></div><div style="position:absolute;left:26px;top:284px;font-family:'Liberation Sans',sans-serif;font-size:5.8px;line-height:1;color:#222;white-space:nowrap;">OneDrive</div><div style="position:absolute;left:14px;top:296px;width:7px;height:6px;background:#5a7aa8;"></div><div style="position:absolute;left:26px;top:296px;font-family:'Liberation Sans',sans-serif;font-size:5.8px;line-height:1;color:#222;white-space:nowrap;">Pictures</div><div style="position:absolute;left:14px;top:309px;width:7px;height:6px;background:#f0c040;"></div><div style="position:absolute;left:26px;top:309px;font-family:'Liberation Sans',sans-serif;font-size:5.8px;line-height:1;color:#222;white-space:nowrap;">PBS</div><div style="position:absolute;left:14px;top:320px;width:7px;height:6px;background:#5a9ad8;"></div><div style="position:absolute;left:26px;top:320px;font-family:'Liberation Sans',sans-serif;font-size:5.8px;line-height:1;color:#222;white-space:nowrap;">Saved Games</div><div style="position:absolute;left:14px;top:332px;width:7px;height:6px;background:#888;"></div><div style="position:absolute;left:26px;top:332px;font-family:'Liberation Sans',sans-serif;font-size:5.8px;line-height:1;color:#222;white-space:nowrap;">Searches</div><div style="position:absolute;left:116px;top:44px;width:0.8px;height:296px;background:#e5e5e5;"></div><div style="position:absolute;left:113px;top:50px;width:2.5px;height:60px;background:#cdcdcd;"></div><div style="position:absolute;left:129.5px;top:50.5px;font-family:'Liberation Sans',sans-serif;font-size:5.8px;line-height:1;color:#4c607a;white-space:nowrap;">Name</div><div style="position:absolute;left:266px;top:50.5px;font-family:'Liberation Sans',sans-serif;font-size:5.8px;line-height:1;color:#4c607a;white-space:nowrap;">Date modified</div><div style="position:absolute;left:327px;top:50.5px;font-family:'Liberation Sans',sans-serif;font-size:5.8px;line-height:1;color:#4c607a;white-space:nowrap;">Type</div><div style="position:absolute;left:390.6px;top:50.5px;font-family:'Liberation Sans',sans-serif;font-size:5.8px;line-height:1;color:#4c607a;white-space:nowrap;">Size</div><div style="position:absolute;left:261px;top:46px;width:0.7px;height:16px;background:#e5e5e5;"></div><div style="position:absolute;left:322px;top:46px;width:0.7px;height:16px;background:#e5e5e5;"></div><div style="position:absolute;left:385.6px;top:46px;width:0.7px;height:16px;background:#e5e5e5;"></div><div style="position:absolute;left:427.5px;top:46px;width:0.7px;height:16px;background:#e5e5e5;"></div><div style="position:absolute;left:129px;top:68px;width:6px;height:6px;background:#f8c846;"></div><div style="position:absolute;left:136px;top:68px;font-family:'Liberation Sans',sans-serif;font-size:5.8px;line-height:1;color:#222;white-space:nowrap;">Arch90</div><div style="position:absolute;left:266px;top:68px;font-family:'Liberation Sans',sans-serif;font-size:5.8px;line-height:1;color:#6d6d6d;white-space:nowrap;">04.03.2026 11:...</div><div style="position:absolute;left:327px;top:68px;font-family:'Liberation Sans',sans-serif;font-size:5.8px;line-height:1;color:#6d6d6d;white-space:nowrap;">File folder</div><div style="position:absolute;left:129px;top:79.7px;width:6px;height:6px;background:#d35030;"></div><div style="position:absolute;left:136px;top:79.7px;font-family:'Liberation Sans',sans-serif;font-size:5.8px;line-height:1;color:#222;white-space:nowrap;">Fotografēšanas_pamati.odp</div><div style="position:absolute;left:266px;top:79.7px;font-family:'Liberation Sans',sans-serif;font-size:5.8px;line-height:1;color:#6d6d6d;white-space:nowrap;">04.03.2026 11:...</div><div style="position:absolute;left:327px;top:79.7px;font-family:'Liberation Sans',sans-serif;font-size:5.8px;line-height:1;color:#6d6d6d;white-space:nowrap;">OpenOffice prese...</div><div style="position:absolute;left:380px;top:77.2px;width:46px;font-family:'Liberation Sans',sans-serif;font-size:7.8px;line-height:10px;color:#6d6d6d;text-align:right;white-space:nowrap">22 504 KB</div><div style="position:absolute;left:126.5px;top:88px;width:300px;height:10.5px;background:#d9d9d9;"></div><div style="position:absolute;left:129px;top:90px;width:6px;height:6px;background:#e05050;"></div><div style="position:absolute;left:136px;top:90px;font-family:'Liberation Sans',sans-serif;font-size:5.8px;line-height:1;color:#222;white-space:nowrap;">Fotografēšanas_pamati.pdf</div><div style="position:absolute;left:266px;top:90px;font-family:'Liberation Sans',sans-serif;font-size:5.8px;line-height:1;color:#6d6d6d;white-space:nowrap;">04.03.2026 11:...</div><div style="position:absolute;left:327px;top:90px;font-family:'Liberation Sans',sans-serif;font-size:5.8px;line-height:1;color:#6d6d6d;white-space:nowrap;">Adobe Acrobat D...</div><div style="position:absolute;left:380px;top:87.5px;width:46px;font-family:'Liberation Sans',sans-serif;font-size:7.8px;line-height:10px;color:#6d6d6d;text-align:right;white-space:nowrap">26 503 KB</div><div style="position:absolute;left:8px;top:342.5px;font-family:'Liberation Sans',sans-serif;font-size:5.8px;line-height:1;color:#333;white-space:nowrap;">3 items &nbsp; 1 item selected &nbsp;741 KB</div><div style="position:absolute;left:457px;top:338px;width:11px;height:12px;border:1px solid #7ab8f0;background:#e5f1fb;box-sizing:border-box"></div><svg style="position:absolute;left:458px;top:340px;" width="10" height="9" viewBox="0 0 10 9"><path d="M1 1.5H9M1 4.5H9M1 7.5H9M3.5 0V9" stroke="#777" stroke-width="0.6"/></svg><svg style="position:absolute;left:470px;top:340px;" width="10" height="9" viewBox="0 0 10 9"><rect x="0.5" y="0.5" width="9" height="8" fill="#eee" stroke="#999" stroke-width="0.6"/><rect x="2" y="3" width="5" height="3" fill="#333"/></svg><div style="position:absolute;left:0px;top:0px;width:482px;height:352px;border:1px solid #9a9a9a;box-sizing:border-box"></div></div></div><div style="position:absolute;left:600px;top:0px;width:200px;height:450px;background:#000;"></div><div style="position:absolute;left:602px;top:12px;transform-origin:0 0;transform:scale(0.702)"><div style="position:absolute;left:0px;top:0px;width:282px;height:176px;background:#fff;overflow:hidden"><div style="position:absolute;left:3px;top:0.8px;font-family:'Liberation Serif',serif;font-size:3.4px;line-height:1;color:#111;white-space:nowrap;">Fotografēšanas pamati</div><div style="position:absolute;left:262px;top:0.8px;font-family:'Liberation Serif',serif;font-size:3.4px;line-height:1;color:#111;white-space:nowrap;">25.06.2021</div><div style="position:absolute;left:4px;top:11.4px;width:201px;height:150px;background:#dcdcdc;"></div><div style="position:absolute;left:35.5px;top:18px;font-family:'Liberation Sans',sans-serif;font-size:10.8px;line-height:1;color:#222;white-space:nowrap;font-weight:bold;transform-origin:0 0;transform:scaleX(0.955);text-shadow:0.6px 0.6px 0 #fff;-webkit-text-stroke:0.3px #222">Fokusa attālums un redzes leņķis</div><svg style="position:absolute;left:0;top:0" width="100" height="176" viewBox="0 0 100 176"><path d="M44 55 L57.4 49.5 M45 72 L57.4 68 M42 78 L57.4 87.5 M44 101 L57.4 91.5 M45 118 L57.4 113 M42 124 L57.4 130" stroke="#8aa" stroke-width="0.5" fill="none"/></svg><div style="position:absolute;left:13px;top:45.5px;font-family:'Liberation Sans',sans-serif;font-size:3px;line-height:1;color:#333;white-space:nowrap;">(1) 35 mm</div><div style="position:absolute;left:14.8px;top:46.5px;width:36.4px;height:36.4px;border-radius:50%;background:#fff;"></div><div style="position:absolute;left:15.8px;top:47.5px;width:34.4px;height:34.4px;border-radius:50%;background:#3d4246;overflow:hidden"><div style="position:absolute;left:4.816px;top:8.6px;width:24.767999999999997px;height:16.34px;background:#f4f4f4;border:1px solid #c33;box-sizing:border-box;overflow:hidden"><div style="position:absolute;left:1.5px;top:1.5px;width:21.767999999999997px;height:13.34px;background:#bfe0f0;overflow:hidden"><svg width="21.767999999999997" height="13.34" viewBox="0 0 21.767999999999997 13.34" style="position:absolute;left:0;top:0"><circle cx="9.123119999999998" cy="5.336" r="1.6141400000000001" fill="#f39a1e"/><circle cx="12.644879999999999" cy="5.336" r="1.6141400000000001" fill="#f39a1e"/><circle cx="10.883999999999999" cy="3.57512" r="1.6141400000000001" fill="#f5a623"/><circle cx="10.883999999999999" cy="7.0968800000000005" r="1.6141400000000001" fill="#e8801a"/><circle cx="10.883999999999999" cy="5.336" r="1.02718" fill="#c0392b"/><rect x="10.230959999999998" y="7.337000000000001" width="1.3060799999999997" height="4.002" fill="#2e8b3e"/><ellipse cx="13.060799999999999" cy="9.6048" rx="2.1767999999999996" ry="0.8004" fill="#3aa04a"/></svg></div></div><div style="position:absolute;left:14.62px;top:24.939999999999998px;width:5.159999999999999px;height:3.44px;background:#111"></div></div><div style="position:absolute;left:17.5px;top:86px;font-family:'Liberation Sans',sans-serif;font-size:2.6px;line-height:1;color:#333;white-space:nowrap;">(-1,6 × 100 × 0 × 100 mm)</div><div style="position:absolute;left:14.8px;top:92.6px;width:36.4px;height:36.4px;border-radius:50%;background:#fff;"></div><div style="position:absolute;left:15.8px;top:93.6px;width:34.4px;height:34.4px;border-radius:50%;background:#3d4246;overflow:hidden"><div style="position:absolute;left:4.816px;top:8.6px;width:24.767999999999997px;height:16.34px;background:#f4f4f4;border:1px solid #c33;box-sizing:border-box;overflow:hidden"><div style="position:absolute;left:1.5px;top:1.5px;width:21.767999999999997px;height:13.34px;background:#bfe0f0;overflow:hidden"><svg width="21.767999999999997" height="13.34" viewBox="0 0 21.767999999999997 13.34" style="position:absolute;left:0;top:0"><circle cx="5.249759999999999" cy="4.669" r="1.17392" fill="#f39a1e"/><circle cx="7.811039999999999" cy="4.669" r="1.17392" fill="#f39a1e"/><circle cx="6.530399999999999" cy="3.3883599999999996" r="1.17392" fill="#f5a623"/><circle cx="6.530399999999999" cy="5.94964" r="1.17392" fill="#e8801a"/><circle cx="6.530399999999999" cy="4.669" r="0.7470399999999999" fill="#c0392b"/><circle cx="12.868559999999999" cy="4.002" r="1.17392" fill="#f39a1e"/><circle cx="15.429839999999999" cy="4.002" r="1.17392" fill="#f39a1e"/><circle cx="14.149199999999999" cy="2.72136" r="1.17392" fill="#f5a623"/><circle cx="14.149199999999999" cy="5.28264" r="1.17392" fill="#e8801a"/><circle cx="14.149199999999999" cy="4.002" r="0.7470399999999999" fill="#c0392b"/><circle cx="9.603359999999999" cy="8.004" r="1.17392" fill="#f39a1e"/><circle cx="12.164639999999999" cy="8.004" r="1.17392" fill="#f39a1e"/><circle cx="10.883999999999999" cy="6.72336" r="1.17392" fill="#f5a623"/><circle cx="10.883999999999999" cy="9.28464" r="1.17392" fill="#e8801a"/><circle cx="10.883999999999999" cy="8.004" r="0.7470399999999999" fill="#c0392b"/><circle cx="3.0729599999999992" cy="9.338" r="1.17392" fill="#f39a1e"/><circle cx="5.634239999999999" cy="9.338" r="1.17392" fill="#f39a1e"/><circle cx="4.353599999999999" cy="8.05736" r="1.17392" fill="#f5a623"/><circle cx="4.353599999999999" cy="10.61864" r="1.17392" fill="#e8801a"/><circle cx="4.353599999999999" cy="9.338" r="0.7470399999999999" fill="#c0392b"/><circle cx="16.13376" cy="8.671" r="1.17392" fill="#f39a1e"/><circle cx="18.695039999999995" cy="8.671" r="1.17392" fill="#f39a1e"/><circle cx="17.414399999999997" cy="7.390359999999999" r="1.17392" fill="#f5a623"/><circle cx="17.414399999999997" cy="9.95164" r="1.17392" fill="#e8801a"/><circle cx="17.414399999999997" cy="8.671" r="0.7470399999999999" fill="#c0392b"/></svg></div></div><div style="position:absolute;left:10.319999999999999px;top:24.939999999999998px;width:15.48px;height:8.6px;background:#111;border-radius:2px"></div></div><div style="position:absolute;left:12px;top:91.5px;font-family:'Liberation Sans',sans-serif;font-size:3px;line-height:1;color:#333;white-space:nowrap;">(2) 7 %</div><div style="position:absolute;left:57.4px;top:49.1px;width:24.4px;height:19.1px;background:#d4eaf4;border:0.8px solid #c66;box-sizing:border-box;overflow:hidden"><svg width="24.4" height="19.1" viewBox="0 0 24.4 19.1" style="position:absolute;left:0;top:0"><circle cx="9.678799999999999" cy="7.640000000000001" r="2.3111" fill="#f39a1e"/><circle cx="14.7212" cy="7.640000000000001" r="2.3111" fill="#f39a1e"/><circle cx="12.2" cy="5.1188" r="2.3111" fill="#f5a623"/><circle cx="12.2" cy="10.161200000000001" r="2.3111" fill="#e8801a"/><circle cx="12.2" cy="7.640000000000001" r="1.4707" fill="#c0392b"/><rect x="11.467999999999998" y="10.505" width="1.464" height="5.73" fill="#2e8b3e"/><ellipse cx="14.639999999999999" cy="13.752" rx="2.44" ry="1.1460000000000001" fill="#3aa04a"/></svg><div style="position:absolute;left:3.6599999999999997px;top:15.900000000000002px;width:17.08px;height:1.8px;background:#d23;"></div></div><div style="position:absolute;left:57.4px;top:71.9px;width:14.4px;height:15.6px;background:#d4eaf4;border:0.8px solid #36c;box-sizing:border-box;overflow:hidden"><svg width="14.4" height="15.6" viewBox="0 0 14.4 15.6" style="position:absolute;left:0;top:0"><circle cx="5.2992" cy="6.24" r="1.7424000000000002" fill="#f39a1e"/><circle cx="9.1008" cy="6.24" r="1.7424000000000002" fill="#f39a1e"/><circle cx="7.2" cy="4.3392" r="1.7424000000000002" fill="#f5a623"/><circle cx="7.2" cy="8.1408" r="1.7424000000000002" fill="#e8801a"/><circle cx="7.2" cy="6.24" r="1.1088" fill="#c0392b"/><rect x="6.768" y="8.58" width="0.864" height="4.68" fill="#2e8b3e"/><ellipse cx="8.64" cy="11.232" rx="1.4400000000000002" ry="0.9359999999999999" fill="#3aa04a"/></svg><div style="position:absolute;left:2.16px;top:12.399999999999999px;width:10.08px;height:1.8px;background:#d23;"></div></div><div style="position:absolute;left:57.4px;top:90.9px;width:24.4px;height:22.1px;background:#d4eaf4;border:0.8px solid #c66;box-sizing:border-box;overflow:hidden"><svg width="24.4" height="22.1" viewBox="0 0 24.4 22.1" style="position:absolute;left:0;top:0"><circle cx="5.1983999999999995" cy="7.735" r="1.9448000000000005" fill="#f39a1e"/><circle cx="9.4416" cy="7.735" r="1.9448000000000005" fill="#f39a1e"/><circle cx="7.319999999999999" cy="5.6134" r="1.9448000000000005" fill="#f5a623"/><circle cx="7.319999999999999" cy="9.8566" r="1.9448000000000005" fill="#e8801a"/><circle cx="7.319999999999999" cy="7.735" r="1.2376" fill="#c0392b"/><circle cx="13.738399999999999" cy="6.63" r="1.9448000000000005" fill="#f39a1e"/><circle cx="17.9816" cy="6.63" r="1.9448000000000005" fill="#f39a1e"/><circle cx="15.86" cy="4.5084" r="1.9448000000000005" fill="#f5a623"/><circle cx="15.86" cy="8.7516" r="1.9448000000000005" fill="#e8801a"/><circle cx="15.86" cy="6.63" r="1.2376" fill="#c0392b"/><circle cx="10.078399999999998" cy="13.26" r="1.9448000000000005" fill="#f39a1e"/><circle cx="14.3216" cy="13.26" r="1.9448000000000005" fill="#f39a1e"/><circle cx="12.2" cy="11.138399999999999" r="1.9448000000000005" fill="#f5a623"/><circle cx="12.2" cy="15.3816" r="1.9448000000000005" fill="#e8801a"/><circle cx="12.2" cy="13.26" r="1.2376" fill="#c0392b"/><circle cx="2.7583999999999995" cy="15.47" r="1.9448000000000005" fill="#f39a1e"/><circle cx="7.0016" cy="15.47" r="1.9448000000000005" fill="#f39a1e"/><circle cx="4.88" cy="13.3484" r="1.9448000000000005" fill="#f5a623"/><circle cx="4.88" cy="17.5916" r="1.9448000000000005" fill="#e8801a"/><circle cx="4.88" cy="15.47" r="1.2376" fill="#c0392b"/><circle cx="17.3984" cy="14.365000000000002" r="1.9448000000000005" fill="#f39a1e"/><circle cx="21.6416" cy="14.365000000000002" r="1.9448000000000005" fill="#f39a1e"/><circle cx="19.52" cy="12.243400000000001" r="1.9448000000000005" fill="#f5a623"/><circle cx="19.52" cy="16.486600000000003" r="1.9448000000000005" fill="#e8801a"/><circle cx="19.52" cy="14.365000000000002" r="1.2376" fill="#c0392b"/></svg><div style="position:absolute;left:3.6599999999999997px;top:18.900000000000002px;width:17.08px;height:1.8px;background:#d23;"></div></div><div style="position:absolute;left:57.4px;top:115.2px;width:14.4px;height:15.5px;background:#d4eaf4;border:0.8px solid #36c;box-sizing:border-box;overflow:hidden"><svg width="14.4" height="15.5" viewBox="0 0 14.4 15.5" style="position:absolute;left:0;top:0"><circle cx="2.9376" cy="5.425" r="1.2672000000000003" fill="#f39a1e"/><circle cx="5.702400000000001" cy="5.425" r="1.2672000000000003" fill="#f39a1e"/><circle cx="4.32" cy="4.0426" r="1.2672000000000003" fill="#f5a623"/><circle cx="4.32" cy="6.8073999999999995" r="1.2672000000000003" fill="#e8801a"/><circle cx="4.32" cy="5.425" r="0.8064" fill="#c0392b"/><circle cx="7.977600000000001" cy="4.6499999999999995" r="1.2672000000000003" fill="#f39a1e"/><circle cx="10.742400000000002" cy="4.6499999999999995" r="1.2672000000000003" fill="#f39a1e"/><circle cx="9.360000000000001" cy="3.2675999999999994" r="1.2672000000000003" fill="#f5a623"/><circle cx="9.360000000000001" cy="6.032399999999999" r="1.2672000000000003" fill="#e8801a"/><circle cx="9.360000000000001" cy="4.6499999999999995" r="0.8064" fill="#c0392b"/><circle cx="5.8176000000000005" cy="9.299999999999999" r="1.2672000000000003" fill="#f39a1e"/><circle cx="8.5824" cy="9.299999999999999" r="1.2672000000000003" fill="#f39a1e"/><circle cx="7.2" cy="7.917599999999998" r="1.2672000000000003" fill="#f5a623"/><circle cx="7.2" cy="10.6824" r="1.2672000000000003" fill="#e8801a"/><circle cx="7.2" cy="9.299999999999999" r="0.8064" fill="#c0392b"/><circle cx="1.4976000000000003" cy="10.85" r="1.2672000000000003" fill="#f39a1e"/><circle cx="4.2624" cy="10.85" r="1.2672000000000003" fill="#f39a1e"/><circle cx="2.8800000000000003" cy="9.4676" r="1.2672000000000003" fill="#f5a623"/><circle cx="2.8800000000000003" cy="12.2324" r="1.2672000000000003" fill="#e8801a"/><circle cx="2.8800000000000003" cy="10.85" r="0.8064" fill="#c0392b"/><circle cx="10.1376" cy="10.075000000000001" r="1.2672000000000003" fill="#f39a1e"/><circle cx="12.902400000000002" cy="10.075000000000001" r="1.2672000000000003" fill="#f39a1e"/><circle cx="11.520000000000001" cy="8.6926" r="1.2672000000000003" fill="#f5a623"/><circle cx="11.520000000000001" cy="11.457400000000002" r="1.2672000000000003" fill="#e8801a"/><circle cx="11.520000000000001" cy="10.075000000000001" r="0.8064" fill="#c0392b"/></svg><div style="position:absolute;left:2.16px;top:12.3px;width:10.08px;height:1.8px;background:#d23;"></div></div><div style="position:absolute;left:107px;top:47.0px;font-family:'Liberation Serif',serif;font-size:6.6px;line-height:1;color:#000;white-space:nowrap;-webkit-text-stroke:0.1px #000">Parastajām 35 mm fotokamerām</div><div style="position:absolute;left:107px;top:54.5px;font-family:'Liberation Serif',serif;font-size:6.6px;line-height:1;color:#000;white-space:nowrap;-webkit-text-stroke:0.1px #000">platleņķa objektīvi ir &lt; 40 mm, bet</div><div style="position:absolute;left:107px;top:62.0px;font-family:'Liberation Serif',serif;font-size:6.6px;line-height:1;color:#000;white-space:nowrap;-webkit-text-stroke:0.1px #000">teleobjektīvi &gt; 70 mm.</div><div style="position:absolute;left:107px;top:72.0px;font-family:'Liberation Serif',serif;font-size:6.6px;line-height:1;color:#000;white-space:nowrap;-webkit-text-stroke:0.1px #000">Digitālām fotokamerām var</div><div style="position:absolute;left:107px;top:79.5px;font-family:'Liberation Serif',serif;font-size:6.6px;line-height:1;color:#000;white-space:nowrap;-webkit-text-stroke:0.1px #000">atšķirties matricas izmēri (attēla</div><div style="position:absolute;left:107px;top:87.0px;font-family:'Liberation Serif',serif;font-size:6.6px;line-height:1;color:#000;white-space:nowrap;-webkit-text-stroke:0.1px #000">reģistrējošais laukums).</div><div style="position:absolute;left:101.2px;top:49.3px;width:2.6px;height:2.6px;background:#111;border-radius:50%"></div><div style="position:absolute;left:101.2px;top:74.2px;width:2.6px;height:2.6px;background:#111;border-radius:50%"></div><div style="position:absolute;left:207.5px;top:13.0px;font-family:'Liberation Sans',sans-serif;font-size:4.8px;line-height:1;color:#222;white-space:nowrap;">&nbsp;&nbsp;&nbsp;Pilna matrica atbilst 35 mm</div><div style="position:absolute;left:207.5px;top:18.2px;font-family:'Liberation Sans',sans-serif;font-size:4.8px;line-height:1;color:#222;white-space:nowrap;">fotofilmiņas pilnam kadram (24 ×</div><div style="position:absolute;left:207.5px;top:23.4px;font-family:'Liberation Sans',sans-serif;font-size:4.8px;line-height:1;color:#222;white-space:nowrap;">36 mm). Turpretī, runājot par</div><div style="position:absolute;left:207.5px;top:28.6px;font-family:'Liberation Sans',sans-serif;font-size:4.8px;line-height:1;color:#222;white-space:nowrap;">fokusa attālumu, ekvivalentais</div><div style="position:absolute;left:207.5px;top:33.8px;font-family:'Liberation Sans',sans-serif;font-size:4.8px;line-height:1;color:#222;white-space:nowrap;">fokusa attālums 35 mm</div><div style="position:absolute;left:207.5px;top:39.0px;font-family:'Liberation Sans',sans-serif;font-size:4.8px;line-height:1;color:#222;white-space:nowrap;">fotokameras objektīvam.</div><div style="position:absolute;left:207.5px;top:46.0px;font-family:'Liberation Sans',sans-serif;font-size:4.8px;line-height:1;color:#222;white-space:nowrap;">&nbsp;&nbsp;&nbsp;Augstas kvalitātes matricu</div><div style="position:absolute;left:207.5px;top:51.2px;font-family:'Liberation Sans',sans-serif;font-size:4.8px;line-height:1;color:#222;white-space:nowrap;">fotoaparātiem (piemēram, Nikon</div><div style="position:absolute;left:207.5px;top:56.4px;font-family:'Liberation Sans',sans-serif;font-size:4.8px;line-height:1;color:#222;white-space:nowrap;">D3x), tipiski sensora izmēri ir no</div><div style="position:absolute;left:207.5px;top:61.6px;font-family:'Liberation Sans',sans-serif;font-size:4.8px;line-height:1;color:#222;white-space:nowrap;">4 × 5, 4 × 7 un 8 × 8 cm. Tās</div><div style="position:absolute;left:207.5px;top:66.8px;font-family:'Liberation Sans',sans-serif;font-size:4.8px;line-height:1;color:#222;white-space:nowrap;">tajā ir fotomatricas digitālās</div><div style="position:absolute;left:207.5px;top:72.0px;font-family:'Liberation Sans',sans-serif;font-size:4.8px;line-height:1;color:#222;white-space:nowrap;">kameras, piemēram, pie</div><div style="position:absolute;left:207.5px;top:77.2px;font-family:'Liberation Sans',sans-serif;font-size:4.8px;line-height:1;color:#222;white-space:nowrap;">23%, ņemot matricas izmēru</div><div style="position:absolute;left:207.5px;top:82.4px;font-family:'Liberation Sans',sans-serif;font-size:4.8px;line-height:1;color:#222;white-space:nowrap;">"Nikon 1 DX" kameras ar</div><div style="position:absolute;left:207.5px;top:87.6px;font-family:'Liberation Sans',sans-serif;font-size:4.8px;line-height:1;color:#222;white-space:nowrap;">fokusa attālumu 32,8 × 23,9 mm</div><div style="position:absolute;left:207.5px;top:92.80000000000001px;font-family:'Liberation Sans',sans-serif;font-size:4.8px;line-height:1;color:#222;white-space:nowrap;">sensoru.</div><div style="position:absolute;left:5px;top:156.3px;width:6.5px;height:5.5px;border:0.9px solid #222;border-radius:50%;box-sizing:border-box;background:#fff"></div><div style="position:absolute;left:6.3px;top:157.6px;font-family:'Liberation Sans',sans-serif;font-size:2.6px;line-height:1;color:#222;white-space:nowrap;font-weight:bold">cc</div><div style="position:absolute;left:12.5px;top:157.2px;font-family:'Liberation Sans',sans-serif;font-size:3px;line-height:1;color:#333;white-space:nowrap;font-weight:bold">BY SA</div><div style="position:absolute;left:116px;top:158.6px;width:88px;height:1.6px;background:#888;"></div><div style="position:absolute;left:3px;top:172.3px;font-family:'Liberation Serif',serif;font-size:3.4px;line-height:1;color:#111;white-space:nowrap;">27 (27) · Tekā: Kārlis Kalviškis</div></div></div><svg style="position:absolute;left:632.3px;top:167px;" width="6" height="12" viewBox="0 0 6 12"><path d="M3 0.6 L5.2 4.2 H3.6 V11.6 H2.4 V4.2 H0.8Z" fill="#ffe24a"/><path d="M3 3 V11" stroke="#fff7c0" stroke-width="0.5"/></svg><svg style="position:absolute;left:649.6px;top:167px;" width="6" height="12" viewBox="0 0 6 12"><path d="M3 0.6 L5.2 4.2 H3.6 V11.6 H2.4 V4.2 H0.8Z" fill="#ffe24a"/><path d="M3 3 V11" stroke="#fff7c0" stroke-width="0.5"/></svg><svg style="position:absolute;left:666.6px;top:167px;" width="6" height="12" viewBox="0 0 6 12"><path d="M3 0.6 L5.2 4.2 H3.6 V11.6 H2.4 V4.2 H0.8Z" fill="#ffe24a"/><path d="M3 3 V11" stroke="#fff7c0" stroke-width="0.5"/></svg><svg style="position:absolute;left:683.5px;top:167px;" width="6" height="12" viewBox="0 0 6 12"><path d="M3 0.6 L5.2 4.2 H3.6 V11.6 H2.4 V4.2 H0.8Z" fill="#ffe24a"/><path d="M3 3 V11" stroke="#fff7c0" stroke-width="0.5"/></svg><svg style="position:absolute;left:697px;top:167px;" width="6" height="12" viewBox="0 0 6 12"><path d="M3 0.6 L5.2 4.2 H3.6 V11.6 H2.4 V4.2 H0.8Z" fill="#ffe24a"/><path d="M3 3 V11" stroke="#fff7c0" stroke-width="0.5"/></svg><svg style="position:absolute;left:710.1px;top:167px;" width="6" height="12" viewBox="0 0 6 12"><path d="M3 0.6 L5.2 4.2 H3.6 V11.6 H2.4 V4.2 H0.8Z" fill="#ffe24a"/><path d="M3 3 V11" stroke="#fff7c0" stroke-width="0.5"/></svg><svg style="position:absolute;left:727.4px;top:167px;" width="6" height="12" viewBox="0 0 6 12"><path d="M3 0.6 L5.2 4.2 H3.6 V11.6 H2.4 V4.2 H0.8Z" fill="#ffe24a"/><path d="M3 3 V11" stroke="#fff7c0" stroke-width="0.5"/></svg><svg style="position:absolute;left:744.3px;top:167px;" width="6" height="12" viewBox="0 0 6 12"><path d="M3 0.6 L5.2 4.2 H3.6 V11.6 H2.4 V4.2 H0.8Z" fill="#ffe24a"/><path d="M3 3 V11" stroke="#fff7c0" stroke-width="0.5"/></svg><svg style="position:absolute;left:761.3px;top:167px;" width="6" height="12" viewBox="0 0 6 12"><path d="M3 0.6 L5.2 4.2 H3.6 V11.6 H2.4 V4.2 H0.8Z" fill="#ffe24a"/><path d="M3 3 V11" stroke="#fff7c0" stroke-width="0.5"/></svg><div style="position:absolute;left:633px;top:180.5px;font-family:'Liberation Sans',sans-serif;font-size:15px;letter-spacing:0.25px;line-height:1;font-weight:bold;color:#f3e07a;background:linear-gradient(#ffde30 30%,#fff8d0 90%);-webkit-background-clip:text;background-clip:text;-webkit-text-fill-color:transparent;white-space:nowrap">To rāda projektors</div><div style="position:absolute;left:612.5px;top:425px;width:187.5px;height:25px;background:#fff;"></div><svg style="position:absolute;left:617px;top:426px;" width="18" height="23" viewBox="0 0 18 23"><rect x="1" y="2" width="16" height="20" rx="3" fill="#e4e4e4" stroke="#222" stroke-width="1.2"/><path d="M9 2 V9" stroke="#222" stroke-width="1"/><path d="M9 0 Q8 1 9 2" stroke="#222" stroke-width="1" fill="none"/></svg><div style="position:absolute;left:638.7px;top:427.5px;width:35px;height:20px;background:linear-gradient(#fafafa,#eee);border:1px solid #e6e6e6;border-radius:2px;box-sizing:border-box;overflow:hidden"><div style="position:absolute;left:5px;top:5.5px;font-family:'Liberation Sans',sans-serif;font-size:7px;font-weight:bold;color:#ddd;line-height:1"></div></div><div style="position:absolute;left:644px;top:429px;font-family:'Liberation Sans',sans-serif;font-size:4px;color:#ddd">Shift</div><svg style="position:absolute;left:647px;top:433px;" width="12" height="10" viewBox="0 0 12 10"><path d="M6 1 L11 6 H8 V9 H4 V6 H1Z" fill="none" stroke="#ddd" stroke-width="0.8"/></svg><div style="position:absolute;left:676px;top:427.5px;width:26.5px;height:20px;background:linear-gradient(#fafafa,#eee);border:1px solid #e6e6e6;border-radius:2px;box-sizing:border-box;overflow:hidden"><div style="position:absolute;left:5px;top:5.5px;font-family:'Liberation Sans',sans-serif;font-size:7px;font-weight:bold;color:#ddd;line-height:1">Ctrl</div></div><div style="position:absolute;left:705.5px;top:427.5px;width:26.5px;height:20px;background:linear-gradient(#fafafa,#eee);border:1px solid #e6e6e6;border-radius:2px;box-sizing:border-box;overflow:hidden"><div style="position:absolute;left:5px;top:5.5px;font-family:'Liberation Sans',sans-serif;font-size:7px;font-weight:bold;color:#ddd;line-height:1"></div></div><svg style="position:absolute;left:713px;top:431px;" width="11" height="12" viewBox="0 0 11 12"><path d="M0.5 2 L10.5 0.5 V11.5 L0.5 10Z" fill="#eee" stroke="#e2e2e2" stroke-width="0.6"/></svg><div style="position:absolute;left:734.5px;top:427.5px;width:26.5px;height:20px;background:linear-gradient(#e8e8e8,#9a9a9a);border:1.5px solid #333;border-radius:2px;box-sizing:border-box;overflow:hidden"><div style="position:absolute;left:5px;top:5.5px;font-family:'Liberation Sans',sans-serif;font-size:7px;font-weight:bold;color:#000;line-height:1">Alt</div></div><div style="position:absolute;left:763.7px;top:427.5px;width:35px;height:20px;background:linear-gradient(#e8e8e8,#9a9a9a);border:1.5px solid #333;border-radius:2px;box-sizing:border-box"></div><div style="position:absolute;left:768px;top:430px;font-family:'Liberation Sans',sans-serif;font-size:5px;line-height:1;color:#000;white-space:nowrap;font-weight:bold">Tab</div><div style="position:absolute;left:768px;top:437px;font-family:'Liberation Sans',sans-serif;font-size:6px;line-height:1;color:#000;white-space:nowrap;font-weight:bold">⇆</div></div></body></html>
